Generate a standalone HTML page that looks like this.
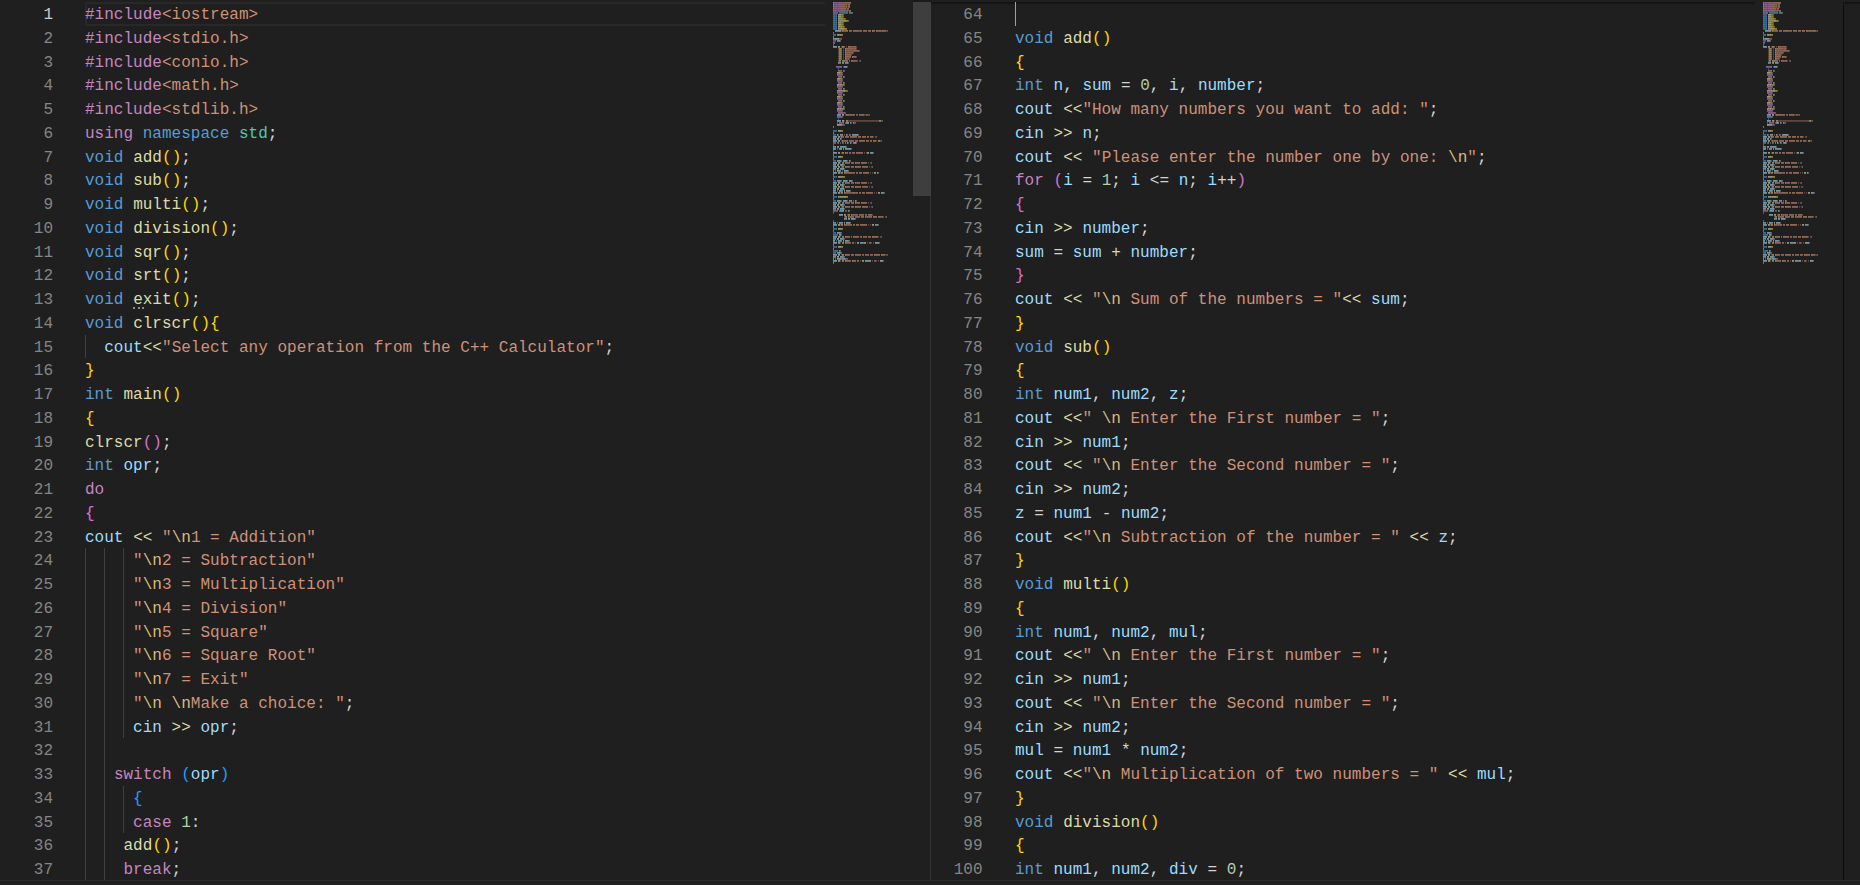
<!DOCTYPE html><html><head><meta charset="utf-8"><style>
*{margin:0;padding:0;box-sizing:border-box}
html,body{width:1860px;height:885px;overflow:hidden;background:#1f1f1f}
body{position:relative;font-family:"Liberation Mono",monospace;font-size:16px}
.ed{position:absolute;top:0;height:880px;overflow:hidden;background:#1f1f1f}
.ln{position:absolute;height:23.75px;line-height:23.75px;padding-top:2px;text-align:right;color:#858585;white-space:pre}
.ln.act{color:#cccccc}
.cl{position:absolute;z-index:2;height:23.75px;line-height:23.75px;padding-top:2px;white-space:pre;color:#d4d4d4;letter-spacing:0.02px}
.cl i{font-style:normal}
.g{position:absolute;width:1px;background:#404040}
.mm{position:absolute;opacity:0.9}
</style></head><body>
<div class="ed" style="left:0px;width:930px">
<div class="ln act" style="top:2.00px;left:0;width:53.00px">1</div>
<div class="cl" style="top:2.00px;left:85px"><i style="color:#c586c0">#include</i><i style="color:#ce9178">&lt;iostream&gt;</i></div>
<div class="ln" style="top:25.75px;left:0;width:53.00px">2</div>
<div class="cl" style="top:25.75px;left:85px"><i style="color:#c586c0">#include</i><i style="color:#ce9178">&lt;stdio.h&gt;</i></div>
<div class="ln" style="top:49.50px;left:0;width:53.00px">3</div>
<div class="cl" style="top:49.50px;left:85px"><i style="color:#c586c0">#include</i><i style="color:#ce9178">&lt;conio.h&gt;</i></div>
<div class="ln" style="top:73.25px;left:0;width:53.00px">4</div>
<div class="cl" style="top:73.25px;left:85px"><i style="color:#c586c0">#include</i><i style="color:#ce9178">&lt;math.h&gt;</i></div>
<div class="ln" style="top:97.00px;left:0;width:53.00px">5</div>
<div class="cl" style="top:97.00px;left:85px"><i style="color:#c586c0">#include</i><i style="color:#ce9178">&lt;stdlib.h&gt;</i></div>
<div class="ln" style="top:120.75px;left:0;width:53.00px">6</div>
<div class="cl" style="top:120.75px;left:85px"><i style="color:#c586c0">using</i> <i style="color:#569cd6">namespace</i> <i style="color:#4ec9b0">std</i><i style="color:#d4d4d4">;</i></div>
<div class="ln" style="top:144.50px;left:0;width:53.00px">7</div>
<div class="cl" style="top:144.50px;left:85px"><i style="color:#569cd6">void</i> <i style="color:#dcdcaa">add</i><i style="color:#ffd700">(</i><i style="color:#ffd700">)</i><i style="color:#d4d4d4">;</i></div>
<div class="ln" style="top:168.25px;left:0;width:53.00px">8</div>
<div class="cl" style="top:168.25px;left:85px"><i style="color:#569cd6">void</i> <i style="color:#dcdcaa">sub</i><i style="color:#ffd700">(</i><i style="color:#ffd700">)</i><i style="color:#d4d4d4">;</i></div>
<div class="ln" style="top:192.00px;left:0;width:53.00px">9</div>
<div class="cl" style="top:192.00px;left:85px"><i style="color:#569cd6">void</i> <i style="color:#dcdcaa">multi</i><i style="color:#ffd700">(</i><i style="color:#ffd700">)</i><i style="color:#d4d4d4">;</i></div>
<div class="ln" style="top:215.75px;left:0;width:53.00px">10</div>
<div class="cl" style="top:215.75px;left:85px"><i style="color:#569cd6">void</i> <i style="color:#dcdcaa">division</i><i style="color:#ffd700">(</i><i style="color:#ffd700">)</i><i style="color:#d4d4d4">;</i></div>
<div class="ln" style="top:239.50px;left:0;width:53.00px">11</div>
<div class="cl" style="top:239.50px;left:85px"><i style="color:#569cd6">void</i> <i style="color:#dcdcaa">sqr</i><i style="color:#ffd700">(</i><i style="color:#ffd700">)</i><i style="color:#d4d4d4">;</i></div>
<div class="ln" style="top:263.25px;left:0;width:53.00px">12</div>
<div class="cl" style="top:263.25px;left:85px"><i style="color:#569cd6">void</i> <i style="color:#dcdcaa">srt</i><i style="color:#ffd700">(</i><i style="color:#ffd700">)</i><i style="color:#d4d4d4">;</i></div>
<div class="ln" style="top:287.00px;left:0;width:53.00px">13</div>
<div class="cl" style="top:287.00px;left:85px"><i style="color:#569cd6">void</i> <i style="color:#dcdcaa">exit</i><i style="color:#ffd700">(</i><i style="color:#ffd700">)</i><i style="color:#d4d4d4">;</i></div>
<div class="ln" style="top:310.75px;left:0;width:53.00px">14</div>
<div class="cl" style="top:310.75px;left:85px"><i style="color:#569cd6">void</i> <i style="color:#dcdcaa">clrscr</i><i style="color:#ffd700">(</i><i style="color:#ffd700">)</i><i style="color:#ffd700">{</i></div>
<div class="ln" style="top:334.50px;left:0;width:53.00px">15</div>
<div class="g" style="top:334.50px;left:85.00px;height:23.75px"></div>
<div class="cl" style="top:334.50px;left:85px">  <i style="color:#9cdcfe">cout</i><i style="color:#dcdcaa">&lt;&lt;</i><i style="color:#ce9178">&quot;</i><i style="color:#ce9178">Select any operation from the C++ Calculator</i><i style="color:#ce9178">&quot;</i><i style="color:#d4d4d4">;</i></div>
<div class="ln" style="top:358.25px;left:0;width:53.00px">16</div>
<div class="cl" style="top:358.25px;left:85px"><i style="color:#ffd700">}</i></div>
<div class="ln" style="top:382.00px;left:0;width:53.00px">17</div>
<div class="cl" style="top:382.00px;left:85px"><i style="color:#569cd6">int</i> <i style="color:#dcdcaa">main</i><i style="color:#ffd700">(</i><i style="color:#ffd700">)</i></div>
<div class="ln" style="top:405.75px;left:0;width:53.00px">18</div>
<div class="cl" style="top:405.75px;left:85px"><i style="color:#ffd700">{</i></div>
<div class="ln" style="top:429.50px;left:0;width:53.00px">19</div>
<div class="cl" style="top:429.50px;left:85px"><i style="color:#dcdcaa">clrscr</i><i style="color:#da70d6">(</i><i style="color:#da70d6">)</i><i style="color:#d4d4d4">;</i></div>
<div class="ln" style="top:453.25px;left:0;width:53.00px">20</div>
<div class="cl" style="top:453.25px;left:85px"><i style="color:#569cd6">int</i> <i style="color:#9cdcfe">opr</i><i style="color:#d4d4d4">;</i></div>
<div class="ln" style="top:477.00px;left:0;width:53.00px">21</div>
<div class="cl" style="top:477.00px;left:85px"><i style="color:#c586c0">do</i></div>
<div class="ln" style="top:500.75px;left:0;width:53.00px">22</div>
<div class="cl" style="top:500.75px;left:85px"><i style="color:#da70d6">{</i></div>
<div class="ln" style="top:524.50px;left:0;width:53.00px">23</div>
<div class="cl" style="top:524.50px;left:85px"><i style="color:#9cdcfe">cout</i> <i style="color:#dcdcaa">&lt;&lt;</i> <i style="color:#ce9178">&quot;</i><i style="color:#d7ba7d">\n</i><i style="color:#ce9178">1 = Addition</i><i style="color:#ce9178">&quot;</i></div>
<div class="ln" style="top:548.25px;left:0;width:53.00px">24</div>
<div class="g" style="top:548.25px;left:85.00px;height:23.75px"></div>
<div class="g" style="top:548.25px;left:104.24px;height:23.75px"></div>
<div class="g" style="top:548.25px;left:123.48px;height:23.75px"></div>
<div class="cl" style="top:548.25px;left:85px">     <i style="color:#ce9178">&quot;</i><i style="color:#d7ba7d">\n</i><i style="color:#ce9178">2 = Subtraction</i><i style="color:#ce9178">&quot;</i></div>
<div class="ln" style="top:572.00px;left:0;width:53.00px">25</div>
<div class="g" style="top:572.00px;left:85.00px;height:23.75px"></div>
<div class="g" style="top:572.00px;left:104.24px;height:23.75px"></div>
<div class="g" style="top:572.00px;left:123.48px;height:23.75px"></div>
<div class="cl" style="top:572.00px;left:85px">     <i style="color:#ce9178">&quot;</i><i style="color:#d7ba7d">\n</i><i style="color:#ce9178">3 = Multiplication</i><i style="color:#ce9178">&quot;</i></div>
<div class="ln" style="top:595.75px;left:0;width:53.00px">26</div>
<div class="g" style="top:595.75px;left:85.00px;height:23.75px"></div>
<div class="g" style="top:595.75px;left:104.24px;height:23.75px"></div>
<div class="g" style="top:595.75px;left:123.48px;height:23.75px"></div>
<div class="cl" style="top:595.75px;left:85px">     <i style="color:#ce9178">&quot;</i><i style="color:#d7ba7d">\n</i><i style="color:#ce9178">4 = Division</i><i style="color:#ce9178">&quot;</i></div>
<div class="ln" style="top:619.50px;left:0;width:53.00px">27</div>
<div class="g" style="top:619.50px;left:85.00px;height:23.75px"></div>
<div class="g" style="top:619.50px;left:104.24px;height:23.75px"></div>
<div class="g" style="top:619.50px;left:123.48px;height:23.75px"></div>
<div class="cl" style="top:619.50px;left:85px">     <i style="color:#ce9178">&quot;</i><i style="color:#d7ba7d">\n</i><i style="color:#ce9178">5 = Square</i><i style="color:#ce9178">&quot;</i></div>
<div class="ln" style="top:643.25px;left:0;width:53.00px">28</div>
<div class="g" style="top:643.25px;left:85.00px;height:23.75px"></div>
<div class="g" style="top:643.25px;left:104.24px;height:23.75px"></div>
<div class="g" style="top:643.25px;left:123.48px;height:23.75px"></div>
<div class="cl" style="top:643.25px;left:85px">     <i style="color:#ce9178">&quot;</i><i style="color:#d7ba7d">\n</i><i style="color:#ce9178">6 = Square Root</i><i style="color:#ce9178">&quot;</i></div>
<div class="ln" style="top:667.00px;left:0;width:53.00px">29</div>
<div class="g" style="top:667.00px;left:85.00px;height:23.75px"></div>
<div class="g" style="top:667.00px;left:104.24px;height:23.75px"></div>
<div class="g" style="top:667.00px;left:123.48px;height:23.75px"></div>
<div class="cl" style="top:667.00px;left:85px">     <i style="color:#ce9178">&quot;</i><i style="color:#d7ba7d">\n</i><i style="color:#ce9178">7 = Exit</i><i style="color:#ce9178">&quot;</i></div>
<div class="ln" style="top:690.75px;left:0;width:53.00px">30</div>
<div class="g" style="top:690.75px;left:85.00px;height:23.75px"></div>
<div class="g" style="top:690.75px;left:104.24px;height:23.75px"></div>
<div class="g" style="top:690.75px;left:123.48px;height:23.75px"></div>
<div class="cl" style="top:690.75px;left:85px">     <i style="color:#ce9178">&quot;</i><i style="color:#d7ba7d">\n</i><i style="color:#ce9178"> </i><i style="color:#d7ba7d">\n</i><i style="color:#ce9178">Make a choice: </i><i style="color:#ce9178">&quot;</i><i style="color:#d4d4d4">;</i></div>
<div class="ln" style="top:714.50px;left:0;width:53.00px">31</div>
<div class="g" style="top:714.50px;left:85.00px;height:23.75px"></div>
<div class="g" style="top:714.50px;left:104.24px;height:23.75px"></div>
<div class="g" style="top:714.50px;left:123.48px;height:23.75px"></div>
<div class="cl" style="top:714.50px;left:85px">     <i style="color:#9cdcfe">cin</i> <i style="color:#dcdcaa">&gt;&gt;</i> <i style="color:#9cdcfe">opr</i><i style="color:#d4d4d4">;</i></div>
<div class="ln" style="top:738.25px;left:0;width:53.00px">32</div>
<div class="g" style="top:738.25px;left:85.00px;height:23.75px"></div>
<div class="g" style="top:738.25px;left:104.24px;height:23.75px"></div>
<div class="cl" style="top:738.25px;left:85px"></div>
<div class="ln" style="top:762.00px;left:0;width:53.00px">33</div>
<div class="g" style="top:762.00px;left:85.00px;height:23.75px"></div>
<div class="g" style="top:762.00px;left:104.24px;height:23.75px"></div>
<div class="cl" style="top:762.00px;left:85px">   <i style="color:#c586c0">switch</i> <i style="color:#179fff">(</i><i style="color:#9cdcfe">opr</i><i style="color:#179fff">)</i></div>
<div class="ln" style="top:785.75px;left:0;width:53.00px">34</div>
<div class="g" style="top:785.75px;left:85.00px;height:23.75px"></div>
<div class="g" style="top:785.75px;left:104.24px;height:23.75px"></div>
<div class="g" style="top:785.75px;left:123.48px;height:23.75px"></div>
<div class="cl" style="top:785.75px;left:85px">     <i style="color:#179fff">{</i></div>
<div class="ln" style="top:809.50px;left:0;width:53.00px">35</div>
<div class="g" style="top:809.50px;left:85.00px;height:23.75px"></div>
<div class="g" style="top:809.50px;left:104.24px;height:23.75px"></div>
<div class="g" style="top:809.50px;left:123.48px;height:23.75px"></div>
<div class="cl" style="top:809.50px;left:85px">     <i style="color:#c586c0">case</i> <i style="color:#b5cea8">1</i><i style="color:#d4d4d4">:</i></div>
<div class="ln" style="top:833.25px;left:0;width:53.00px">36</div>
<div class="g" style="top:833.25px;left:85.00px;height:23.75px"></div>
<div class="g" style="top:833.25px;left:104.24px;height:23.75px"></div>
<div class="cl" style="top:833.25px;left:85px">    <i style="color:#dcdcaa">add</i><i style="color:#ffd700">(</i><i style="color:#ffd700">)</i><i style="color:#d4d4d4">;</i></div>
<div class="ln" style="top:857.00px;left:0;width:53.00px">37</div>
<div class="g" style="top:857.00px;left:85.00px;height:23.75px"></div>
<div class="g" style="top:857.00px;left:104.24px;height:23.75px"></div>
<div class="cl" style="top:857.00px;left:85px">    <i style="color:#c586c0">break</i><i style="color:#d4d4d4">;</i></div>
</div>
<div class="ed" style="left:931px;width:929px">
<div class="ln" style="top:2.00px;left:0;width:51.50px">64</div>
<div class="cl" style="top:2.00px;left:84px"></div>
<div class="ln" style="top:25.75px;left:0;width:51.50px">65</div>
<div class="cl" style="top:25.75px;left:84px"><i style="color:#569cd6">void</i> <i style="color:#dcdcaa">add</i><i style="color:#ffd700">(</i><i style="color:#ffd700">)</i></div>
<div class="ln" style="top:49.50px;left:0;width:51.50px">66</div>
<div class="cl" style="top:49.50px;left:84px"><i style="color:#ffd700">{</i></div>
<div class="ln" style="top:73.25px;left:0;width:51.50px">67</div>
<div class="cl" style="top:73.25px;left:84px"><i style="color:#569cd6">int</i> <i style="color:#9cdcfe">n</i><i style="color:#d4d4d4">,</i> <i style="color:#9cdcfe">sum</i> <i style="color:#d4d4d4">=</i> <i style="color:#b5cea8">0</i><i style="color:#d4d4d4">,</i> <i style="color:#9cdcfe">i</i><i style="color:#d4d4d4">,</i> <i style="color:#9cdcfe">number</i><i style="color:#d4d4d4">;</i></div>
<div class="ln" style="top:97.00px;left:0;width:51.50px">68</div>
<div class="cl" style="top:97.00px;left:84px"><i style="color:#9cdcfe">cout</i> <i style="color:#dcdcaa">&lt;&lt;</i><i style="color:#ce9178">&quot;</i><i style="color:#ce9178">How many numbers you want to add: </i><i style="color:#ce9178">&quot;</i><i style="color:#d4d4d4">;</i></div>
<div class="ln" style="top:120.75px;left:0;width:51.50px">69</div>
<div class="cl" style="top:120.75px;left:84px"><i style="color:#9cdcfe">cin</i> <i style="color:#dcdcaa">&gt;&gt;</i> <i style="color:#9cdcfe">n</i><i style="color:#d4d4d4">;</i></div>
<div class="ln" style="top:144.50px;left:0;width:51.50px">70</div>
<div class="cl" style="top:144.50px;left:84px"><i style="color:#9cdcfe">cout</i> <i style="color:#dcdcaa">&lt;&lt;</i> <i style="color:#ce9178">&quot;</i><i style="color:#ce9178">Please enter the number one by one: </i><i style="color:#d7ba7d">\n</i><i style="color:#ce9178">&quot;</i><i style="color:#d4d4d4">;</i></div>
<div class="ln" style="top:168.25px;left:0;width:51.50px">71</div>
<div class="cl" style="top:168.25px;left:84px"><i style="color:#c586c0">for</i> <i style="color:#da70d6">(</i><i style="color:#9cdcfe">i</i> <i style="color:#d4d4d4">=</i> <i style="color:#b5cea8">1</i><i style="color:#d4d4d4">;</i> <i style="color:#9cdcfe">i</i> <i style="color:#d4d4d4">&lt;</i><i style="color:#d4d4d4">=</i> <i style="color:#9cdcfe">n</i><i style="color:#d4d4d4">;</i> <i style="color:#9cdcfe">i</i><i style="color:#d4d4d4">+</i><i style="color:#d4d4d4">+</i><i style="color:#da70d6">)</i></div>
<div class="ln" style="top:192.00px;left:0;width:51.50px">72</div>
<div class="cl" style="top:192.00px;left:84px"><i style="color:#da70d6">{</i></div>
<div class="ln" style="top:215.75px;left:0;width:51.50px">73</div>
<div class="cl" style="top:215.75px;left:84px"><i style="color:#9cdcfe">cin</i> <i style="color:#dcdcaa">&gt;&gt;</i> <i style="color:#9cdcfe">number</i><i style="color:#d4d4d4">;</i></div>
<div class="ln" style="top:239.50px;left:0;width:51.50px">74</div>
<div class="cl" style="top:239.50px;left:84px"><i style="color:#9cdcfe">sum</i> <i style="color:#d4d4d4">=</i> <i style="color:#9cdcfe">sum</i> <i style="color:#d4d4d4">+</i> <i style="color:#9cdcfe">number</i><i style="color:#d4d4d4">;</i></div>
<div class="ln" style="top:263.25px;left:0;width:51.50px">75</div>
<div class="cl" style="top:263.25px;left:84px"><i style="color:#da70d6">}</i></div>
<div class="ln" style="top:287.00px;left:0;width:51.50px">76</div>
<div class="cl" style="top:287.00px;left:84px"><i style="color:#9cdcfe">cout</i> <i style="color:#dcdcaa">&lt;&lt;</i> <i style="color:#ce9178">&quot;</i><i style="color:#d7ba7d">\n</i><i style="color:#ce9178"> Sum of the numbers = </i><i style="color:#ce9178">&quot;</i><i style="color:#dcdcaa">&lt;&lt;</i> <i style="color:#9cdcfe">sum</i><i style="color:#d4d4d4">;</i></div>
<div class="ln" style="top:310.75px;left:0;width:51.50px">77</div>
<div class="cl" style="top:310.75px;left:84px"><i style="color:#ffd700">}</i></div>
<div class="ln" style="top:334.50px;left:0;width:51.50px">78</div>
<div class="cl" style="top:334.50px;left:84px"><i style="color:#569cd6">void</i> <i style="color:#dcdcaa">sub</i><i style="color:#ffd700">(</i><i style="color:#ffd700">)</i></div>
<div class="ln" style="top:358.25px;left:0;width:51.50px">79</div>
<div class="cl" style="top:358.25px;left:84px"><i style="color:#ffd700">{</i></div>
<div class="ln" style="top:382.00px;left:0;width:51.50px">80</div>
<div class="cl" style="top:382.00px;left:84px"><i style="color:#569cd6">int</i> <i style="color:#9cdcfe">num1</i><i style="color:#d4d4d4">,</i> <i style="color:#9cdcfe">num2</i><i style="color:#d4d4d4">,</i> <i style="color:#9cdcfe">z</i><i style="color:#d4d4d4">;</i></div>
<div class="ln" style="top:405.75px;left:0;width:51.50px">81</div>
<div class="cl" style="top:405.75px;left:84px"><i style="color:#9cdcfe">cout</i> <i style="color:#dcdcaa">&lt;&lt;</i><i style="color:#ce9178">&quot;</i><i style="color:#ce9178"> </i><i style="color:#d7ba7d">\n</i><i style="color:#ce9178"> Enter the First number = </i><i style="color:#ce9178">&quot;</i><i style="color:#d4d4d4">;</i></div>
<div class="ln" style="top:429.50px;left:0;width:51.50px">82</div>
<div class="cl" style="top:429.50px;left:84px"><i style="color:#9cdcfe">cin</i> <i style="color:#dcdcaa">&gt;&gt;</i> <i style="color:#9cdcfe">num1</i><i style="color:#d4d4d4">;</i></div>
<div class="ln" style="top:453.25px;left:0;width:51.50px">83</div>
<div class="cl" style="top:453.25px;left:84px"><i style="color:#9cdcfe">cout</i> <i style="color:#dcdcaa">&lt;&lt;</i> <i style="color:#ce9178">&quot;</i><i style="color:#d7ba7d">\n</i><i style="color:#ce9178"> Enter the Second number = </i><i style="color:#ce9178">&quot;</i><i style="color:#d4d4d4">;</i></div>
<div class="ln" style="top:477.00px;left:0;width:51.50px">84</div>
<div class="cl" style="top:477.00px;left:84px"><i style="color:#9cdcfe">cin</i> <i style="color:#dcdcaa">&gt;&gt;</i> <i style="color:#9cdcfe">num2</i><i style="color:#d4d4d4">;</i></div>
<div class="ln" style="top:500.75px;left:0;width:51.50px">85</div>
<div class="cl" style="top:500.75px;left:84px"><i style="color:#9cdcfe">z</i> <i style="color:#d4d4d4">=</i> <i style="color:#9cdcfe">num1</i> <i style="color:#d4d4d4">-</i> <i style="color:#9cdcfe">num2</i><i style="color:#d4d4d4">;</i></div>
<div class="ln" style="top:524.50px;left:0;width:51.50px">86</div>
<div class="cl" style="top:524.50px;left:84px"><i style="color:#9cdcfe">cout</i> <i style="color:#dcdcaa">&lt;&lt;</i><i style="color:#ce9178">&quot;</i><i style="color:#d7ba7d">\n</i><i style="color:#ce9178"> Subtraction of the number = </i><i style="color:#ce9178">&quot;</i> <i style="color:#dcdcaa">&lt;&lt;</i> <i style="color:#9cdcfe">z</i><i style="color:#d4d4d4">;</i></div>
<div class="ln" style="top:548.25px;left:0;width:51.50px">87</div>
<div class="cl" style="top:548.25px;left:84px"><i style="color:#ffd700">}</i></div>
<div class="ln" style="top:572.00px;left:0;width:51.50px">88</div>
<div class="cl" style="top:572.00px;left:84px"><i style="color:#569cd6">void</i> <i style="color:#dcdcaa">multi</i><i style="color:#ffd700">(</i><i style="color:#ffd700">)</i></div>
<div class="ln" style="top:595.75px;left:0;width:51.50px">89</div>
<div class="cl" style="top:595.75px;left:84px"><i style="color:#ffd700">{</i></div>
<div class="ln" style="top:619.50px;left:0;width:51.50px">90</div>
<div class="cl" style="top:619.50px;left:84px"><i style="color:#569cd6">int</i> <i style="color:#9cdcfe">num1</i><i style="color:#d4d4d4">,</i> <i style="color:#9cdcfe">num2</i><i style="color:#d4d4d4">,</i> <i style="color:#9cdcfe">mul</i><i style="color:#d4d4d4">;</i></div>
<div class="ln" style="top:643.25px;left:0;width:51.50px">91</div>
<div class="cl" style="top:643.25px;left:84px"><i style="color:#9cdcfe">cout</i> <i style="color:#dcdcaa">&lt;&lt;</i><i style="color:#ce9178">&quot;</i><i style="color:#ce9178"> </i><i style="color:#d7ba7d">\n</i><i style="color:#ce9178"> Enter the First number = </i><i style="color:#ce9178">&quot;</i><i style="color:#d4d4d4">;</i></div>
<div class="ln" style="top:667.00px;left:0;width:51.50px">92</div>
<div class="cl" style="top:667.00px;left:84px"><i style="color:#9cdcfe">cin</i> <i style="color:#dcdcaa">&gt;&gt;</i> <i style="color:#9cdcfe">num1</i><i style="color:#d4d4d4">;</i></div>
<div class="ln" style="top:690.75px;left:0;width:51.50px">93</div>
<div class="cl" style="top:690.75px;left:84px"><i style="color:#9cdcfe">cout</i> <i style="color:#dcdcaa">&lt;&lt;</i> <i style="color:#ce9178">&quot;</i><i style="color:#d7ba7d">\n</i><i style="color:#ce9178"> Enter the Second number = </i><i style="color:#ce9178">&quot;</i><i style="color:#d4d4d4">;</i></div>
<div class="ln" style="top:714.50px;left:0;width:51.50px">94</div>
<div class="cl" style="top:714.50px;left:84px"><i style="color:#9cdcfe">cin</i> <i style="color:#dcdcaa">&gt;&gt;</i> <i style="color:#9cdcfe">num2</i><i style="color:#d4d4d4">;</i></div>
<div class="ln" style="top:738.25px;left:0;width:51.50px">95</div>
<div class="cl" style="top:738.25px;left:84px"><i style="color:#9cdcfe">mul</i> <i style="color:#d4d4d4">=</i> <i style="color:#9cdcfe">num1</i> <i style="color:#d4d4d4">*</i> <i style="color:#9cdcfe">num2</i><i style="color:#d4d4d4">;</i></div>
<div class="ln" style="top:762.00px;left:0;width:51.50px">96</div>
<div class="cl" style="top:762.00px;left:84px"><i style="color:#9cdcfe">cout</i> <i style="color:#dcdcaa">&lt;&lt;</i><i style="color:#ce9178">&quot;</i><i style="color:#d7ba7d">\n</i><i style="color:#ce9178"> Multiplication of two numbers = </i><i style="color:#ce9178">&quot;</i> <i style="color:#dcdcaa">&lt;&lt;</i> <i style="color:#9cdcfe">mul</i><i style="color:#d4d4d4">;</i></div>
<div class="ln" style="top:785.75px;left:0;width:51.50px">97</div>
<div class="cl" style="top:785.75px;left:84px"><i style="color:#ffd700">}</i></div>
<div class="ln" style="top:809.50px;left:0;width:51.50px">98</div>
<div class="cl" style="top:809.50px;left:84px"><i style="color:#569cd6">void</i> <i style="color:#dcdcaa">division</i><i style="color:#ffd700">(</i><i style="color:#ffd700">)</i></div>
<div class="ln" style="top:833.25px;left:0;width:51.50px">99</div>
<div class="cl" style="top:833.25px;left:84px"><i style="color:#ffd700">{</i></div>
<div class="ln" style="top:857.00px;left:0;width:51.50px">100</div>
<div class="cl" style="top:857.00px;left:84px"><i style="color:#569cd6">int</i> <i style="color:#9cdcfe">num1</i><i style="color:#d4d4d4">,</i> <i style="color:#9cdcfe">num2</i><i style="color:#d4d4d4">,</i> <i style="color:#9cdcfe">div</i> <i style="color:#d4d4d4">=</i> <i style="color:#b5cea8">0</i><i style="color:#d4d4d4">;</i></div>
</div>
<div style="position:absolute;left:85px;top:2px;width:739.5px;height:23.75px;border:2px solid #282828;border-right:none;z-index:1"></div>
<svg class="mm" style="left:833px;top:2px" width="90" height="270" viewBox="0 0 90 270"><rect x="0" y="0" width="1" height="1.8" fill="#c586c0" fill-opacity="0.85"/><rect x="1" y="0" width="1" height="1.8" fill="#c586c0" fill-opacity="0.60"/><rect x="2" y="0" width="2" height="1.8" fill="#c586c0" fill-opacity="0.70"/><rect x="4" y="0" width="1" height="1.8" fill="#c586c0" fill-opacity="0.60"/><rect x="5" y="0" width="3" height="1.8" fill="#c586c0" fill-opacity="0.70"/><rect x="8" y="0" width="1" height="1.8" fill="#ce9178" fill-opacity="0.70"/><rect x="9" y="0" width="1" height="1.8" fill="#ce9178" fill-opacity="0.60"/><rect x="10" y="0" width="8" height="1.8" fill="#ce9178" fill-opacity="0.70"/><rect x="0" y="2" width="1" height="1.8" fill="#c586c0" fill-opacity="0.85"/><rect x="1" y="2" width="1" height="1.8" fill="#c586c0" fill-opacity="0.60"/><rect x="2" y="2" width="2" height="1.8" fill="#c586c0" fill-opacity="0.70"/><rect x="4" y="2" width="1" height="1.8" fill="#c586c0" fill-opacity="0.60"/><rect x="5" y="2" width="3" height="1.8" fill="#c586c0" fill-opacity="0.70"/><rect x="8" y="2" width="4" height="1.8" fill="#ce9178" fill-opacity="0.70"/><rect x="12" y="2" width="1" height="1.8" fill="#ce9178" fill-opacity="0.60"/><rect x="13" y="2" width="1" height="1.8" fill="#ce9178" fill-opacity="0.70"/><rect x="14" y="2" width="1" height="1.8" fill="#ce9178" fill-opacity="0.40"/><rect x="15" y="2" width="2" height="1.8" fill="#ce9178" fill-opacity="0.70"/><rect x="0" y="4" width="1" height="1.8" fill="#c586c0" fill-opacity="0.85"/><rect x="1" y="4" width="1" height="1.8" fill="#c586c0" fill-opacity="0.60"/><rect x="2" y="4" width="2" height="1.8" fill="#c586c0" fill-opacity="0.70"/><rect x="4" y="4" width="1" height="1.8" fill="#c586c0" fill-opacity="0.60"/><rect x="5" y="4" width="3" height="1.8" fill="#c586c0" fill-opacity="0.70"/><rect x="8" y="4" width="4" height="1.8" fill="#ce9178" fill-opacity="0.70"/><rect x="12" y="4" width="1" height="1.8" fill="#ce9178" fill-opacity="0.60"/><rect x="13" y="4" width="1" height="1.8" fill="#ce9178" fill-opacity="0.70"/><rect x="14" y="4" width="1" height="1.8" fill="#ce9178" fill-opacity="0.40"/><rect x="15" y="4" width="2" height="1.8" fill="#ce9178" fill-opacity="0.70"/><rect x="0" y="6" width="1" height="1.8" fill="#c586c0" fill-opacity="0.85"/><rect x="1" y="6" width="1" height="1.8" fill="#c586c0" fill-opacity="0.60"/><rect x="2" y="6" width="2" height="1.8" fill="#c586c0" fill-opacity="0.70"/><rect x="4" y="6" width="1" height="1.8" fill="#c586c0" fill-opacity="0.60"/><rect x="5" y="6" width="3" height="1.8" fill="#c586c0" fill-opacity="0.70"/><rect x="8" y="6" width="5" height="1.8" fill="#ce9178" fill-opacity="0.70"/><rect x="13" y="6" width="1" height="1.8" fill="#ce9178" fill-opacity="0.40"/><rect x="14" y="6" width="2" height="1.8" fill="#ce9178" fill-opacity="0.70"/><rect x="0" y="8" width="1" height="1.8" fill="#c586c0" fill-opacity="0.85"/><rect x="1" y="8" width="1" height="1.8" fill="#c586c0" fill-opacity="0.60"/><rect x="2" y="8" width="2" height="1.8" fill="#c586c0" fill-opacity="0.70"/><rect x="4" y="8" width="1" height="1.8" fill="#c586c0" fill-opacity="0.60"/><rect x="5" y="8" width="3" height="1.8" fill="#c586c0" fill-opacity="0.70"/><rect x="8" y="8" width="4" height="1.8" fill="#ce9178" fill-opacity="0.70"/><rect x="12" y="8" width="2" height="1.8" fill="#ce9178" fill-opacity="0.60"/><rect x="14" y="8" width="1" height="1.8" fill="#ce9178" fill-opacity="0.70"/><rect x="15" y="8" width="1" height="1.8" fill="#ce9178" fill-opacity="0.40"/><rect x="16" y="8" width="2" height="1.8" fill="#ce9178" fill-opacity="0.70"/><rect x="0" y="10" width="2" height="1.8" fill="#c586c0" fill-opacity="0.70"/><rect x="2" y="10" width="1" height="1.8" fill="#c586c0" fill-opacity="0.60"/><rect x="3" y="10" width="2" height="1.8" fill="#c586c0" fill-opacity="0.70"/><rect x="6" y="10" width="9" height="1.8" fill="#569cd6" fill-opacity="0.70"/><rect x="16" y="10" width="3" height="1.8" fill="#4ec9b0" fill-opacity="0.70"/><rect x="19" y="10" width="1" height="1.8" fill="#d4d4d4" fill-opacity="0.40"/><rect x="0" y="12" width="2" height="1.8" fill="#569cd6" fill-opacity="0.70"/><rect x="2" y="12" width="1" height="1.8" fill="#569cd6" fill-opacity="0.60"/><rect x="3" y="12" width="1" height="1.8" fill="#569cd6" fill-opacity="0.70"/><rect x="5" y="12" width="3" height="1.8" fill="#dcdcaa" fill-opacity="0.70"/><rect x="8" y="12" width="1" height="1.8" fill="#ffd700" fill-opacity="0.60"/><rect x="9" y="12" width="1" height="1.8" fill="#ffd700" fill-opacity="0.60"/><rect x="10" y="12" width="1" height="1.8" fill="#d4d4d4" fill-opacity="0.40"/><rect x="0" y="14" width="2" height="1.8" fill="#569cd6" fill-opacity="0.70"/><rect x="2" y="14" width="1" height="1.8" fill="#569cd6" fill-opacity="0.60"/><rect x="3" y="14" width="1" height="1.8" fill="#569cd6" fill-opacity="0.70"/><rect x="5" y="14" width="3" height="1.8" fill="#dcdcaa" fill-opacity="0.70"/><rect x="8" y="14" width="1" height="1.8" fill="#ffd700" fill-opacity="0.60"/><rect x="9" y="14" width="1" height="1.8" fill="#ffd700" fill-opacity="0.60"/><rect x="10" y="14" width="1" height="1.8" fill="#d4d4d4" fill-opacity="0.40"/><rect x="0" y="16" width="2" height="1.8" fill="#569cd6" fill-opacity="0.70"/><rect x="2" y="16" width="1" height="1.8" fill="#569cd6" fill-opacity="0.60"/><rect x="3" y="16" width="1" height="1.8" fill="#569cd6" fill-opacity="0.70"/><rect x="5" y="16" width="2" height="1.8" fill="#dcdcaa" fill-opacity="0.70"/><rect x="7" y="16" width="1" height="1.8" fill="#dcdcaa" fill-opacity="0.60"/><rect x="8" y="16" width="1" height="1.8" fill="#dcdcaa" fill-opacity="0.70"/><rect x="9" y="16" width="1" height="1.8" fill="#dcdcaa" fill-opacity="0.60"/><rect x="10" y="16" width="1" height="1.8" fill="#ffd700" fill-opacity="0.60"/><rect x="11" y="16" width="1" height="1.8" fill="#ffd700" fill-opacity="0.60"/><rect x="12" y="16" width="1" height="1.8" fill="#d4d4d4" fill-opacity="0.40"/><rect x="0" y="18" width="2" height="1.8" fill="#569cd6" fill-opacity="0.70"/><rect x="2" y="18" width="1" height="1.8" fill="#569cd6" fill-opacity="0.60"/><rect x="3" y="18" width="1" height="1.8" fill="#569cd6" fill-opacity="0.70"/><rect x="5" y="18" width="1" height="1.8" fill="#dcdcaa" fill-opacity="0.70"/><rect x="6" y="18" width="1" height="1.8" fill="#dcdcaa" fill-opacity="0.60"/><rect x="7" y="18" width="1" height="1.8" fill="#dcdcaa" fill-opacity="0.70"/><rect x="8" y="18" width="1" height="1.8" fill="#dcdcaa" fill-opacity="0.60"/><rect x="9" y="18" width="1" height="1.8" fill="#dcdcaa" fill-opacity="0.70"/><rect x="10" y="18" width="1" height="1.8" fill="#dcdcaa" fill-opacity="0.60"/><rect x="11" y="18" width="2" height="1.8" fill="#dcdcaa" fill-opacity="0.70"/><rect x="13" y="18" width="1" height="1.8" fill="#ffd700" fill-opacity="0.60"/><rect x="14" y="18" width="1" height="1.8" fill="#ffd700" fill-opacity="0.60"/><rect x="15" y="18" width="1" height="1.8" fill="#d4d4d4" fill-opacity="0.40"/><rect x="0" y="20" width="2" height="1.8" fill="#569cd6" fill-opacity="0.70"/><rect x="2" y="20" width="1" height="1.8" fill="#569cd6" fill-opacity="0.60"/><rect x="3" y="20" width="1" height="1.8" fill="#569cd6" fill-opacity="0.70"/><rect x="5" y="20" width="3" height="1.8" fill="#dcdcaa" fill-opacity="0.70"/><rect x="8" y="20" width="1" height="1.8" fill="#ffd700" fill-opacity="0.60"/><rect x="9" y="20" width="1" height="1.8" fill="#ffd700" fill-opacity="0.60"/><rect x="10" y="20" width="1" height="1.8" fill="#d4d4d4" fill-opacity="0.40"/><rect x="0" y="22" width="2" height="1.8" fill="#569cd6" fill-opacity="0.70"/><rect x="2" y="22" width="1" height="1.8" fill="#569cd6" fill-opacity="0.60"/><rect x="3" y="22" width="1" height="1.8" fill="#569cd6" fill-opacity="0.70"/><rect x="5" y="22" width="3" height="1.8" fill="#dcdcaa" fill-opacity="0.70"/><rect x="8" y="22" width="1" height="1.8" fill="#ffd700" fill-opacity="0.60"/><rect x="9" y="22" width="1" height="1.8" fill="#ffd700" fill-opacity="0.60"/><rect x="10" y="22" width="1" height="1.8" fill="#d4d4d4" fill-opacity="0.40"/><rect x="0" y="24" width="2" height="1.8" fill="#569cd6" fill-opacity="0.70"/><rect x="2" y="24" width="1" height="1.8" fill="#569cd6" fill-opacity="0.60"/><rect x="3" y="24" width="1" height="1.8" fill="#569cd6" fill-opacity="0.70"/><rect x="5" y="24" width="2" height="1.8" fill="#dcdcaa" fill-opacity="0.70"/><rect x="7" y="24" width="1" height="1.8" fill="#dcdcaa" fill-opacity="0.60"/><rect x="8" y="24" width="1" height="1.8" fill="#dcdcaa" fill-opacity="0.70"/><rect x="9" y="24" width="1" height="1.8" fill="#ffd700" fill-opacity="0.60"/><rect x="10" y="24" width="1" height="1.8" fill="#ffd700" fill-opacity="0.60"/><rect x="11" y="24" width="1" height="1.8" fill="#d4d4d4" fill-opacity="0.40"/><rect x="0" y="26" width="2" height="1.8" fill="#569cd6" fill-opacity="0.70"/><rect x="2" y="26" width="1" height="1.8" fill="#569cd6" fill-opacity="0.60"/><rect x="3" y="26" width="1" height="1.8" fill="#569cd6" fill-opacity="0.70"/><rect x="5" y="26" width="1" height="1.8" fill="#dcdcaa" fill-opacity="0.70"/><rect x="6" y="26" width="1" height="1.8" fill="#dcdcaa" fill-opacity="0.60"/><rect x="7" y="26" width="4" height="1.8" fill="#dcdcaa" fill-opacity="0.70"/><rect x="11" y="26" width="1" height="1.8" fill="#ffd700" fill-opacity="0.60"/><rect x="12" y="26" width="1" height="1.8" fill="#ffd700" fill-opacity="0.60"/><rect x="13" y="26" width="1" height="1.8" fill="#ffd700" fill-opacity="0.60"/><rect x="2" y="28" width="4" height="1.8" fill="#9cdcfe" fill-opacity="0.70"/><rect x="6" y="28" width="2" height="1.8" fill="#dcdcaa" fill-opacity="0.70"/><rect x="8" y="28" width="1" height="1.8" fill="#ce9178" fill-opacity="0.40"/><rect x="9" y="28" width="1" height="1.8" fill="#ce9178" fill-opacity="0.85"/><rect x="10" y="28" width="1" height="1.8" fill="#ce9178" fill-opacity="0.70"/><rect x="11" y="28" width="1" height="1.8" fill="#ce9178" fill-opacity="0.60"/><rect x="12" y="28" width="3" height="1.8" fill="#ce9178" fill-opacity="0.70"/><rect x="16" y="28" width="3" height="1.8" fill="#ce9178" fill-opacity="0.70"/><rect x="20" y="28" width="6" height="1.8" fill="#ce9178" fill-opacity="0.70"/><rect x="26" y="28" width="1" height="1.8" fill="#ce9178" fill-opacity="0.60"/><rect x="27" y="28" width="2" height="1.8" fill="#ce9178" fill-opacity="0.70"/><rect x="30" y="28" width="4" height="1.8" fill="#ce9178" fill-opacity="0.70"/><rect x="35" y="28" width="3" height="1.8" fill="#ce9178" fill-opacity="0.70"/><rect x="39" y="28" width="1" height="1.8" fill="#ce9178" fill-opacity="0.85"/><rect x="40" y="28" width="2" height="1.8" fill="#ce9178" fill-opacity="0.70"/><rect x="43" y="28" width="1" height="1.8" fill="#ce9178" fill-opacity="0.85"/><rect x="44" y="28" width="1" height="1.8" fill="#ce9178" fill-opacity="0.70"/><rect x="45" y="28" width="1" height="1.8" fill="#ce9178" fill-opacity="0.60"/><rect x="46" y="28" width="2" height="1.8" fill="#ce9178" fill-opacity="0.70"/><rect x="48" y="28" width="1" height="1.8" fill="#ce9178" fill-opacity="0.60"/><rect x="49" y="28" width="4" height="1.8" fill="#ce9178" fill-opacity="0.70"/><rect x="53" y="28" width="1" height="1.8" fill="#ce9178" fill-opacity="0.40"/><rect x="54" y="28" width="1" height="1.8" fill="#d4d4d4" fill-opacity="0.40"/><rect x="0" y="30" width="1" height="1.8" fill="#ffd700" fill-opacity="0.60"/><rect x="0" y="32" width="1" height="1.8" fill="#569cd6" fill-opacity="0.60"/><rect x="1" y="32" width="2" height="1.8" fill="#569cd6" fill-opacity="0.70"/><rect x="4" y="32" width="2" height="1.8" fill="#dcdcaa" fill-opacity="0.70"/><rect x="6" y="32" width="1" height="1.8" fill="#dcdcaa" fill-opacity="0.60"/><rect x="7" y="32" width="1" height="1.8" fill="#dcdcaa" fill-opacity="0.70"/><rect x="8" y="32" width="1" height="1.8" fill="#ffd700" fill-opacity="0.60"/><rect x="9" y="32" width="1" height="1.8" fill="#ffd700" fill-opacity="0.60"/><rect x="0" y="34" width="1" height="1.8" fill="#ffd700" fill-opacity="0.60"/><rect x="0" y="36" width="1" height="1.8" fill="#dcdcaa" fill-opacity="0.70"/><rect x="1" y="36" width="1" height="1.8" fill="#dcdcaa" fill-opacity="0.60"/><rect x="2" y="36" width="4" height="1.8" fill="#dcdcaa" fill-opacity="0.70"/><rect x="6" y="36" width="1" height="1.8" fill="#da70d6" fill-opacity="0.60"/><rect x="7" y="36" width="1" height="1.8" fill="#da70d6" fill-opacity="0.60"/><rect x="8" y="36" width="1" height="1.8" fill="#d4d4d4" fill-opacity="0.40"/><rect x="0" y="38" width="1" height="1.8" fill="#569cd6" fill-opacity="0.60"/><rect x="1" y="38" width="2" height="1.8" fill="#569cd6" fill-opacity="0.70"/><rect x="4" y="38" width="3" height="1.8" fill="#9cdcfe" fill-opacity="0.70"/><rect x="7" y="38" width="1" height="1.8" fill="#d4d4d4" fill-opacity="0.40"/><rect x="0" y="40" width="2" height="1.8" fill="#c586c0" fill-opacity="0.70"/><rect x="0" y="42" width="1" height="1.8" fill="#da70d6" fill-opacity="0.60"/><rect x="0" y="44" width="4" height="1.8" fill="#9cdcfe" fill-opacity="0.70"/><rect x="5" y="44" width="2" height="1.8" fill="#dcdcaa" fill-opacity="0.70"/><rect x="8" y="44" width="1" height="1.8" fill="#ce9178" fill-opacity="0.40"/><rect x="9" y="44" width="2" height="1.8" fill="#d7ba7d" fill-opacity="0.70"/><rect x="11" y="44" width="1" height="1.8" fill="#ce9178" fill-opacity="0.60"/><rect x="13" y="44" width="1" height="1.8" fill="#ce9178" fill-opacity="0.40"/><rect x="15" y="44" width="1" height="1.8" fill="#ce9178" fill-opacity="0.85"/><rect x="16" y="44" width="2" height="1.8" fill="#ce9178" fill-opacity="0.70"/><rect x="18" y="44" width="1" height="1.8" fill="#ce9178" fill-opacity="0.60"/><rect x="19" y="44" width="1" height="1.8" fill="#ce9178" fill-opacity="0.70"/><rect x="20" y="44" width="1" height="1.8" fill="#ce9178" fill-opacity="0.60"/><rect x="21" y="44" width="2" height="1.8" fill="#ce9178" fill-opacity="0.70"/><rect x="23" y="44" width="1" height="1.8" fill="#ce9178" fill-opacity="0.40"/><rect x="5" y="46" width="1" height="1.8" fill="#ce9178" fill-opacity="0.40"/><rect x="6" y="46" width="2" height="1.8" fill="#d7ba7d" fill-opacity="0.70"/><rect x="8" y="46" width="1" height="1.8" fill="#ce9178" fill-opacity="0.70"/><rect x="10" y="46" width="1" height="1.8" fill="#ce9178" fill-opacity="0.40"/><rect x="12" y="46" width="1" height="1.8" fill="#ce9178" fill-opacity="0.85"/><rect x="13" y="46" width="7" height="1.8" fill="#ce9178" fill-opacity="0.70"/><rect x="20" y="46" width="1" height="1.8" fill="#ce9178" fill-opacity="0.60"/><rect x="21" y="46" width="2" height="1.8" fill="#ce9178" fill-opacity="0.70"/><rect x="23" y="46" width="1" height="1.8" fill="#ce9178" fill-opacity="0.40"/><rect x="5" y="48" width="1" height="1.8" fill="#ce9178" fill-opacity="0.40"/><rect x="6" y="48" width="2" height="1.8" fill="#d7ba7d" fill-opacity="0.70"/><rect x="8" y="48" width="1" height="1.8" fill="#ce9178" fill-opacity="0.70"/><rect x="10" y="48" width="1" height="1.8" fill="#ce9178" fill-opacity="0.40"/><rect x="12" y="48" width="1" height="1.8" fill="#ce9178" fill-opacity="0.85"/><rect x="13" y="48" width="1" height="1.8" fill="#ce9178" fill-opacity="0.70"/><rect x="14" y="48" width="1" height="1.8" fill="#ce9178" fill-opacity="0.60"/><rect x="15" y="48" width="1" height="1.8" fill="#ce9178" fill-opacity="0.70"/><rect x="16" y="48" width="1" height="1.8" fill="#ce9178" fill-opacity="0.60"/><rect x="17" y="48" width="1" height="1.8" fill="#ce9178" fill-opacity="0.70"/><rect x="18" y="48" width="2" height="1.8" fill="#ce9178" fill-opacity="0.60"/><rect x="20" y="48" width="3" height="1.8" fill="#ce9178" fill-opacity="0.70"/><rect x="23" y="48" width="1" height="1.8" fill="#ce9178" fill-opacity="0.60"/><rect x="24" y="48" width="2" height="1.8" fill="#ce9178" fill-opacity="0.70"/><rect x="26" y="48" width="1" height="1.8" fill="#ce9178" fill-opacity="0.40"/><rect x="5" y="50" width="1" height="1.8" fill="#ce9178" fill-opacity="0.40"/><rect x="6" y="50" width="2" height="1.8" fill="#d7ba7d" fill-opacity="0.70"/><rect x="8" y="50" width="1" height="1.8" fill="#ce9178" fill-opacity="0.70"/><rect x="10" y="50" width="1" height="1.8" fill="#ce9178" fill-opacity="0.40"/><rect x="12" y="50" width="1" height="1.8" fill="#ce9178" fill-opacity="0.85"/><rect x="13" y="50" width="1" height="1.8" fill="#ce9178" fill-opacity="0.60"/><rect x="14" y="50" width="1" height="1.8" fill="#ce9178" fill-opacity="0.70"/><rect x="15" y="50" width="1" height="1.8" fill="#ce9178" fill-opacity="0.60"/><rect x="16" y="50" width="1" height="1.8" fill="#ce9178" fill-opacity="0.70"/><rect x="17" y="50" width="1" height="1.8" fill="#ce9178" fill-opacity="0.60"/><rect x="18" y="50" width="2" height="1.8" fill="#ce9178" fill-opacity="0.70"/><rect x="20" y="50" width="1" height="1.8" fill="#ce9178" fill-opacity="0.40"/><rect x="5" y="52" width="1" height="1.8" fill="#ce9178" fill-opacity="0.40"/><rect x="6" y="52" width="2" height="1.8" fill="#d7ba7d" fill-opacity="0.70"/><rect x="8" y="52" width="1" height="1.8" fill="#ce9178" fill-opacity="0.70"/><rect x="10" y="52" width="1" height="1.8" fill="#ce9178" fill-opacity="0.40"/><rect x="12" y="52" width="1" height="1.8" fill="#ce9178" fill-opacity="0.85"/><rect x="13" y="52" width="5" height="1.8" fill="#ce9178" fill-opacity="0.70"/><rect x="18" y="52" width="1" height="1.8" fill="#ce9178" fill-opacity="0.40"/><rect x="5" y="54" width="1" height="1.8" fill="#ce9178" fill-opacity="0.40"/><rect x="6" y="54" width="2" height="1.8" fill="#d7ba7d" fill-opacity="0.70"/><rect x="8" y="54" width="1" height="1.8" fill="#ce9178" fill-opacity="0.70"/><rect x="10" y="54" width="1" height="1.8" fill="#ce9178" fill-opacity="0.40"/><rect x="12" y="54" width="1" height="1.8" fill="#ce9178" fill-opacity="0.85"/><rect x="13" y="54" width="5" height="1.8" fill="#ce9178" fill-opacity="0.70"/><rect x="19" y="54" width="1" height="1.8" fill="#ce9178" fill-opacity="0.85"/><rect x="20" y="54" width="3" height="1.8" fill="#ce9178" fill-opacity="0.70"/><rect x="23" y="54" width="1" height="1.8" fill="#ce9178" fill-opacity="0.40"/><rect x="5" y="56" width="1" height="1.8" fill="#ce9178" fill-opacity="0.40"/><rect x="6" y="56" width="2" height="1.8" fill="#d7ba7d" fill-opacity="0.70"/><rect x="8" y="56" width="1" height="1.8" fill="#ce9178" fill-opacity="0.70"/><rect x="10" y="56" width="1" height="1.8" fill="#ce9178" fill-opacity="0.40"/><rect x="12" y="56" width="1" height="1.8" fill="#ce9178" fill-opacity="0.85"/><rect x="13" y="56" width="1" height="1.8" fill="#ce9178" fill-opacity="0.70"/><rect x="14" y="56" width="1" height="1.8" fill="#ce9178" fill-opacity="0.60"/><rect x="15" y="56" width="1" height="1.8" fill="#ce9178" fill-opacity="0.70"/><rect x="16" y="56" width="1" height="1.8" fill="#ce9178" fill-opacity="0.40"/><rect x="5" y="58" width="1" height="1.8" fill="#ce9178" fill-opacity="0.40"/><rect x="6" y="58" width="2" height="1.8" fill="#d7ba7d" fill-opacity="0.70"/><rect x="9" y="58" width="2" height="1.8" fill="#d7ba7d" fill-opacity="0.70"/><rect x="11" y="58" width="1" height="1.8" fill="#ce9178" fill-opacity="0.85"/><rect x="12" y="58" width="3" height="1.8" fill="#ce9178" fill-opacity="0.70"/><rect x="16" y="58" width="1" height="1.8" fill="#ce9178" fill-opacity="0.70"/><rect x="18" y="58" width="3" height="1.8" fill="#ce9178" fill-opacity="0.70"/><rect x="21" y="58" width="1" height="1.8" fill="#ce9178" fill-opacity="0.60"/><rect x="22" y="58" width="2" height="1.8" fill="#ce9178" fill-opacity="0.70"/><rect x="24" y="58" width="1" height="1.8" fill="#ce9178" fill-opacity="0.40"/><rect x="26" y="58" width="1" height="1.8" fill="#ce9178" fill-opacity="0.40"/><rect x="27" y="58" width="1" height="1.8" fill="#d4d4d4" fill-opacity="0.40"/><rect x="5" y="60" width="1" height="1.8" fill="#9cdcfe" fill-opacity="0.70"/><rect x="6" y="60" width="1" height="1.8" fill="#9cdcfe" fill-opacity="0.60"/><rect x="7" y="60" width="1" height="1.8" fill="#9cdcfe" fill-opacity="0.70"/><rect x="9" y="60" width="2" height="1.8" fill="#dcdcaa" fill-opacity="0.70"/><rect x="12" y="60" width="3" height="1.8" fill="#9cdcfe" fill-opacity="0.70"/><rect x="15" y="60" width="1" height="1.8" fill="#d4d4d4" fill-opacity="0.40"/><rect x="3" y="64" width="2" height="1.8" fill="#c586c0" fill-opacity="0.70"/><rect x="5" y="64" width="1" height="1.8" fill="#c586c0" fill-opacity="0.60"/><rect x="6" y="64" width="3" height="1.8" fill="#c586c0" fill-opacity="0.70"/><rect x="10" y="64" width="1" height="1.8" fill="#179fff" fill-opacity="0.60"/><rect x="11" y="64" width="3" height="1.8" fill="#9cdcfe" fill-opacity="0.70"/><rect x="14" y="64" width="1" height="1.8" fill="#179fff" fill-opacity="0.60"/><rect x="5" y="66" width="1" height="1.8" fill="#179fff" fill-opacity="0.60"/><rect x="5" y="68" width="4" height="1.8" fill="#c586c0" fill-opacity="0.70"/><rect x="10" y="68" width="1" height="1.8" fill="#b5cea8" fill-opacity="0.60"/><rect x="11" y="68" width="1" height="1.8" fill="#d4d4d4" fill-opacity="0.40"/><rect x="4" y="70" width="3" height="1.8" fill="#dcdcaa" fill-opacity="0.70"/><rect x="7" y="70" width="1" height="1.8" fill="#ffd700" fill-opacity="0.60"/><rect x="8" y="70" width="1" height="1.8" fill="#ffd700" fill-opacity="0.60"/><rect x="9" y="70" width="1" height="1.8" fill="#d4d4d4" fill-opacity="0.40"/><rect x="4" y="72" width="5" height="1.8" fill="#c586c0" fill-opacity="0.70"/><rect x="9" y="72" width="1" height="1.8" fill="#d4d4d4" fill-opacity="0.40"/><rect x="5" y="74" width="4" height="1.8" fill="#c586c0" fill-opacity="0.70"/><rect x="10" y="74" width="1" height="1.8" fill="#b5cea8" fill-opacity="0.70"/><rect x="11" y="74" width="1" height="1.8" fill="#d4d4d4" fill-opacity="0.40"/><rect x="4" y="76" width="3" height="1.8" fill="#dcdcaa" fill-opacity="0.70"/><rect x="7" y="76" width="1" height="1.8" fill="#ffd700" fill-opacity="0.60"/><rect x="8" y="76" width="1" height="1.8" fill="#ffd700" fill-opacity="0.60"/><rect x="9" y="76" width="1" height="1.8" fill="#d4d4d4" fill-opacity="0.40"/><rect x="4" y="78" width="5" height="1.8" fill="#c586c0" fill-opacity="0.70"/><rect x="9" y="78" width="1" height="1.8" fill="#d4d4d4" fill-opacity="0.40"/><rect x="5" y="80" width="4" height="1.8" fill="#c586c0" fill-opacity="0.70"/><rect x="10" y="80" width="1" height="1.8" fill="#b5cea8" fill-opacity="0.70"/><rect x="11" y="80" width="1" height="1.8" fill="#d4d4d4" fill-opacity="0.40"/><rect x="4" y="82" width="2" height="1.8" fill="#dcdcaa" fill-opacity="0.70"/><rect x="6" y="82" width="1" height="1.8" fill="#dcdcaa" fill-opacity="0.60"/><rect x="7" y="82" width="1" height="1.8" fill="#dcdcaa" fill-opacity="0.70"/><rect x="8" y="82" width="1" height="1.8" fill="#dcdcaa" fill-opacity="0.60"/><rect x="9" y="82" width="1" height="1.8" fill="#ffd700" fill-opacity="0.60"/><rect x="10" y="82" width="1" height="1.8" fill="#ffd700" fill-opacity="0.60"/><rect x="11" y="82" width="1" height="1.8" fill="#d4d4d4" fill-opacity="0.40"/><rect x="4" y="84" width="5" height="1.8" fill="#c586c0" fill-opacity="0.70"/><rect x="9" y="84" width="1" height="1.8" fill="#d4d4d4" fill-opacity="0.40"/><rect x="5" y="86" width="4" height="1.8" fill="#c586c0" fill-opacity="0.70"/><rect x="10" y="86" width="1" height="1.8" fill="#b5cea8" fill-opacity="0.70"/><rect x="11" y="86" width="1" height="1.8" fill="#d4d4d4" fill-opacity="0.40"/><rect x="4" y="88" width="1" height="1.8" fill="#dcdcaa" fill-opacity="0.70"/><rect x="5" y="88" width="1" height="1.8" fill="#dcdcaa" fill-opacity="0.60"/><rect x="6" y="88" width="1" height="1.8" fill="#dcdcaa" fill-opacity="0.70"/><rect x="7" y="88" width="1" height="1.8" fill="#dcdcaa" fill-opacity="0.60"/><rect x="8" y="88" width="1" height="1.8" fill="#dcdcaa" fill-opacity="0.70"/><rect x="9" y="88" width="1" height="1.8" fill="#dcdcaa" fill-opacity="0.60"/><rect x="10" y="88" width="2" height="1.8" fill="#dcdcaa" fill-opacity="0.70"/><rect x="12" y="88" width="1" height="1.8" fill="#ffd700" fill-opacity="0.60"/><rect x="13" y="88" width="1" height="1.8" fill="#ffd700" fill-opacity="0.60"/><rect x="14" y="88" width="1" height="1.8" fill="#d4d4d4" fill-opacity="0.40"/><rect x="4" y="90" width="5" height="1.8" fill="#c586c0" fill-opacity="0.70"/><rect x="9" y="90" width="1" height="1.8" fill="#d4d4d4" fill-opacity="0.40"/><rect x="5" y="92" width="4" height="1.8" fill="#c586c0" fill-opacity="0.70"/><rect x="10" y="92" width="1" height="1.8" fill="#b5cea8" fill-opacity="0.70"/><rect x="11" y="92" width="1" height="1.8" fill="#d4d4d4" fill-opacity="0.40"/><rect x="4" y="94" width="3" height="1.8" fill="#dcdcaa" fill-opacity="0.70"/><rect x="7" y="94" width="1" height="1.8" fill="#ffd700" fill-opacity="0.60"/><rect x="8" y="94" width="1" height="1.8" fill="#ffd700" fill-opacity="0.60"/><rect x="9" y="94" width="1" height="1.8" fill="#d4d4d4" fill-opacity="0.40"/><rect x="4" y="96" width="5" height="1.8" fill="#c586c0" fill-opacity="0.70"/><rect x="9" y="96" width="1" height="1.8" fill="#d4d4d4" fill-opacity="0.40"/><rect x="5" y="98" width="4" height="1.8" fill="#c586c0" fill-opacity="0.70"/><rect x="10" y="98" width="1" height="1.8" fill="#b5cea8" fill-opacity="0.70"/><rect x="11" y="98" width="1" height="1.8" fill="#d4d4d4" fill-opacity="0.40"/><rect x="4" y="100" width="3" height="1.8" fill="#dcdcaa" fill-opacity="0.70"/><rect x="7" y="100" width="1" height="1.8" fill="#ffd700" fill-opacity="0.60"/><rect x="8" y="100" width="1" height="1.8" fill="#ffd700" fill-opacity="0.60"/><rect x="9" y="100" width="1" height="1.8" fill="#d4d4d4" fill-opacity="0.40"/><rect x="4" y="102" width="5" height="1.8" fill="#c586c0" fill-opacity="0.70"/><rect x="9" y="102" width="1" height="1.8" fill="#d4d4d4" fill-opacity="0.40"/><rect x="5" y="104" width="4" height="1.8" fill="#c586c0" fill-opacity="0.70"/><rect x="10" y="104" width="1" height="1.8" fill="#b5cea8" fill-opacity="0.70"/><rect x="11" y="104" width="1" height="1.8" fill="#d4d4d4" fill-opacity="0.40"/><rect x="4" y="106" width="2" height="1.8" fill="#dcdcaa" fill-opacity="0.70"/><rect x="6" y="106" width="1" height="1.8" fill="#dcdcaa" fill-opacity="0.60"/><rect x="7" y="106" width="1" height="1.8" fill="#dcdcaa" fill-opacity="0.70"/><rect x="8" y="106" width="1" height="1.8" fill="#ffd700" fill-opacity="0.60"/><rect x="9" y="106" width="1" height="1.8" fill="#b5cea8" fill-opacity="0.70"/><rect x="10" y="106" width="1" height="1.8" fill="#ffd700" fill-opacity="0.60"/><rect x="11" y="106" width="1" height="1.8" fill="#d4d4d4" fill-opacity="0.40"/><rect x="4" y="108" width="5" height="1.8" fill="#c586c0" fill-opacity="0.70"/><rect x="9" y="108" width="1" height="1.8" fill="#d4d4d4" fill-opacity="0.40"/><rect x="5" y="110" width="5" height="1.8" fill="#c586c0" fill-opacity="0.70"/><rect x="10" y="110" width="1" height="1.8" fill="#c586c0" fill-opacity="0.60"/><rect x="11" y="110" width="1" height="1.8" fill="#c586c0" fill-opacity="0.70"/><rect x="12" y="110" width="1" height="1.8" fill="#d4d4d4" fill-opacity="0.40"/><rect x="4" y="112" width="4" height="1.8" fill="#9cdcfe" fill-opacity="0.70"/><rect x="9" y="112" width="2" height="1.8" fill="#dcdcaa" fill-opacity="0.70"/><rect x="12" y="112" width="1" height="1.8" fill="#ce9178" fill-opacity="0.40"/><rect x="13" y="112" width="1" height="1.8" fill="#ce9178" fill-opacity="0.85"/><rect x="14" y="112" width="5" height="1.8" fill="#ce9178" fill-opacity="0.70"/><rect x="19" y="112" width="1" height="1.8" fill="#ce9178" fill-opacity="0.60"/><rect x="20" y="112" width="2" height="1.8" fill="#ce9178" fill-opacity="0.70"/><rect x="23" y="112" width="1" height="1.8" fill="#ce9178" fill-opacity="0.60"/><rect x="24" y="112" width="1" height="1.8" fill="#ce9178" fill-opacity="0.70"/><rect x="26" y="112" width="5" height="1.8" fill="#ce9178" fill-opacity="0.70"/><rect x="31" y="112" width="2" height="1.8" fill="#ce9178" fill-opacity="0.40"/><rect x="33" y="112" width="2" height="1.8" fill="#ce9178" fill-opacity="0.60"/><rect x="35" y="112" width="1" height="1.8" fill="#ce9178" fill-opacity="0.40"/><rect x="36" y="112" width="1" height="1.8" fill="#d4d4d4" fill-opacity="0.40"/><rect x="4" y="114" width="5" height="1.8" fill="#c586c0" fill-opacity="0.70"/><rect x="9" y="114" width="1" height="1.8" fill="#d4d4d4" fill-opacity="0.40"/><rect x="5" y="116" width="1" height="1.8" fill="#179fff" fill-opacity="0.60"/><rect x="4" y="118" width="4" height="1.8" fill="#9cdcfe" fill-opacity="0.70"/><rect x="9" y="118" width="2" height="1.8" fill="#dcdcaa" fill-opacity="0.70"/><rect x="11" y="118" width="1" height="1.8" fill="#ce9178" fill-opacity="0.40"/><rect x="13" y="118" width="2" height="1.8" fill="#d7ba7d" fill-opacity="0.70"/><rect x="15" y="118" width="31" height="1.8" fill="#ce9178" fill-opacity="0.40"/><rect x="46" y="118" width="2" height="1.8" fill="#d7ba7d" fill-opacity="0.70"/><rect x="48" y="118" width="1" height="1.8" fill="#ce9178" fill-opacity="0.40"/><rect x="49" y="118" width="1" height="1.8" fill="#d4d4d4" fill-opacity="0.40"/><rect x="4" y="120" width="1" height="1.8" fill="#da70d6" fill-opacity="0.60"/><rect x="6" y="120" width="2" height="1.8" fill="#c586c0" fill-opacity="0.70"/><rect x="8" y="120" width="2" height="1.8" fill="#c586c0" fill-opacity="0.60"/><rect x="10" y="120" width="1" height="1.8" fill="#c586c0" fill-opacity="0.70"/><rect x="12" y="120" width="1" height="1.8" fill="#da70d6" fill-opacity="0.60"/><rect x="13" y="120" width="3" height="1.8" fill="#9cdcfe" fill-opacity="0.70"/><rect x="17" y="120" width="1" height="1.8" fill="#d4d4d4" fill-opacity="0.60"/><rect x="18" y="120" width="1" height="1.8" fill="#d4d4d4" fill-opacity="0.40"/><rect x="20" y="120" width="1" height="1.8" fill="#b5cea8" fill-opacity="0.70"/><rect x="21" y="120" width="1" height="1.8" fill="#da70d6" fill-opacity="0.60"/><rect x="22" y="120" width="1" height="1.8" fill="#d4d4d4" fill-opacity="0.40"/><rect x="4" y="122" width="5" height="1.8" fill="#dcdcaa" fill-opacity="0.70"/><rect x="9" y="122" width="1" height="1.8" fill="#da70d6" fill-opacity="0.60"/><rect x="10" y="122" width="1" height="1.8" fill="#da70d6" fill-opacity="0.60"/><rect x="11" y="122" width="1" height="1.8" fill="#d4d4d4" fill-opacity="0.40"/><rect x="0" y="124" width="1" height="1.8" fill="#ffd700" fill-opacity="0.60"/><rect x="0" y="128" width="2" height="1.8" fill="#569cd6" fill-opacity="0.70"/><rect x="2" y="128" width="1" height="1.8" fill="#569cd6" fill-opacity="0.60"/><rect x="3" y="128" width="1" height="1.8" fill="#569cd6" fill-opacity="0.70"/><rect x="5" y="128" width="3" height="1.8" fill="#dcdcaa" fill-opacity="0.70"/><rect x="8" y="128" width="1" height="1.8" fill="#ffd700" fill-opacity="0.60"/><rect x="9" y="128" width="1" height="1.8" fill="#ffd700" fill-opacity="0.60"/><rect x="0" y="130" width="1" height="1.8" fill="#ffd700" fill-opacity="0.60"/><rect x="0" y="132" width="1" height="1.8" fill="#569cd6" fill-opacity="0.60"/><rect x="1" y="132" width="2" height="1.8" fill="#569cd6" fill-opacity="0.70"/><rect x="4" y="132" width="1" height="1.8" fill="#9cdcfe" fill-opacity="0.70"/><rect x="5" y="132" width="1" height="1.8" fill="#d4d4d4" fill-opacity="0.40"/><rect x="7" y="132" width="3" height="1.8" fill="#9cdcfe" fill-opacity="0.70"/><rect x="11" y="132" width="1" height="1.8" fill="#d4d4d4" fill-opacity="0.40"/><rect x="13" y="132" width="1" height="1.8" fill="#b5cea8" fill-opacity="0.70"/><rect x="14" y="132" width="1" height="1.8" fill="#d4d4d4" fill-opacity="0.40"/><rect x="16" y="132" width="1" height="1.8" fill="#9cdcfe" fill-opacity="0.60"/><rect x="17" y="132" width="1" height="1.8" fill="#d4d4d4" fill-opacity="0.40"/><rect x="19" y="132" width="6" height="1.8" fill="#9cdcfe" fill-opacity="0.70"/><rect x="25" y="132" width="1" height="1.8" fill="#d4d4d4" fill-opacity="0.40"/><rect x="0" y="134" width="4" height="1.8" fill="#9cdcfe" fill-opacity="0.70"/><rect x="5" y="134" width="2" height="1.8" fill="#dcdcaa" fill-opacity="0.70"/><rect x="7" y="134" width="1" height="1.8" fill="#ce9178" fill-opacity="0.40"/><rect x="8" y="134" width="1" height="1.8" fill="#ce9178" fill-opacity="0.85"/><rect x="9" y="134" width="2" height="1.8" fill="#ce9178" fill-opacity="0.70"/><rect x="12" y="134" width="4" height="1.8" fill="#ce9178" fill-opacity="0.70"/><rect x="17" y="134" width="7" height="1.8" fill="#ce9178" fill-opacity="0.70"/><rect x="25" y="134" width="3" height="1.8" fill="#ce9178" fill-opacity="0.70"/><rect x="29" y="134" width="4" height="1.8" fill="#ce9178" fill-opacity="0.70"/><rect x="34" y="134" width="2" height="1.8" fill="#ce9178" fill-opacity="0.70"/><rect x="37" y="134" width="3" height="1.8" fill="#ce9178" fill-opacity="0.70"/><rect x="40" y="134" width="1" height="1.8" fill="#ce9178" fill-opacity="0.40"/><rect x="42" y="134" width="1" height="1.8" fill="#ce9178" fill-opacity="0.40"/><rect x="43" y="134" width="1" height="1.8" fill="#d4d4d4" fill-opacity="0.40"/><rect x="0" y="136" width="1" height="1.8" fill="#9cdcfe" fill-opacity="0.70"/><rect x="1" y="136" width="1" height="1.8" fill="#9cdcfe" fill-opacity="0.60"/><rect x="2" y="136" width="1" height="1.8" fill="#9cdcfe" fill-opacity="0.70"/><rect x="4" y="136" width="2" height="1.8" fill="#dcdcaa" fill-opacity="0.70"/><rect x="7" y="136" width="1" height="1.8" fill="#9cdcfe" fill-opacity="0.70"/><rect x="8" y="136" width="1" height="1.8" fill="#d4d4d4" fill-opacity="0.40"/><rect x="0" y="138" width="4" height="1.8" fill="#9cdcfe" fill-opacity="0.70"/><rect x="5" y="138" width="2" height="1.8" fill="#dcdcaa" fill-opacity="0.70"/><rect x="8" y="138" width="1" height="1.8" fill="#ce9178" fill-opacity="0.40"/><rect x="9" y="138" width="1" height="1.8" fill="#ce9178" fill-opacity="0.85"/><rect x="10" y="138" width="1" height="1.8" fill="#ce9178" fill-opacity="0.60"/><rect x="11" y="138" width="4" height="1.8" fill="#ce9178" fill-opacity="0.70"/><rect x="16" y="138" width="5" height="1.8" fill="#ce9178" fill-opacity="0.70"/><rect x="22" y="138" width="3" height="1.8" fill="#ce9178" fill-opacity="0.70"/><rect x="26" y="138" width="6" height="1.8" fill="#ce9178" fill-opacity="0.70"/><rect x="33" y="138" width="3" height="1.8" fill="#ce9178" fill-opacity="0.70"/><rect x="37" y="138" width="2" height="1.8" fill="#ce9178" fill-opacity="0.70"/><rect x="40" y="138" width="3" height="1.8" fill="#ce9178" fill-opacity="0.70"/><rect x="43" y="138" width="1" height="1.8" fill="#ce9178" fill-opacity="0.40"/><rect x="45" y="138" width="2" height="1.8" fill="#d7ba7d" fill-opacity="0.70"/><rect x="47" y="138" width="1" height="1.8" fill="#ce9178" fill-opacity="0.40"/><rect x="48" y="138" width="1" height="1.8" fill="#d4d4d4" fill-opacity="0.40"/><rect x="0" y="140" width="3" height="1.8" fill="#c586c0" fill-opacity="0.70"/><rect x="4" y="140" width="1" height="1.8" fill="#da70d6" fill-opacity="0.60"/><rect x="5" y="140" width="1" height="1.8" fill="#9cdcfe" fill-opacity="0.60"/><rect x="7" y="140" width="1" height="1.8" fill="#d4d4d4" fill-opacity="0.40"/><rect x="9" y="140" width="1" height="1.8" fill="#b5cea8" fill-opacity="0.60"/><rect x="10" y="140" width="1" height="1.8" fill="#d4d4d4" fill-opacity="0.40"/><rect x="12" y="140" width="1" height="1.8" fill="#9cdcfe" fill-opacity="0.60"/><rect x="14" y="140" width="1" height="1.8" fill="#d4d4d4" fill-opacity="0.70"/><rect x="15" y="140" width="1" height="1.8" fill="#d4d4d4" fill-opacity="0.40"/><rect x="17" y="140" width="1" height="1.8" fill="#9cdcfe" fill-opacity="0.70"/><rect x="18" y="140" width="1" height="1.8" fill="#d4d4d4" fill-opacity="0.40"/><rect x="20" y="140" width="1" height="1.8" fill="#9cdcfe" fill-opacity="0.60"/><rect x="21" y="140" width="1" height="1.8" fill="#d4d4d4" fill-opacity="0.70"/><rect x="22" y="140" width="1" height="1.8" fill="#d4d4d4" fill-opacity="0.70"/><rect x="23" y="140" width="1" height="1.8" fill="#da70d6" fill-opacity="0.60"/><rect x="0" y="142" width="1" height="1.8" fill="#da70d6" fill-opacity="0.60"/><rect x="0" y="144" width="1" height="1.8" fill="#9cdcfe" fill-opacity="0.70"/><rect x="1" y="144" width="1" height="1.8" fill="#9cdcfe" fill-opacity="0.60"/><rect x="2" y="144" width="1" height="1.8" fill="#9cdcfe" fill-opacity="0.70"/><rect x="4" y="144" width="2" height="1.8" fill="#dcdcaa" fill-opacity="0.70"/><rect x="7" y="144" width="6" height="1.8" fill="#9cdcfe" fill-opacity="0.70"/><rect x="13" y="144" width="1" height="1.8" fill="#d4d4d4" fill-opacity="0.40"/><rect x="0" y="146" width="3" height="1.8" fill="#9cdcfe" fill-opacity="0.70"/><rect x="4" y="146" width="1" height="1.8" fill="#d4d4d4" fill-opacity="0.40"/><rect x="6" y="146" width="3" height="1.8" fill="#9cdcfe" fill-opacity="0.70"/><rect x="10" y="146" width="1" height="1.8" fill="#d4d4d4" fill-opacity="0.70"/><rect x="12" y="146" width="6" height="1.8" fill="#9cdcfe" fill-opacity="0.70"/><rect x="18" y="146" width="1" height="1.8" fill="#d4d4d4" fill-opacity="0.40"/><rect x="0" y="148" width="1" height="1.8" fill="#da70d6" fill-opacity="0.60"/><rect x="0" y="150" width="4" height="1.8" fill="#9cdcfe" fill-opacity="0.70"/><rect x="5" y="150" width="2" height="1.8" fill="#dcdcaa" fill-opacity="0.70"/><rect x="8" y="150" width="1" height="1.8" fill="#ce9178" fill-opacity="0.40"/><rect x="9" y="150" width="2" height="1.8" fill="#d7ba7d" fill-opacity="0.70"/><rect x="12" y="150" width="1" height="1.8" fill="#ce9178" fill-opacity="0.85"/><rect x="13" y="150" width="2" height="1.8" fill="#ce9178" fill-opacity="0.70"/><rect x="16" y="150" width="2" height="1.8" fill="#ce9178" fill-opacity="0.70"/><rect x="19" y="150" width="3" height="1.8" fill="#ce9178" fill-opacity="0.70"/><rect x="23" y="150" width="7" height="1.8" fill="#ce9178" fill-opacity="0.70"/><rect x="31" y="150" width="1" height="1.8" fill="#ce9178" fill-opacity="0.40"/><rect x="33" y="150" width="1" height="1.8" fill="#ce9178" fill-opacity="0.40"/><rect x="34" y="150" width="2" height="1.8" fill="#dcdcaa" fill-opacity="0.70"/><rect x="37" y="150" width="3" height="1.8" fill="#9cdcfe" fill-opacity="0.70"/><rect x="40" y="150" width="1" height="1.8" fill="#d4d4d4" fill-opacity="0.40"/><rect x="0" y="152" width="1" height="1.8" fill="#ffd700" fill-opacity="0.60"/><rect x="0" y="154" width="2" height="1.8" fill="#569cd6" fill-opacity="0.70"/><rect x="2" y="154" width="1" height="1.8" fill="#569cd6" fill-opacity="0.60"/><rect x="3" y="154" width="1" height="1.8" fill="#569cd6" fill-opacity="0.70"/><rect x="5" y="154" width="3" height="1.8" fill="#dcdcaa" fill-opacity="0.70"/><rect x="8" y="154" width="1" height="1.8" fill="#ffd700" fill-opacity="0.60"/><rect x="9" y="154" width="1" height="1.8" fill="#ffd700" fill-opacity="0.60"/><rect x="0" y="156" width="1" height="1.8" fill="#ffd700" fill-opacity="0.60"/><rect x="0" y="158" width="1" height="1.8" fill="#569cd6" fill-opacity="0.60"/><rect x="1" y="158" width="2" height="1.8" fill="#569cd6" fill-opacity="0.70"/><rect x="4" y="158" width="3" height="1.8" fill="#9cdcfe" fill-opacity="0.70"/><rect x="7" y="158" width="1" height="1.8" fill="#9cdcfe" fill-opacity="0.60"/><rect x="8" y="158" width="1" height="1.8" fill="#d4d4d4" fill-opacity="0.40"/><rect x="10" y="158" width="4" height="1.8" fill="#9cdcfe" fill-opacity="0.70"/><rect x="14" y="158" width="1" height="1.8" fill="#d4d4d4" fill-opacity="0.40"/><rect x="16" y="158" width="1" height="1.8" fill="#9cdcfe" fill-opacity="0.70"/><rect x="17" y="158" width="1" height="1.8" fill="#d4d4d4" fill-opacity="0.40"/><rect x="0" y="160" width="4" height="1.8" fill="#9cdcfe" fill-opacity="0.70"/><rect x="5" y="160" width="2" height="1.8" fill="#dcdcaa" fill-opacity="0.70"/><rect x="7" y="160" width="1" height="1.8" fill="#ce9178" fill-opacity="0.40"/><rect x="9" y="160" width="2" height="1.8" fill="#d7ba7d" fill-opacity="0.70"/><rect x="12" y="160" width="1" height="1.8" fill="#ce9178" fill-opacity="0.85"/><rect x="13" y="160" width="4" height="1.8" fill="#ce9178" fill-opacity="0.70"/><rect x="18" y="160" width="3" height="1.8" fill="#ce9178" fill-opacity="0.70"/><rect x="22" y="160" width="1" height="1.8" fill="#ce9178" fill-opacity="0.85"/><rect x="23" y="160" width="1" height="1.8" fill="#ce9178" fill-opacity="0.60"/><rect x="24" y="160" width="3" height="1.8" fill="#ce9178" fill-opacity="0.70"/><rect x="28" y="160" width="6" height="1.8" fill="#ce9178" fill-opacity="0.70"/><rect x="35" y="160" width="1" height="1.8" fill="#ce9178" fill-opacity="0.40"/><rect x="37" y="160" width="1" height="1.8" fill="#ce9178" fill-opacity="0.40"/><rect x="38" y="160" width="1" height="1.8" fill="#d4d4d4" fill-opacity="0.40"/><rect x="0" y="162" width="1" height="1.8" fill="#9cdcfe" fill-opacity="0.70"/><rect x="1" y="162" width="1" height="1.8" fill="#9cdcfe" fill-opacity="0.60"/><rect x="2" y="162" width="1" height="1.8" fill="#9cdcfe" fill-opacity="0.70"/><rect x="4" y="162" width="2" height="1.8" fill="#dcdcaa" fill-opacity="0.70"/><rect x="7" y="162" width="3" height="1.8" fill="#9cdcfe" fill-opacity="0.70"/><rect x="10" y="162" width="1" height="1.8" fill="#9cdcfe" fill-opacity="0.60"/><rect x="11" y="162" width="1" height="1.8" fill="#d4d4d4" fill-opacity="0.40"/><rect x="0" y="164" width="4" height="1.8" fill="#9cdcfe" fill-opacity="0.70"/><rect x="5" y="164" width="2" height="1.8" fill="#dcdcaa" fill-opacity="0.70"/><rect x="8" y="164" width="1" height="1.8" fill="#ce9178" fill-opacity="0.40"/><rect x="9" y="164" width="2" height="1.8" fill="#d7ba7d" fill-opacity="0.70"/><rect x="12" y="164" width="1" height="1.8" fill="#ce9178" fill-opacity="0.85"/><rect x="13" y="164" width="4" height="1.8" fill="#ce9178" fill-opacity="0.70"/><rect x="18" y="164" width="3" height="1.8" fill="#ce9178" fill-opacity="0.70"/><rect x="22" y="164" width="1" height="1.8" fill="#ce9178" fill-opacity="0.85"/><rect x="23" y="164" width="5" height="1.8" fill="#ce9178" fill-opacity="0.70"/><rect x="29" y="164" width="6" height="1.8" fill="#ce9178" fill-opacity="0.70"/><rect x="36" y="164" width="1" height="1.8" fill="#ce9178" fill-opacity="0.40"/><rect x="38" y="164" width="1" height="1.8" fill="#ce9178" fill-opacity="0.40"/><rect x="39" y="164" width="1" height="1.8" fill="#d4d4d4" fill-opacity="0.40"/><rect x="0" y="166" width="1" height="1.8" fill="#9cdcfe" fill-opacity="0.70"/><rect x="1" y="166" width="1" height="1.8" fill="#9cdcfe" fill-opacity="0.60"/><rect x="2" y="166" width="1" height="1.8" fill="#9cdcfe" fill-opacity="0.70"/><rect x="4" y="166" width="2" height="1.8" fill="#dcdcaa" fill-opacity="0.70"/><rect x="7" y="166" width="4" height="1.8" fill="#9cdcfe" fill-opacity="0.70"/><rect x="11" y="166" width="1" height="1.8" fill="#d4d4d4" fill-opacity="0.40"/><rect x="0" y="168" width="1" height="1.8" fill="#9cdcfe" fill-opacity="0.70"/><rect x="2" y="168" width="1" height="1.8" fill="#d4d4d4" fill-opacity="0.40"/><rect x="4" y="168" width="3" height="1.8" fill="#9cdcfe" fill-opacity="0.70"/><rect x="7" y="168" width="1" height="1.8" fill="#9cdcfe" fill-opacity="0.60"/><rect x="9" y="168" width="1" height="1.8" fill="#d4d4d4" fill-opacity="0.40"/><rect x="11" y="168" width="4" height="1.8" fill="#9cdcfe" fill-opacity="0.70"/><rect x="15" y="168" width="1" height="1.8" fill="#d4d4d4" fill-opacity="0.40"/><rect x="0" y="170" width="4" height="1.8" fill="#9cdcfe" fill-opacity="0.70"/><rect x="5" y="170" width="2" height="1.8" fill="#dcdcaa" fill-opacity="0.70"/><rect x="7" y="170" width="1" height="1.8" fill="#ce9178" fill-opacity="0.40"/><rect x="8" y="170" width="2" height="1.8" fill="#d7ba7d" fill-opacity="0.70"/><rect x="11" y="170" width="1" height="1.8" fill="#ce9178" fill-opacity="0.85"/><rect x="12" y="170" width="7" height="1.8" fill="#ce9178" fill-opacity="0.70"/><rect x="19" y="170" width="1" height="1.8" fill="#ce9178" fill-opacity="0.60"/><rect x="20" y="170" width="2" height="1.8" fill="#ce9178" fill-opacity="0.70"/><rect x="23" y="170" width="2" height="1.8" fill="#ce9178" fill-opacity="0.70"/><rect x="26" y="170" width="3" height="1.8" fill="#ce9178" fill-opacity="0.70"/><rect x="30" y="170" width="6" height="1.8" fill="#ce9178" fill-opacity="0.70"/><rect x="37" y="170" width="1" height="1.8" fill="#ce9178" fill-opacity="0.40"/><rect x="39" y="170" width="1" height="1.8" fill="#ce9178" fill-opacity="0.40"/><rect x="41" y="170" width="2" height="1.8" fill="#dcdcaa" fill-opacity="0.70"/><rect x="44" y="170" width="1" height="1.8" fill="#9cdcfe" fill-opacity="0.70"/><rect x="45" y="170" width="1" height="1.8" fill="#d4d4d4" fill-opacity="0.40"/><rect x="0" y="172" width="1" height="1.8" fill="#ffd700" fill-opacity="0.60"/><rect x="0" y="174" width="2" height="1.8" fill="#569cd6" fill-opacity="0.70"/><rect x="2" y="174" width="1" height="1.8" fill="#569cd6" fill-opacity="0.60"/><rect x="3" y="174" width="1" height="1.8" fill="#569cd6" fill-opacity="0.70"/><rect x="5" y="174" width="2" height="1.8" fill="#dcdcaa" fill-opacity="0.70"/><rect x="7" y="174" width="1" height="1.8" fill="#dcdcaa" fill-opacity="0.60"/><rect x="8" y="174" width="1" height="1.8" fill="#dcdcaa" fill-opacity="0.70"/><rect x="9" y="174" width="1" height="1.8" fill="#dcdcaa" fill-opacity="0.60"/><rect x="10" y="174" width="1" height="1.8" fill="#ffd700" fill-opacity="0.60"/><rect x="11" y="174" width="1" height="1.8" fill="#ffd700" fill-opacity="0.60"/><rect x="0" y="176" width="1" height="1.8" fill="#ffd700" fill-opacity="0.60"/><rect x="0" y="178" width="1" height="1.8" fill="#569cd6" fill-opacity="0.60"/><rect x="1" y="178" width="2" height="1.8" fill="#569cd6" fill-opacity="0.70"/><rect x="4" y="178" width="3" height="1.8" fill="#9cdcfe" fill-opacity="0.70"/><rect x="7" y="178" width="1" height="1.8" fill="#9cdcfe" fill-opacity="0.60"/><rect x="8" y="178" width="1" height="1.8" fill="#d4d4d4" fill-opacity="0.40"/><rect x="10" y="178" width="4" height="1.8" fill="#9cdcfe" fill-opacity="0.70"/><rect x="14" y="178" width="1" height="1.8" fill="#d4d4d4" fill-opacity="0.40"/><rect x="16" y="178" width="2" height="1.8" fill="#9cdcfe" fill-opacity="0.70"/><rect x="18" y="178" width="1" height="1.8" fill="#9cdcfe" fill-opacity="0.60"/><rect x="19" y="178" width="1" height="1.8" fill="#d4d4d4" fill-opacity="0.40"/><rect x="0" y="180" width="4" height="1.8" fill="#9cdcfe" fill-opacity="0.70"/><rect x="5" y="180" width="2" height="1.8" fill="#dcdcaa" fill-opacity="0.70"/><rect x="7" y="180" width="1" height="1.8" fill="#ce9178" fill-opacity="0.40"/><rect x="9" y="180" width="2" height="1.8" fill="#d7ba7d" fill-opacity="0.70"/><rect x="12" y="180" width="1" height="1.8" fill="#ce9178" fill-opacity="0.85"/><rect x="13" y="180" width="4" height="1.8" fill="#ce9178" fill-opacity="0.70"/><rect x="18" y="180" width="3" height="1.8" fill="#ce9178" fill-opacity="0.70"/><rect x="22" y="180" width="1" height="1.8" fill="#ce9178" fill-opacity="0.85"/><rect x="23" y="180" width="1" height="1.8" fill="#ce9178" fill-opacity="0.60"/><rect x="24" y="180" width="3" height="1.8" fill="#ce9178" fill-opacity="0.70"/><rect x="28" y="180" width="6" height="1.8" fill="#ce9178" fill-opacity="0.70"/><rect x="35" y="180" width="1" height="1.8" fill="#ce9178" fill-opacity="0.40"/><rect x="37" y="180" width="1" height="1.8" fill="#ce9178" fill-opacity="0.40"/><rect x="38" y="180" width="1" height="1.8" fill="#d4d4d4" fill-opacity="0.40"/><rect x="0" y="182" width="1" height="1.8" fill="#9cdcfe" fill-opacity="0.70"/><rect x="1" y="182" width="1" height="1.8" fill="#9cdcfe" fill-opacity="0.60"/><rect x="2" y="182" width="1" height="1.8" fill="#9cdcfe" fill-opacity="0.70"/><rect x="4" y="182" width="2" height="1.8" fill="#dcdcaa" fill-opacity="0.70"/><rect x="7" y="182" width="3" height="1.8" fill="#9cdcfe" fill-opacity="0.70"/><rect x="10" y="182" width="1" height="1.8" fill="#9cdcfe" fill-opacity="0.60"/><rect x="11" y="182" width="1" height="1.8" fill="#d4d4d4" fill-opacity="0.40"/><rect x="0" y="184" width="4" height="1.8" fill="#9cdcfe" fill-opacity="0.70"/><rect x="5" y="184" width="2" height="1.8" fill="#dcdcaa" fill-opacity="0.70"/><rect x="8" y="184" width="1" height="1.8" fill="#ce9178" fill-opacity="0.40"/><rect x="9" y="184" width="2" height="1.8" fill="#d7ba7d" fill-opacity="0.70"/><rect x="12" y="184" width="1" height="1.8" fill="#ce9178" fill-opacity="0.85"/><rect x="13" y="184" width="4" height="1.8" fill="#ce9178" fill-opacity="0.70"/><rect x="18" y="184" width="3" height="1.8" fill="#ce9178" fill-opacity="0.70"/><rect x="22" y="184" width="1" height="1.8" fill="#ce9178" fill-opacity="0.85"/><rect x="23" y="184" width="5" height="1.8" fill="#ce9178" fill-opacity="0.70"/><rect x="29" y="184" width="6" height="1.8" fill="#ce9178" fill-opacity="0.70"/><rect x="36" y="184" width="1" height="1.8" fill="#ce9178" fill-opacity="0.40"/><rect x="38" y="184" width="1" height="1.8" fill="#ce9178" fill-opacity="0.40"/><rect x="39" y="184" width="1" height="1.8" fill="#d4d4d4" fill-opacity="0.40"/><rect x="0" y="186" width="1" height="1.8" fill="#9cdcfe" fill-opacity="0.70"/><rect x="1" y="186" width="1" height="1.8" fill="#9cdcfe" fill-opacity="0.60"/><rect x="2" y="186" width="1" height="1.8" fill="#9cdcfe" fill-opacity="0.70"/><rect x="4" y="186" width="2" height="1.8" fill="#dcdcaa" fill-opacity="0.70"/><rect x="7" y="186" width="4" height="1.8" fill="#9cdcfe" fill-opacity="0.70"/><rect x="11" y="186" width="1" height="1.8" fill="#d4d4d4" fill-opacity="0.40"/><rect x="0" y="188" width="2" height="1.8" fill="#9cdcfe" fill-opacity="0.70"/><rect x="2" y="188" width="1" height="1.8" fill="#9cdcfe" fill-opacity="0.60"/><rect x="4" y="188" width="1" height="1.8" fill="#d4d4d4" fill-opacity="0.40"/><rect x="6" y="188" width="3" height="1.8" fill="#9cdcfe" fill-opacity="0.70"/><rect x="9" y="188" width="1" height="1.8" fill="#9cdcfe" fill-opacity="0.60"/><rect x="11" y="188" width="1" height="1.8" fill="#d4d4d4" fill-opacity="0.70"/><rect x="13" y="188" width="4" height="1.8" fill="#9cdcfe" fill-opacity="0.70"/><rect x="17" y="188" width="1" height="1.8" fill="#d4d4d4" fill-opacity="0.40"/><rect x="0" y="190" width="4" height="1.8" fill="#9cdcfe" fill-opacity="0.70"/><rect x="5" y="190" width="2" height="1.8" fill="#dcdcaa" fill-opacity="0.70"/><rect x="7" y="190" width="1" height="1.8" fill="#ce9178" fill-opacity="0.40"/><rect x="8" y="190" width="2" height="1.8" fill="#d7ba7d" fill-opacity="0.70"/><rect x="11" y="190" width="1" height="1.8" fill="#ce9178" fill-opacity="0.85"/><rect x="12" y="190" width="1" height="1.8" fill="#ce9178" fill-opacity="0.70"/><rect x="13" y="190" width="1" height="1.8" fill="#ce9178" fill-opacity="0.60"/><rect x="14" y="190" width="1" height="1.8" fill="#ce9178" fill-opacity="0.70"/><rect x="15" y="190" width="1" height="1.8" fill="#ce9178" fill-opacity="0.60"/><rect x="16" y="190" width="1" height="1.8" fill="#ce9178" fill-opacity="0.70"/><rect x="17" y="190" width="2" height="1.8" fill="#ce9178" fill-opacity="0.60"/><rect x="19" y="190" width="3" height="1.8" fill="#ce9178" fill-opacity="0.70"/><rect x="22" y="190" width="1" height="1.8" fill="#ce9178" fill-opacity="0.60"/><rect x="23" y="190" width="2" height="1.8" fill="#ce9178" fill-opacity="0.70"/><rect x="26" y="190" width="2" height="1.8" fill="#ce9178" fill-opacity="0.70"/><rect x="29" y="190" width="3" height="1.8" fill="#ce9178" fill-opacity="0.70"/><rect x="33" y="190" width="7" height="1.8" fill="#ce9178" fill-opacity="0.70"/><rect x="41" y="190" width="1" height="1.8" fill="#ce9178" fill-opacity="0.40"/><rect x="43" y="190" width="1" height="1.8" fill="#ce9178" fill-opacity="0.40"/><rect x="45" y="190" width="2" height="1.8" fill="#dcdcaa" fill-opacity="0.70"/><rect x="48" y="190" width="2" height="1.8" fill="#9cdcfe" fill-opacity="0.70"/><rect x="50" y="190" width="1" height="1.8" fill="#9cdcfe" fill-opacity="0.60"/><rect x="51" y="190" width="1" height="1.8" fill="#d4d4d4" fill-opacity="0.40"/><rect x="0" y="192" width="1" height="1.8" fill="#ffd700" fill-opacity="0.60"/><rect x="0" y="194" width="2" height="1.8" fill="#569cd6" fill-opacity="0.70"/><rect x="2" y="194" width="1" height="1.8" fill="#569cd6" fill-opacity="0.60"/><rect x="3" y="194" width="1" height="1.8" fill="#569cd6" fill-opacity="0.70"/><rect x="5" y="194" width="1" height="1.8" fill="#dcdcaa" fill-opacity="0.70"/><rect x="6" y="194" width="1" height="1.8" fill="#dcdcaa" fill-opacity="0.60"/><rect x="7" y="194" width="1" height="1.8" fill="#dcdcaa" fill-opacity="0.70"/><rect x="8" y="194" width="1" height="1.8" fill="#dcdcaa" fill-opacity="0.60"/><rect x="9" y="194" width="1" height="1.8" fill="#dcdcaa" fill-opacity="0.70"/><rect x="10" y="194" width="1" height="1.8" fill="#dcdcaa" fill-opacity="0.60"/><rect x="11" y="194" width="2" height="1.8" fill="#dcdcaa" fill-opacity="0.70"/><rect x="13" y="194" width="1" height="1.8" fill="#ffd700" fill-opacity="0.60"/><rect x="14" y="194" width="1" height="1.8" fill="#ffd700" fill-opacity="0.60"/><rect x="0" y="196" width="1" height="1.8" fill="#ffd700" fill-opacity="0.60"/><rect x="0" y="198" width="1" height="1.8" fill="#569cd6" fill-opacity="0.60"/><rect x="1" y="198" width="2" height="1.8" fill="#569cd6" fill-opacity="0.70"/><rect x="4" y="198" width="3" height="1.8" fill="#9cdcfe" fill-opacity="0.70"/><rect x="7" y="198" width="1" height="1.8" fill="#9cdcfe" fill-opacity="0.60"/><rect x="8" y="198" width="1" height="1.8" fill="#d4d4d4" fill-opacity="0.40"/><rect x="10" y="198" width="4" height="1.8" fill="#9cdcfe" fill-opacity="0.70"/><rect x="14" y="198" width="1" height="1.8" fill="#d4d4d4" fill-opacity="0.40"/><rect x="16" y="198" width="1" height="1.8" fill="#9cdcfe" fill-opacity="0.70"/><rect x="17" y="198" width="1" height="1.8" fill="#9cdcfe" fill-opacity="0.60"/><rect x="18" y="198" width="1" height="1.8" fill="#9cdcfe" fill-opacity="0.70"/><rect x="20" y="198" width="1" height="1.8" fill="#d4d4d4" fill-opacity="0.40"/><rect x="22" y="198" width="1" height="1.8" fill="#b5cea8" fill-opacity="0.70"/><rect x="23" y="198" width="1" height="1.8" fill="#d4d4d4" fill-opacity="0.40"/><rect x="0" y="200" width="4" height="1.8" fill="#9cdcfe" fill-opacity="0.70"/><rect x="5" y="200" width="2" height="1.8" fill="#dcdcaa" fill-opacity="0.70"/><rect x="7" y="200" width="1" height="1.8" fill="#ce9178" fill-opacity="0.40"/><rect x="9" y="200" width="2" height="1.8" fill="#d7ba7d" fill-opacity="0.70"/><rect x="12" y="200" width="1" height="1.8" fill="#ce9178" fill-opacity="0.85"/><rect x="13" y="200" width="4" height="1.8" fill="#ce9178" fill-opacity="0.70"/><rect x="18" y="200" width="3" height="1.8" fill="#ce9178" fill-opacity="0.70"/><rect x="22" y="200" width="1" height="1.8" fill="#ce9178" fill-opacity="0.85"/><rect x="23" y="200" width="1" height="1.8" fill="#ce9178" fill-opacity="0.60"/><rect x="24" y="200" width="3" height="1.8" fill="#ce9178" fill-opacity="0.70"/><rect x="28" y="200" width="6" height="1.8" fill="#ce9178" fill-opacity="0.70"/><rect x="35" y="200" width="1" height="1.8" fill="#ce9178" fill-opacity="0.40"/><rect x="37" y="200" width="1" height="1.8" fill="#ce9178" fill-opacity="0.40"/><rect x="38" y="200" width="1" height="1.8" fill="#d4d4d4" fill-opacity="0.40"/><rect x="0" y="202" width="1" height="1.8" fill="#9cdcfe" fill-opacity="0.70"/><rect x="1" y="202" width="1" height="1.8" fill="#9cdcfe" fill-opacity="0.60"/><rect x="2" y="202" width="1" height="1.8" fill="#9cdcfe" fill-opacity="0.70"/><rect x="4" y="202" width="2" height="1.8" fill="#dcdcaa" fill-opacity="0.70"/><rect x="7" y="202" width="3" height="1.8" fill="#9cdcfe" fill-opacity="0.70"/><rect x="10" y="202" width="1" height="1.8" fill="#9cdcfe" fill-opacity="0.60"/><rect x="11" y="202" width="1" height="1.8" fill="#d4d4d4" fill-opacity="0.40"/><rect x="0" y="204" width="4" height="1.8" fill="#9cdcfe" fill-opacity="0.70"/><rect x="5" y="204" width="2" height="1.8" fill="#dcdcaa" fill-opacity="0.70"/><rect x="8" y="204" width="1" height="1.8" fill="#ce9178" fill-opacity="0.40"/><rect x="9" y="204" width="2" height="1.8" fill="#d7ba7d" fill-opacity="0.70"/><rect x="12" y="204" width="1" height="1.8" fill="#ce9178" fill-opacity="0.85"/><rect x="13" y="204" width="4" height="1.8" fill="#ce9178" fill-opacity="0.70"/><rect x="18" y="204" width="3" height="1.8" fill="#ce9178" fill-opacity="0.70"/><rect x="22" y="204" width="1" height="1.8" fill="#ce9178" fill-opacity="0.85"/><rect x="23" y="204" width="5" height="1.8" fill="#ce9178" fill-opacity="0.70"/><rect x="29" y="204" width="6" height="1.8" fill="#ce9178" fill-opacity="0.70"/><rect x="36" y="204" width="1" height="1.8" fill="#ce9178" fill-opacity="0.40"/><rect x="38" y="204" width="1" height="1.8" fill="#ce9178" fill-opacity="0.40"/><rect x="39" y="204" width="1" height="1.8" fill="#d4d4d4" fill-opacity="0.40"/><rect x="0" y="206" width="1" height="1.8" fill="#9cdcfe" fill-opacity="0.70"/><rect x="1" y="206" width="1" height="1.8" fill="#9cdcfe" fill-opacity="0.60"/><rect x="2" y="206" width="1" height="1.8" fill="#9cdcfe" fill-opacity="0.70"/><rect x="4" y="206" width="2" height="1.8" fill="#dcdcaa" fill-opacity="0.70"/><rect x="7" y="206" width="4" height="1.8" fill="#9cdcfe" fill-opacity="0.70"/><rect x="11" y="206" width="1" height="1.8" fill="#d4d4d4" fill-opacity="0.40"/><rect x="0" y="208" width="2" height="1.8" fill="#c586c0" fill-opacity="0.70"/><rect x="2" y="208" width="2" height="1.8" fill="#c586c0" fill-opacity="0.60"/><rect x="4" y="208" width="1" height="1.8" fill="#c586c0" fill-opacity="0.70"/><rect x="6" y="208" width="1" height="1.8" fill="#da70d6" fill-opacity="0.60"/><rect x="7" y="208" width="4" height="1.8" fill="#9cdcfe" fill-opacity="0.70"/><rect x="12" y="208" width="1" height="1.8" fill="#d4d4d4" fill-opacity="0.40"/><rect x="13" y="208" width="1" height="1.8" fill="#d4d4d4" fill-opacity="0.40"/><rect x="15" y="208" width="1" height="1.8" fill="#b5cea8" fill-opacity="0.70"/><rect x="16" y="208" width="1" height="1.8" fill="#da70d6" fill-opacity="0.60"/><rect x="0" y="210" width="1" height="1.8" fill="#da70d6" fill-opacity="0.60"/><rect x="6" y="212" width="4" height="1.8" fill="#9cdcfe" fill-opacity="0.70"/><rect x="11" y="212" width="2" height="1.8" fill="#dcdcaa" fill-opacity="0.70"/><rect x="14" y="212" width="1" height="1.8" fill="#ce9178" fill-opacity="0.40"/><rect x="15" y="212" width="2" height="1.8" fill="#d7ba7d" fill-opacity="0.70"/><rect x="18" y="212" width="1" height="1.8" fill="#ce9178" fill-opacity="0.85"/><rect x="19" y="212" width="1" height="1.8" fill="#ce9178" fill-opacity="0.60"/><rect x="20" y="212" width="1" height="1.8" fill="#ce9178" fill-opacity="0.70"/><rect x="21" y="212" width="1" height="1.8" fill="#ce9178" fill-opacity="0.60"/><rect x="22" y="212" width="3" height="1.8" fill="#ce9178" fill-opacity="0.70"/><rect x="26" y="212" width="5" height="1.8" fill="#ce9178" fill-opacity="0.70"/><rect x="32" y="212" width="2" height="1.8" fill="#ce9178" fill-opacity="0.70"/><rect x="35" y="212" width="4" height="1.8" fill="#ce9178" fill-opacity="0.70"/><rect x="39" y="212" width="1" height="1.8" fill="#ce9178" fill-opacity="0.40"/><rect x="11" y="214" width="1" height="1.8" fill="#ce9178" fill-opacity="0.40"/><rect x="12" y="214" width="2" height="1.8" fill="#d7ba7d" fill-opacity="0.70"/><rect x="15" y="214" width="1" height="1.8" fill="#ce9178" fill-opacity="0.85"/><rect x="16" y="214" width="1" height="1.8" fill="#ce9178" fill-opacity="0.60"/><rect x="17" y="214" width="4" height="1.8" fill="#ce9178" fill-opacity="0.70"/><rect x="22" y="214" width="5" height="1.8" fill="#ce9178" fill-opacity="0.70"/><rect x="28" y="214" width="3" height="1.8" fill="#ce9178" fill-opacity="0.70"/><rect x="32" y="214" width="1" height="1.8" fill="#ce9178" fill-opacity="0.70"/><rect x="33" y="214" width="1" height="1.8" fill="#ce9178" fill-opacity="0.60"/><rect x="34" y="214" width="1" height="1.8" fill="#ce9178" fill-opacity="0.70"/><rect x="35" y="214" width="1" height="1.8" fill="#ce9178" fill-opacity="0.60"/><rect x="36" y="214" width="3" height="1.8" fill="#ce9178" fill-opacity="0.70"/><rect x="40" y="214" width="4" height="1.8" fill="#ce9178" fill-opacity="0.70"/><rect x="45" y="214" width="3" height="1.8" fill="#ce9178" fill-opacity="0.70"/><rect x="48" y="214" width="1" height="1.8" fill="#ce9178" fill-opacity="0.60"/><rect x="49" y="214" width="1" height="1.8" fill="#ce9178" fill-opacity="0.70"/><rect x="50" y="214" width="1" height="1.8" fill="#ce9178" fill-opacity="0.40"/><rect x="52" y="214" width="1" height="1.8" fill="#ce9178" fill-opacity="0.40"/><rect x="53" y="214" width="1" height="1.8" fill="#d4d4d4" fill-opacity="0.40"/><rect x="11" y="216" width="1" height="1.8" fill="#9cdcfe" fill-opacity="0.70"/><rect x="12" y="216" width="1" height="1.8" fill="#9cdcfe" fill-opacity="0.60"/><rect x="13" y="216" width="1" height="1.8" fill="#9cdcfe" fill-opacity="0.70"/><rect x="15" y="216" width="2" height="1.8" fill="#dcdcaa" fill-opacity="0.70"/><rect x="18" y="216" width="4" height="1.8" fill="#9cdcfe" fill-opacity="0.70"/><rect x="22" y="216" width="1" height="1.8" fill="#d4d4d4" fill-opacity="0.40"/><rect x="0" y="218" width="1" height="1.8" fill="#da70d6" fill-opacity="0.60"/><rect x="0" y="220" width="1" height="1.8" fill="#9cdcfe" fill-opacity="0.70"/><rect x="1" y="220" width="1" height="1.8" fill="#9cdcfe" fill-opacity="0.60"/><rect x="2" y="220" width="1" height="1.8" fill="#9cdcfe" fill-opacity="0.70"/><rect x="4" y="220" width="1" height="1.8" fill="#d4d4d4" fill-opacity="0.40"/><rect x="6" y="220" width="3" height="1.8" fill="#9cdcfe" fill-opacity="0.70"/><rect x="9" y="220" width="1" height="1.8" fill="#9cdcfe" fill-opacity="0.60"/><rect x="11" y="220" width="1" height="1.8" fill="#d4d4d4" fill-opacity="0.70"/><rect x="13" y="220" width="4" height="1.8" fill="#9cdcfe" fill-opacity="0.70"/><rect x="17" y="220" width="1" height="1.8" fill="#d4d4d4" fill-opacity="0.40"/><rect x="0" y="222" width="4" height="1.8" fill="#9cdcfe" fill-opacity="0.70"/><rect x="5" y="222" width="2" height="1.8" fill="#dcdcaa" fill-opacity="0.70"/><rect x="7" y="222" width="1" height="1.8" fill="#ce9178" fill-opacity="0.40"/><rect x="8" y="222" width="2" height="1.8" fill="#d7ba7d" fill-opacity="0.70"/><rect x="11" y="222" width="1" height="1.8" fill="#ce9178" fill-opacity="0.85"/><rect x="12" y="222" width="1" height="1.8" fill="#ce9178" fill-opacity="0.60"/><rect x="13" y="222" width="1" height="1.8" fill="#ce9178" fill-opacity="0.70"/><rect x="14" y="222" width="1" height="1.8" fill="#ce9178" fill-opacity="0.60"/><rect x="15" y="222" width="1" height="1.8" fill="#ce9178" fill-opacity="0.70"/><rect x="16" y="222" width="1" height="1.8" fill="#ce9178" fill-opacity="0.60"/><rect x="17" y="222" width="2" height="1.8" fill="#ce9178" fill-opacity="0.70"/><rect x="20" y="222" width="2" height="1.8" fill="#ce9178" fill-opacity="0.70"/><rect x="23" y="222" width="3" height="1.8" fill="#ce9178" fill-opacity="0.70"/><rect x="27" y="222" width="7" height="1.8" fill="#ce9178" fill-opacity="0.70"/><rect x="35" y="222" width="1" height="1.8" fill="#ce9178" fill-opacity="0.40"/><rect x="37" y="222" width="1" height="1.8" fill="#ce9178" fill-opacity="0.40"/><rect x="39" y="222" width="2" height="1.8" fill="#dcdcaa" fill-opacity="0.70"/><rect x="42" y="222" width="1" height="1.8" fill="#9cdcfe" fill-opacity="0.70"/><rect x="43" y="222" width="1" height="1.8" fill="#9cdcfe" fill-opacity="0.60"/><rect x="44" y="222" width="1" height="1.8" fill="#9cdcfe" fill-opacity="0.70"/><rect x="45" y="222" width="1" height="1.8" fill="#d4d4d4" fill-opacity="0.40"/><rect x="0" y="224" width="1" height="1.8" fill="#ffd700" fill-opacity="0.60"/><rect x="0" y="226" width="2" height="1.8" fill="#569cd6" fill-opacity="0.70"/><rect x="2" y="226" width="1" height="1.8" fill="#569cd6" fill-opacity="0.60"/><rect x="3" y="226" width="1" height="1.8" fill="#569cd6" fill-opacity="0.70"/><rect x="5" y="226" width="3" height="1.8" fill="#dcdcaa" fill-opacity="0.70"/><rect x="8" y="226" width="1" height="1.8" fill="#ffd700" fill-opacity="0.60"/><rect x="9" y="226" width="1" height="1.8" fill="#ffd700" fill-opacity="0.60"/><rect x="0" y="228" width="1" height="1.8" fill="#ffd700" fill-opacity="0.60"/><rect x="0" y="230" width="1" height="1.8" fill="#569cd6" fill-opacity="0.60"/><rect x="1" y="230" width="2" height="1.8" fill="#569cd6" fill-opacity="0.70"/><rect x="4" y="230" width="3" height="1.8" fill="#9cdcfe" fill-opacity="0.70"/><rect x="7" y="230" width="1" height="1.8" fill="#9cdcfe" fill-opacity="0.60"/><rect x="8" y="230" width="1" height="1.8" fill="#d4d4d4" fill-opacity="0.40"/><rect x="0" y="232" width="1" height="1.8" fill="#569cd6" fill-opacity="0.70"/><rect x="1" y="232" width="1" height="1.8" fill="#569cd6" fill-opacity="0.60"/><rect x="2" y="232" width="3" height="1.8" fill="#569cd6" fill-opacity="0.70"/><rect x="6" y="232" width="2" height="1.8" fill="#9cdcfe" fill-opacity="0.70"/><rect x="8" y="232" width="1" height="1.8" fill="#d4d4d4" fill-opacity="0.40"/><rect x="0" y="234" width="4" height="1.8" fill="#9cdcfe" fill-opacity="0.70"/><rect x="5" y="234" width="2" height="1.8" fill="#dcdcaa" fill-opacity="0.70"/><rect x="7" y="234" width="1" height="1.8" fill="#ce9178" fill-opacity="0.40"/><rect x="9" y="234" width="2" height="1.8" fill="#d7ba7d" fill-opacity="0.70"/><rect x="12" y="234" width="1" height="1.8" fill="#ce9178" fill-opacity="0.85"/><rect x="13" y="234" width="4" height="1.8" fill="#ce9178" fill-opacity="0.70"/><rect x="18" y="234" width="1" height="1.8" fill="#ce9178" fill-opacity="0.70"/><rect x="20" y="234" width="6" height="1.8" fill="#ce9178" fill-opacity="0.70"/><rect x="27" y="234" width="2" height="1.8" fill="#ce9178" fill-opacity="0.70"/><rect x="30" y="234" width="1" height="1.8" fill="#ce9178" fill-opacity="0.70"/><rect x="31" y="234" width="1" height="1.8" fill="#ce9178" fill-opacity="0.60"/><rect x="32" y="234" width="2" height="1.8" fill="#ce9178" fill-opacity="0.70"/><rect x="35" y="234" width="3" height="1.8" fill="#ce9178" fill-opacity="0.70"/><rect x="39" y="234" width="1" height="1.8" fill="#ce9178" fill-opacity="0.85"/><rect x="40" y="234" width="5" height="1.8" fill="#ce9178" fill-opacity="0.70"/><rect x="45" y="234" width="1" height="1.8" fill="#ce9178" fill-opacity="0.40"/><rect x="47" y="234" width="1" height="1.8" fill="#ce9178" fill-opacity="0.40"/><rect x="48" y="234" width="1" height="1.8" fill="#d4d4d4" fill-opacity="0.40"/><rect x="0" y="236" width="1" height="1.8" fill="#9cdcfe" fill-opacity="0.70"/><rect x="1" y="236" width="1" height="1.8" fill="#9cdcfe" fill-opacity="0.60"/><rect x="2" y="236" width="1" height="1.8" fill="#9cdcfe" fill-opacity="0.70"/><rect x="4" y="236" width="2" height="1.8" fill="#dcdcaa" fill-opacity="0.70"/><rect x="7" y="236" width="3" height="1.8" fill="#9cdcfe" fill-opacity="0.70"/><rect x="10" y="236" width="1" height="1.8" fill="#9cdcfe" fill-opacity="0.60"/><rect x="11" y="236" width="1" height="1.8" fill="#d4d4d4" fill-opacity="0.40"/><rect x="0" y="238" width="2" height="1.8" fill="#9cdcfe" fill-opacity="0.70"/><rect x="3" y="238" width="1" height="1.8" fill="#d4d4d4" fill-opacity="0.40"/><rect x="5" y="238" width="3" height="1.8" fill="#9cdcfe" fill-opacity="0.70"/><rect x="8" y="238" width="1" height="1.8" fill="#9cdcfe" fill-opacity="0.60"/><rect x="10" y="238" width="1" height="1.8" fill="#d4d4d4" fill-opacity="0.70"/><rect x="12" y="238" width="3" height="1.8" fill="#9cdcfe" fill-opacity="0.70"/><rect x="15" y="238" width="1" height="1.8" fill="#9cdcfe" fill-opacity="0.60"/><rect x="16" y="238" width="1" height="1.8" fill="#d4d4d4" fill-opacity="0.40"/><rect x="0" y="240" width="4" height="1.8" fill="#9cdcfe" fill-opacity="0.70"/><rect x="5" y="240" width="2" height="1.8" fill="#dcdcaa" fill-opacity="0.70"/><rect x="7" y="240" width="1" height="1.8" fill="#ce9178" fill-opacity="0.40"/><rect x="9" y="240" width="2" height="1.8" fill="#d7ba7d" fill-opacity="0.70"/><rect x="12" y="240" width="1" height="1.8" fill="#ce9178" fill-opacity="0.85"/><rect x="13" y="240" width="5" height="1.8" fill="#ce9178" fill-opacity="0.70"/><rect x="19" y="240" width="2" height="1.8" fill="#ce9178" fill-opacity="0.70"/><rect x="22" y="240" width="1" height="1.8" fill="#ce9178" fill-opacity="0.40"/><rect x="24" y="240" width="2" height="1.8" fill="#dcdcaa" fill-opacity="0.70"/><rect x="27" y="240" width="3" height="1.8" fill="#9cdcfe" fill-opacity="0.70"/><rect x="30" y="240" width="1" height="1.8" fill="#9cdcfe" fill-opacity="0.60"/><rect x="31" y="240" width="2" height="1.8" fill="#dcdcaa" fill-opacity="0.70"/><rect x="34" y="240" width="1" height="1.8" fill="#ce9178" fill-opacity="0.40"/><rect x="36" y="240" width="1" height="1.8" fill="#ce9178" fill-opacity="0.60"/><rect x="37" y="240" width="1" height="1.8" fill="#ce9178" fill-opacity="0.70"/><rect x="38" y="240" width="1" height="1.8" fill="#ce9178" fill-opacity="0.40"/><rect x="40" y="240" width="1" height="1.8" fill="#ce9178" fill-opacity="0.40"/><rect x="42" y="240" width="2" height="1.8" fill="#dcdcaa" fill-opacity="0.70"/><rect x="44" y="240" width="2" height="1.8" fill="#9cdcfe" fill-opacity="0.70"/><rect x="46" y="240" width="1" height="1.8" fill="#d4d4d4" fill-opacity="0.40"/><rect x="0" y="242" width="1" height="1.8" fill="#ffd700" fill-opacity="0.60"/><rect x="0" y="244" width="2" height="1.8" fill="#569cd6" fill-opacity="0.70"/><rect x="2" y="244" width="1" height="1.8" fill="#569cd6" fill-opacity="0.60"/><rect x="3" y="244" width="1" height="1.8" fill="#569cd6" fill-opacity="0.70"/><rect x="5" y="244" width="3" height="1.8" fill="#dcdcaa" fill-opacity="0.70"/><rect x="8" y="244" width="1" height="1.8" fill="#ffd700" fill-opacity="0.60"/><rect x="9" y="244" width="1" height="1.8" fill="#ffd700" fill-opacity="0.60"/><rect x="0" y="246" width="1" height="1.8" fill="#ffd700" fill-opacity="0.60"/><rect x="0" y="248" width="1" height="1.8" fill="#569cd6" fill-opacity="0.70"/><rect x="1" y="248" width="1" height="1.8" fill="#569cd6" fill-opacity="0.60"/><rect x="2" y="248" width="3" height="1.8" fill="#569cd6" fill-opacity="0.70"/><rect x="6" y="248" width="1" height="1.8" fill="#9cdcfe" fill-opacity="0.70"/><rect x="7" y="248" width="1" height="1.8" fill="#d4d4d4" fill-opacity="0.40"/><rect x="0" y="250" width="1" height="1.8" fill="#569cd6" fill-opacity="0.60"/><rect x="1" y="250" width="2" height="1.8" fill="#569cd6" fill-opacity="0.70"/><rect x="4" y="250" width="3" height="1.8" fill="#9cdcfe" fill-opacity="0.70"/><rect x="7" y="250" width="1" height="1.8" fill="#9cdcfe" fill-opacity="0.60"/><rect x="8" y="250" width="1" height="1.8" fill="#d4d4d4" fill-opacity="0.40"/><rect x="0" y="252" width="4" height="1.8" fill="#9cdcfe" fill-opacity="0.70"/><rect x="5" y="252" width="2" height="1.8" fill="#dcdcaa" fill-opacity="0.70"/><rect x="8" y="252" width="1" height="1.8" fill="#ce9178" fill-opacity="0.40"/><rect x="9" y="252" width="2" height="1.8" fill="#d7ba7d" fill-opacity="0.70"/><rect x="12" y="252" width="1" height="1.8" fill="#ce9178" fill-opacity="0.85"/><rect x="13" y="252" width="4" height="1.8" fill="#ce9178" fill-opacity="0.70"/><rect x="18" y="252" width="3" height="1.8" fill="#ce9178" fill-opacity="0.70"/><rect x="22" y="252" width="6" height="1.8" fill="#ce9178" fill-opacity="0.70"/><rect x="29" y="252" width="2" height="1.8" fill="#ce9178" fill-opacity="0.70"/><rect x="32" y="252" width="1" height="1.8" fill="#ce9178" fill-opacity="0.70"/><rect x="33" y="252" width="1" height="1.8" fill="#ce9178" fill-opacity="0.60"/><rect x="34" y="252" width="2" height="1.8" fill="#ce9178" fill-opacity="0.70"/><rect x="37" y="252" width="3" height="1.8" fill="#ce9178" fill-opacity="0.70"/><rect x="41" y="252" width="1" height="1.8" fill="#ce9178" fill-opacity="0.85"/><rect x="42" y="252" width="5" height="1.8" fill="#ce9178" fill-opacity="0.70"/><rect x="48" y="252" width="1" height="1.8" fill="#ce9178" fill-opacity="0.85"/><rect x="49" y="252" width="3" height="1.8" fill="#ce9178" fill-opacity="0.70"/><rect x="52" y="252" width="1" height="1.8" fill="#ce9178" fill-opacity="0.40"/><rect x="53" y="252" width="1" height="1.8" fill="#ce9178" fill-opacity="0.40"/><rect x="54" y="252" width="1" height="1.8" fill="#d4d4d4" fill-opacity="0.40"/><rect x="0" y="254" width="1" height="1.8" fill="#9cdcfe" fill-opacity="0.70"/><rect x="1" y="254" width="1" height="1.8" fill="#9cdcfe" fill-opacity="0.60"/><rect x="2" y="254" width="1" height="1.8" fill="#9cdcfe" fill-opacity="0.70"/><rect x="4" y="254" width="2" height="1.8" fill="#dcdcaa" fill-opacity="0.70"/><rect x="7" y="254" width="3" height="1.8" fill="#9cdcfe" fill-opacity="0.70"/><rect x="10" y="254" width="1" height="1.8" fill="#9cdcfe" fill-opacity="0.60"/><rect x="11" y="254" width="1" height="1.8" fill="#d4d4d4" fill-opacity="0.40"/><rect x="0" y="256" width="1" height="1.8" fill="#9cdcfe" fill-opacity="0.70"/><rect x="2" y="256" width="1" height="1.8" fill="#d4d4d4" fill-opacity="0.40"/><rect x="4" y="256" width="4" height="1.8" fill="#dcdcaa" fill-opacity="0.70"/><rect x="8" y="256" width="1" height="1.8" fill="#da70d6" fill-opacity="0.60"/><rect x="9" y="256" width="3" height="1.8" fill="#9cdcfe" fill-opacity="0.70"/><rect x="12" y="256" width="1" height="1.8" fill="#9cdcfe" fill-opacity="0.60"/><rect x="13" y="256" width="1" height="1.8" fill="#da70d6" fill-opacity="0.60"/><rect x="14" y="256" width="1" height="1.8" fill="#d4d4d4" fill-opacity="0.40"/><rect x="0" y="258" width="4" height="1.8" fill="#9cdcfe" fill-opacity="0.70"/><rect x="5" y="258" width="2" height="1.8" fill="#dcdcaa" fill-opacity="0.70"/><rect x="7" y="258" width="1" height="1.8" fill="#ce9178" fill-opacity="0.40"/><rect x="9" y="258" width="2" height="1.8" fill="#d7ba7d" fill-opacity="0.70"/><rect x="12" y="258" width="1" height="1.8" fill="#ce9178" fill-opacity="0.85"/><rect x="13" y="258" width="5" height="1.8" fill="#ce9178" fill-opacity="0.70"/><rect x="19" y="258" width="1" height="1.8" fill="#ce9178" fill-opacity="0.85"/><rect x="20" y="258" width="3" height="1.8" fill="#ce9178" fill-opacity="0.70"/><rect x="24" y="258" width="2" height="1.8" fill="#ce9178" fill-opacity="0.70"/><rect x="27" y="258" width="1" height="1.8" fill="#ce9178" fill-opacity="0.40"/><rect x="29" y="258" width="2" height="1.8" fill="#dcdcaa" fill-opacity="0.70"/><rect x="32" y="258" width="3" height="1.8" fill="#9cdcfe" fill-opacity="0.70"/><rect x="35" y="258" width="1" height="1.8" fill="#9cdcfe" fill-opacity="0.60"/><rect x="36" y="258" width="2" height="1.8" fill="#dcdcaa" fill-opacity="0.70"/><rect x="39" y="258" width="1" height="1.8" fill="#ce9178" fill-opacity="0.40"/><rect x="41" y="258" width="1" height="1.8" fill="#ce9178" fill-opacity="0.60"/><rect x="42" y="258" width="1" height="1.8" fill="#ce9178" fill-opacity="0.70"/><rect x="43" y="258" width="1" height="1.8" fill="#ce9178" fill-opacity="0.40"/><rect x="45" y="258" width="1" height="1.8" fill="#ce9178" fill-opacity="0.40"/><rect x="47" y="258" width="2" height="1.8" fill="#dcdcaa" fill-opacity="0.70"/><rect x="49" y="258" width="1" height="1.8" fill="#9cdcfe" fill-opacity="0.70"/><rect x="50" y="258" width="1" height="1.8" fill="#d4d4d4" fill-opacity="0.40"/><rect x="0" y="260" width="1" height="1.8" fill="#ffd700" fill-opacity="0.60"/></svg>
<svg class="mm" style="left:1763px;top:2px" width="90" height="270" viewBox="0 0 90 270"><rect x="0" y="0" width="1" height="1.8" fill="#c586c0" fill-opacity="0.85"/><rect x="1" y="0" width="1" height="1.8" fill="#c586c0" fill-opacity="0.60"/><rect x="2" y="0" width="2" height="1.8" fill="#c586c0" fill-opacity="0.70"/><rect x="4" y="0" width="1" height="1.8" fill="#c586c0" fill-opacity="0.60"/><rect x="5" y="0" width="3" height="1.8" fill="#c586c0" fill-opacity="0.70"/><rect x="8" y="0" width="1" height="1.8" fill="#ce9178" fill-opacity="0.70"/><rect x="9" y="0" width="1" height="1.8" fill="#ce9178" fill-opacity="0.60"/><rect x="10" y="0" width="8" height="1.8" fill="#ce9178" fill-opacity="0.70"/><rect x="0" y="2" width="1" height="1.8" fill="#c586c0" fill-opacity="0.85"/><rect x="1" y="2" width="1" height="1.8" fill="#c586c0" fill-opacity="0.60"/><rect x="2" y="2" width="2" height="1.8" fill="#c586c0" fill-opacity="0.70"/><rect x="4" y="2" width="1" height="1.8" fill="#c586c0" fill-opacity="0.60"/><rect x="5" y="2" width="3" height="1.8" fill="#c586c0" fill-opacity="0.70"/><rect x="8" y="2" width="4" height="1.8" fill="#ce9178" fill-opacity="0.70"/><rect x="12" y="2" width="1" height="1.8" fill="#ce9178" fill-opacity="0.60"/><rect x="13" y="2" width="1" height="1.8" fill="#ce9178" fill-opacity="0.70"/><rect x="14" y="2" width="1" height="1.8" fill="#ce9178" fill-opacity="0.40"/><rect x="15" y="2" width="2" height="1.8" fill="#ce9178" fill-opacity="0.70"/><rect x="0" y="4" width="1" height="1.8" fill="#c586c0" fill-opacity="0.85"/><rect x="1" y="4" width="1" height="1.8" fill="#c586c0" fill-opacity="0.60"/><rect x="2" y="4" width="2" height="1.8" fill="#c586c0" fill-opacity="0.70"/><rect x="4" y="4" width="1" height="1.8" fill="#c586c0" fill-opacity="0.60"/><rect x="5" y="4" width="3" height="1.8" fill="#c586c0" fill-opacity="0.70"/><rect x="8" y="4" width="4" height="1.8" fill="#ce9178" fill-opacity="0.70"/><rect x="12" y="4" width="1" height="1.8" fill="#ce9178" fill-opacity="0.60"/><rect x="13" y="4" width="1" height="1.8" fill="#ce9178" fill-opacity="0.70"/><rect x="14" y="4" width="1" height="1.8" fill="#ce9178" fill-opacity="0.40"/><rect x="15" y="4" width="2" height="1.8" fill="#ce9178" fill-opacity="0.70"/><rect x="0" y="6" width="1" height="1.8" fill="#c586c0" fill-opacity="0.85"/><rect x="1" y="6" width="1" height="1.8" fill="#c586c0" fill-opacity="0.60"/><rect x="2" y="6" width="2" height="1.8" fill="#c586c0" fill-opacity="0.70"/><rect x="4" y="6" width="1" height="1.8" fill="#c586c0" fill-opacity="0.60"/><rect x="5" y="6" width="3" height="1.8" fill="#c586c0" fill-opacity="0.70"/><rect x="8" y="6" width="5" height="1.8" fill="#ce9178" fill-opacity="0.70"/><rect x="13" y="6" width="1" height="1.8" fill="#ce9178" fill-opacity="0.40"/><rect x="14" y="6" width="2" height="1.8" fill="#ce9178" fill-opacity="0.70"/><rect x="0" y="8" width="1" height="1.8" fill="#c586c0" fill-opacity="0.85"/><rect x="1" y="8" width="1" height="1.8" fill="#c586c0" fill-opacity="0.60"/><rect x="2" y="8" width="2" height="1.8" fill="#c586c0" fill-opacity="0.70"/><rect x="4" y="8" width="1" height="1.8" fill="#c586c0" fill-opacity="0.60"/><rect x="5" y="8" width="3" height="1.8" fill="#c586c0" fill-opacity="0.70"/><rect x="8" y="8" width="4" height="1.8" fill="#ce9178" fill-opacity="0.70"/><rect x="12" y="8" width="2" height="1.8" fill="#ce9178" fill-opacity="0.60"/><rect x="14" y="8" width="1" height="1.8" fill="#ce9178" fill-opacity="0.70"/><rect x="15" y="8" width="1" height="1.8" fill="#ce9178" fill-opacity="0.40"/><rect x="16" y="8" width="2" height="1.8" fill="#ce9178" fill-opacity="0.70"/><rect x="0" y="10" width="2" height="1.8" fill="#c586c0" fill-opacity="0.70"/><rect x="2" y="10" width="1" height="1.8" fill="#c586c0" fill-opacity="0.60"/><rect x="3" y="10" width="2" height="1.8" fill="#c586c0" fill-opacity="0.70"/><rect x="6" y="10" width="9" height="1.8" fill="#569cd6" fill-opacity="0.70"/><rect x="16" y="10" width="3" height="1.8" fill="#4ec9b0" fill-opacity="0.70"/><rect x="19" y="10" width="1" height="1.8" fill="#d4d4d4" fill-opacity="0.40"/><rect x="0" y="12" width="2" height="1.8" fill="#569cd6" fill-opacity="0.70"/><rect x="2" y="12" width="1" height="1.8" fill="#569cd6" fill-opacity="0.60"/><rect x="3" y="12" width="1" height="1.8" fill="#569cd6" fill-opacity="0.70"/><rect x="5" y="12" width="3" height="1.8" fill="#dcdcaa" fill-opacity="0.70"/><rect x="8" y="12" width="1" height="1.8" fill="#ffd700" fill-opacity="0.60"/><rect x="9" y="12" width="1" height="1.8" fill="#ffd700" fill-opacity="0.60"/><rect x="10" y="12" width="1" height="1.8" fill="#d4d4d4" fill-opacity="0.40"/><rect x="0" y="14" width="2" height="1.8" fill="#569cd6" fill-opacity="0.70"/><rect x="2" y="14" width="1" height="1.8" fill="#569cd6" fill-opacity="0.60"/><rect x="3" y="14" width="1" height="1.8" fill="#569cd6" fill-opacity="0.70"/><rect x="5" y="14" width="3" height="1.8" fill="#dcdcaa" fill-opacity="0.70"/><rect x="8" y="14" width="1" height="1.8" fill="#ffd700" fill-opacity="0.60"/><rect x="9" y="14" width="1" height="1.8" fill="#ffd700" fill-opacity="0.60"/><rect x="10" y="14" width="1" height="1.8" fill="#d4d4d4" fill-opacity="0.40"/><rect x="0" y="16" width="2" height="1.8" fill="#569cd6" fill-opacity="0.70"/><rect x="2" y="16" width="1" height="1.8" fill="#569cd6" fill-opacity="0.60"/><rect x="3" y="16" width="1" height="1.8" fill="#569cd6" fill-opacity="0.70"/><rect x="5" y="16" width="2" height="1.8" fill="#dcdcaa" fill-opacity="0.70"/><rect x="7" y="16" width="1" height="1.8" fill="#dcdcaa" fill-opacity="0.60"/><rect x="8" y="16" width="1" height="1.8" fill="#dcdcaa" fill-opacity="0.70"/><rect x="9" y="16" width="1" height="1.8" fill="#dcdcaa" fill-opacity="0.60"/><rect x="10" y="16" width="1" height="1.8" fill="#ffd700" fill-opacity="0.60"/><rect x="11" y="16" width="1" height="1.8" fill="#ffd700" fill-opacity="0.60"/><rect x="12" y="16" width="1" height="1.8" fill="#d4d4d4" fill-opacity="0.40"/><rect x="0" y="18" width="2" height="1.8" fill="#569cd6" fill-opacity="0.70"/><rect x="2" y="18" width="1" height="1.8" fill="#569cd6" fill-opacity="0.60"/><rect x="3" y="18" width="1" height="1.8" fill="#569cd6" fill-opacity="0.70"/><rect x="5" y="18" width="1" height="1.8" fill="#dcdcaa" fill-opacity="0.70"/><rect x="6" y="18" width="1" height="1.8" fill="#dcdcaa" fill-opacity="0.60"/><rect x="7" y="18" width="1" height="1.8" fill="#dcdcaa" fill-opacity="0.70"/><rect x="8" y="18" width="1" height="1.8" fill="#dcdcaa" fill-opacity="0.60"/><rect x="9" y="18" width="1" height="1.8" fill="#dcdcaa" fill-opacity="0.70"/><rect x="10" y="18" width="1" height="1.8" fill="#dcdcaa" fill-opacity="0.60"/><rect x="11" y="18" width="2" height="1.8" fill="#dcdcaa" fill-opacity="0.70"/><rect x="13" y="18" width="1" height="1.8" fill="#ffd700" fill-opacity="0.60"/><rect x="14" y="18" width="1" height="1.8" fill="#ffd700" fill-opacity="0.60"/><rect x="15" y="18" width="1" height="1.8" fill="#d4d4d4" fill-opacity="0.40"/><rect x="0" y="20" width="2" height="1.8" fill="#569cd6" fill-opacity="0.70"/><rect x="2" y="20" width="1" height="1.8" fill="#569cd6" fill-opacity="0.60"/><rect x="3" y="20" width="1" height="1.8" fill="#569cd6" fill-opacity="0.70"/><rect x="5" y="20" width="3" height="1.8" fill="#dcdcaa" fill-opacity="0.70"/><rect x="8" y="20" width="1" height="1.8" fill="#ffd700" fill-opacity="0.60"/><rect x="9" y="20" width="1" height="1.8" fill="#ffd700" fill-opacity="0.60"/><rect x="10" y="20" width="1" height="1.8" fill="#d4d4d4" fill-opacity="0.40"/><rect x="0" y="22" width="2" height="1.8" fill="#569cd6" fill-opacity="0.70"/><rect x="2" y="22" width="1" height="1.8" fill="#569cd6" fill-opacity="0.60"/><rect x="3" y="22" width="1" height="1.8" fill="#569cd6" fill-opacity="0.70"/><rect x="5" y="22" width="3" height="1.8" fill="#dcdcaa" fill-opacity="0.70"/><rect x="8" y="22" width="1" height="1.8" fill="#ffd700" fill-opacity="0.60"/><rect x="9" y="22" width="1" height="1.8" fill="#ffd700" fill-opacity="0.60"/><rect x="10" y="22" width="1" height="1.8" fill="#d4d4d4" fill-opacity="0.40"/><rect x="0" y="24" width="2" height="1.8" fill="#569cd6" fill-opacity="0.70"/><rect x="2" y="24" width="1" height="1.8" fill="#569cd6" fill-opacity="0.60"/><rect x="3" y="24" width="1" height="1.8" fill="#569cd6" fill-opacity="0.70"/><rect x="5" y="24" width="2" height="1.8" fill="#dcdcaa" fill-opacity="0.70"/><rect x="7" y="24" width="1" height="1.8" fill="#dcdcaa" fill-opacity="0.60"/><rect x="8" y="24" width="1" height="1.8" fill="#dcdcaa" fill-opacity="0.70"/><rect x="9" y="24" width="1" height="1.8" fill="#ffd700" fill-opacity="0.60"/><rect x="10" y="24" width="1" height="1.8" fill="#ffd700" fill-opacity="0.60"/><rect x="11" y="24" width="1" height="1.8" fill="#d4d4d4" fill-opacity="0.40"/><rect x="0" y="26" width="2" height="1.8" fill="#569cd6" fill-opacity="0.70"/><rect x="2" y="26" width="1" height="1.8" fill="#569cd6" fill-opacity="0.60"/><rect x="3" y="26" width="1" height="1.8" fill="#569cd6" fill-opacity="0.70"/><rect x="5" y="26" width="1" height="1.8" fill="#dcdcaa" fill-opacity="0.70"/><rect x="6" y="26" width="1" height="1.8" fill="#dcdcaa" fill-opacity="0.60"/><rect x="7" y="26" width="4" height="1.8" fill="#dcdcaa" fill-opacity="0.70"/><rect x="11" y="26" width="1" height="1.8" fill="#ffd700" fill-opacity="0.60"/><rect x="12" y="26" width="1" height="1.8" fill="#ffd700" fill-opacity="0.60"/><rect x="13" y="26" width="1" height="1.8" fill="#ffd700" fill-opacity="0.60"/><rect x="2" y="28" width="4" height="1.8" fill="#9cdcfe" fill-opacity="0.70"/><rect x="6" y="28" width="2" height="1.8" fill="#dcdcaa" fill-opacity="0.70"/><rect x="8" y="28" width="1" height="1.8" fill="#ce9178" fill-opacity="0.40"/><rect x="9" y="28" width="1" height="1.8" fill="#ce9178" fill-opacity="0.85"/><rect x="10" y="28" width="1" height="1.8" fill="#ce9178" fill-opacity="0.70"/><rect x="11" y="28" width="1" height="1.8" fill="#ce9178" fill-opacity="0.60"/><rect x="12" y="28" width="3" height="1.8" fill="#ce9178" fill-opacity="0.70"/><rect x="16" y="28" width="3" height="1.8" fill="#ce9178" fill-opacity="0.70"/><rect x="20" y="28" width="6" height="1.8" fill="#ce9178" fill-opacity="0.70"/><rect x="26" y="28" width="1" height="1.8" fill="#ce9178" fill-opacity="0.60"/><rect x="27" y="28" width="2" height="1.8" fill="#ce9178" fill-opacity="0.70"/><rect x="30" y="28" width="4" height="1.8" fill="#ce9178" fill-opacity="0.70"/><rect x="35" y="28" width="3" height="1.8" fill="#ce9178" fill-opacity="0.70"/><rect x="39" y="28" width="1" height="1.8" fill="#ce9178" fill-opacity="0.85"/><rect x="40" y="28" width="2" height="1.8" fill="#ce9178" fill-opacity="0.70"/><rect x="43" y="28" width="1" height="1.8" fill="#ce9178" fill-opacity="0.85"/><rect x="44" y="28" width="1" height="1.8" fill="#ce9178" fill-opacity="0.70"/><rect x="45" y="28" width="1" height="1.8" fill="#ce9178" fill-opacity="0.60"/><rect x="46" y="28" width="2" height="1.8" fill="#ce9178" fill-opacity="0.70"/><rect x="48" y="28" width="1" height="1.8" fill="#ce9178" fill-opacity="0.60"/><rect x="49" y="28" width="4" height="1.8" fill="#ce9178" fill-opacity="0.70"/><rect x="53" y="28" width="1" height="1.8" fill="#ce9178" fill-opacity="0.40"/><rect x="54" y="28" width="1" height="1.8" fill="#d4d4d4" fill-opacity="0.40"/><rect x="0" y="30" width="1" height="1.8" fill="#ffd700" fill-opacity="0.60"/><rect x="0" y="32" width="1" height="1.8" fill="#569cd6" fill-opacity="0.60"/><rect x="1" y="32" width="2" height="1.8" fill="#569cd6" fill-opacity="0.70"/><rect x="4" y="32" width="2" height="1.8" fill="#dcdcaa" fill-opacity="0.70"/><rect x="6" y="32" width="1" height="1.8" fill="#dcdcaa" fill-opacity="0.60"/><rect x="7" y="32" width="1" height="1.8" fill="#dcdcaa" fill-opacity="0.70"/><rect x="8" y="32" width="1" height="1.8" fill="#ffd700" fill-opacity="0.60"/><rect x="9" y="32" width="1" height="1.8" fill="#ffd700" fill-opacity="0.60"/><rect x="0" y="34" width="1" height="1.8" fill="#ffd700" fill-opacity="0.60"/><rect x="0" y="36" width="1" height="1.8" fill="#dcdcaa" fill-opacity="0.70"/><rect x="1" y="36" width="1" height="1.8" fill="#dcdcaa" fill-opacity="0.60"/><rect x="2" y="36" width="4" height="1.8" fill="#dcdcaa" fill-opacity="0.70"/><rect x="6" y="36" width="1" height="1.8" fill="#da70d6" fill-opacity="0.60"/><rect x="7" y="36" width="1" height="1.8" fill="#da70d6" fill-opacity="0.60"/><rect x="8" y="36" width="1" height="1.8" fill="#d4d4d4" fill-opacity="0.40"/><rect x="0" y="38" width="1" height="1.8" fill="#569cd6" fill-opacity="0.60"/><rect x="1" y="38" width="2" height="1.8" fill="#569cd6" fill-opacity="0.70"/><rect x="4" y="38" width="3" height="1.8" fill="#9cdcfe" fill-opacity="0.70"/><rect x="7" y="38" width="1" height="1.8" fill="#d4d4d4" fill-opacity="0.40"/><rect x="0" y="40" width="2" height="1.8" fill="#c586c0" fill-opacity="0.70"/><rect x="0" y="42" width="1" height="1.8" fill="#da70d6" fill-opacity="0.60"/><rect x="0" y="44" width="4" height="1.8" fill="#9cdcfe" fill-opacity="0.70"/><rect x="5" y="44" width="2" height="1.8" fill="#dcdcaa" fill-opacity="0.70"/><rect x="8" y="44" width="1" height="1.8" fill="#ce9178" fill-opacity="0.40"/><rect x="9" y="44" width="2" height="1.8" fill="#d7ba7d" fill-opacity="0.70"/><rect x="11" y="44" width="1" height="1.8" fill="#ce9178" fill-opacity="0.60"/><rect x="13" y="44" width="1" height="1.8" fill="#ce9178" fill-opacity="0.40"/><rect x="15" y="44" width="1" height="1.8" fill="#ce9178" fill-opacity="0.85"/><rect x="16" y="44" width="2" height="1.8" fill="#ce9178" fill-opacity="0.70"/><rect x="18" y="44" width="1" height="1.8" fill="#ce9178" fill-opacity="0.60"/><rect x="19" y="44" width="1" height="1.8" fill="#ce9178" fill-opacity="0.70"/><rect x="20" y="44" width="1" height="1.8" fill="#ce9178" fill-opacity="0.60"/><rect x="21" y="44" width="2" height="1.8" fill="#ce9178" fill-opacity="0.70"/><rect x="23" y="44" width="1" height="1.8" fill="#ce9178" fill-opacity="0.40"/><rect x="5" y="46" width="1" height="1.8" fill="#ce9178" fill-opacity="0.40"/><rect x="6" y="46" width="2" height="1.8" fill="#d7ba7d" fill-opacity="0.70"/><rect x="8" y="46" width="1" height="1.8" fill="#ce9178" fill-opacity="0.70"/><rect x="10" y="46" width="1" height="1.8" fill="#ce9178" fill-opacity="0.40"/><rect x="12" y="46" width="1" height="1.8" fill="#ce9178" fill-opacity="0.85"/><rect x="13" y="46" width="7" height="1.8" fill="#ce9178" fill-opacity="0.70"/><rect x="20" y="46" width="1" height="1.8" fill="#ce9178" fill-opacity="0.60"/><rect x="21" y="46" width="2" height="1.8" fill="#ce9178" fill-opacity="0.70"/><rect x="23" y="46" width="1" height="1.8" fill="#ce9178" fill-opacity="0.40"/><rect x="5" y="48" width="1" height="1.8" fill="#ce9178" fill-opacity="0.40"/><rect x="6" y="48" width="2" height="1.8" fill="#d7ba7d" fill-opacity="0.70"/><rect x="8" y="48" width="1" height="1.8" fill="#ce9178" fill-opacity="0.70"/><rect x="10" y="48" width="1" height="1.8" fill="#ce9178" fill-opacity="0.40"/><rect x="12" y="48" width="1" height="1.8" fill="#ce9178" fill-opacity="0.85"/><rect x="13" y="48" width="1" height="1.8" fill="#ce9178" fill-opacity="0.70"/><rect x="14" y="48" width="1" height="1.8" fill="#ce9178" fill-opacity="0.60"/><rect x="15" y="48" width="1" height="1.8" fill="#ce9178" fill-opacity="0.70"/><rect x="16" y="48" width="1" height="1.8" fill="#ce9178" fill-opacity="0.60"/><rect x="17" y="48" width="1" height="1.8" fill="#ce9178" fill-opacity="0.70"/><rect x="18" y="48" width="2" height="1.8" fill="#ce9178" fill-opacity="0.60"/><rect x="20" y="48" width="3" height="1.8" fill="#ce9178" fill-opacity="0.70"/><rect x="23" y="48" width="1" height="1.8" fill="#ce9178" fill-opacity="0.60"/><rect x="24" y="48" width="2" height="1.8" fill="#ce9178" fill-opacity="0.70"/><rect x="26" y="48" width="1" height="1.8" fill="#ce9178" fill-opacity="0.40"/><rect x="5" y="50" width="1" height="1.8" fill="#ce9178" fill-opacity="0.40"/><rect x="6" y="50" width="2" height="1.8" fill="#d7ba7d" fill-opacity="0.70"/><rect x="8" y="50" width="1" height="1.8" fill="#ce9178" fill-opacity="0.70"/><rect x="10" y="50" width="1" height="1.8" fill="#ce9178" fill-opacity="0.40"/><rect x="12" y="50" width="1" height="1.8" fill="#ce9178" fill-opacity="0.85"/><rect x="13" y="50" width="1" height="1.8" fill="#ce9178" fill-opacity="0.60"/><rect x="14" y="50" width="1" height="1.8" fill="#ce9178" fill-opacity="0.70"/><rect x="15" y="50" width="1" height="1.8" fill="#ce9178" fill-opacity="0.60"/><rect x="16" y="50" width="1" height="1.8" fill="#ce9178" fill-opacity="0.70"/><rect x="17" y="50" width="1" height="1.8" fill="#ce9178" fill-opacity="0.60"/><rect x="18" y="50" width="2" height="1.8" fill="#ce9178" fill-opacity="0.70"/><rect x="20" y="50" width="1" height="1.8" fill="#ce9178" fill-opacity="0.40"/><rect x="5" y="52" width="1" height="1.8" fill="#ce9178" fill-opacity="0.40"/><rect x="6" y="52" width="2" height="1.8" fill="#d7ba7d" fill-opacity="0.70"/><rect x="8" y="52" width="1" height="1.8" fill="#ce9178" fill-opacity="0.70"/><rect x="10" y="52" width="1" height="1.8" fill="#ce9178" fill-opacity="0.40"/><rect x="12" y="52" width="1" height="1.8" fill="#ce9178" fill-opacity="0.85"/><rect x="13" y="52" width="5" height="1.8" fill="#ce9178" fill-opacity="0.70"/><rect x="18" y="52" width="1" height="1.8" fill="#ce9178" fill-opacity="0.40"/><rect x="5" y="54" width="1" height="1.8" fill="#ce9178" fill-opacity="0.40"/><rect x="6" y="54" width="2" height="1.8" fill="#d7ba7d" fill-opacity="0.70"/><rect x="8" y="54" width="1" height="1.8" fill="#ce9178" fill-opacity="0.70"/><rect x="10" y="54" width="1" height="1.8" fill="#ce9178" fill-opacity="0.40"/><rect x="12" y="54" width="1" height="1.8" fill="#ce9178" fill-opacity="0.85"/><rect x="13" y="54" width="5" height="1.8" fill="#ce9178" fill-opacity="0.70"/><rect x="19" y="54" width="1" height="1.8" fill="#ce9178" fill-opacity="0.85"/><rect x="20" y="54" width="3" height="1.8" fill="#ce9178" fill-opacity="0.70"/><rect x="23" y="54" width="1" height="1.8" fill="#ce9178" fill-opacity="0.40"/><rect x="5" y="56" width="1" height="1.8" fill="#ce9178" fill-opacity="0.40"/><rect x="6" y="56" width="2" height="1.8" fill="#d7ba7d" fill-opacity="0.70"/><rect x="8" y="56" width="1" height="1.8" fill="#ce9178" fill-opacity="0.70"/><rect x="10" y="56" width="1" height="1.8" fill="#ce9178" fill-opacity="0.40"/><rect x="12" y="56" width="1" height="1.8" fill="#ce9178" fill-opacity="0.85"/><rect x="13" y="56" width="1" height="1.8" fill="#ce9178" fill-opacity="0.70"/><rect x="14" y="56" width="1" height="1.8" fill="#ce9178" fill-opacity="0.60"/><rect x="15" y="56" width="1" height="1.8" fill="#ce9178" fill-opacity="0.70"/><rect x="16" y="56" width="1" height="1.8" fill="#ce9178" fill-opacity="0.40"/><rect x="5" y="58" width="1" height="1.8" fill="#ce9178" fill-opacity="0.40"/><rect x="6" y="58" width="2" height="1.8" fill="#d7ba7d" fill-opacity="0.70"/><rect x="9" y="58" width="2" height="1.8" fill="#d7ba7d" fill-opacity="0.70"/><rect x="11" y="58" width="1" height="1.8" fill="#ce9178" fill-opacity="0.85"/><rect x="12" y="58" width="3" height="1.8" fill="#ce9178" fill-opacity="0.70"/><rect x="16" y="58" width="1" height="1.8" fill="#ce9178" fill-opacity="0.70"/><rect x="18" y="58" width="3" height="1.8" fill="#ce9178" fill-opacity="0.70"/><rect x="21" y="58" width="1" height="1.8" fill="#ce9178" fill-opacity="0.60"/><rect x="22" y="58" width="2" height="1.8" fill="#ce9178" fill-opacity="0.70"/><rect x="24" y="58" width="1" height="1.8" fill="#ce9178" fill-opacity="0.40"/><rect x="26" y="58" width="1" height="1.8" fill="#ce9178" fill-opacity="0.40"/><rect x="27" y="58" width="1" height="1.8" fill="#d4d4d4" fill-opacity="0.40"/><rect x="5" y="60" width="1" height="1.8" fill="#9cdcfe" fill-opacity="0.70"/><rect x="6" y="60" width="1" height="1.8" fill="#9cdcfe" fill-opacity="0.60"/><rect x="7" y="60" width="1" height="1.8" fill="#9cdcfe" fill-opacity="0.70"/><rect x="9" y="60" width="2" height="1.8" fill="#dcdcaa" fill-opacity="0.70"/><rect x="12" y="60" width="3" height="1.8" fill="#9cdcfe" fill-opacity="0.70"/><rect x="15" y="60" width="1" height="1.8" fill="#d4d4d4" fill-opacity="0.40"/><rect x="3" y="64" width="2" height="1.8" fill="#c586c0" fill-opacity="0.70"/><rect x="5" y="64" width="1" height="1.8" fill="#c586c0" fill-opacity="0.60"/><rect x="6" y="64" width="3" height="1.8" fill="#c586c0" fill-opacity="0.70"/><rect x="10" y="64" width="1" height="1.8" fill="#179fff" fill-opacity="0.60"/><rect x="11" y="64" width="3" height="1.8" fill="#9cdcfe" fill-opacity="0.70"/><rect x="14" y="64" width="1" height="1.8" fill="#179fff" fill-opacity="0.60"/><rect x="5" y="66" width="1" height="1.8" fill="#179fff" fill-opacity="0.60"/><rect x="5" y="68" width="4" height="1.8" fill="#c586c0" fill-opacity="0.70"/><rect x="10" y="68" width="1" height="1.8" fill="#b5cea8" fill-opacity="0.60"/><rect x="11" y="68" width="1" height="1.8" fill="#d4d4d4" fill-opacity="0.40"/><rect x="4" y="70" width="3" height="1.8" fill="#dcdcaa" fill-opacity="0.70"/><rect x="7" y="70" width="1" height="1.8" fill="#ffd700" fill-opacity="0.60"/><rect x="8" y="70" width="1" height="1.8" fill="#ffd700" fill-opacity="0.60"/><rect x="9" y="70" width="1" height="1.8" fill="#d4d4d4" fill-opacity="0.40"/><rect x="4" y="72" width="5" height="1.8" fill="#c586c0" fill-opacity="0.70"/><rect x="9" y="72" width="1" height="1.8" fill="#d4d4d4" fill-opacity="0.40"/><rect x="5" y="74" width="4" height="1.8" fill="#c586c0" fill-opacity="0.70"/><rect x="10" y="74" width="1" height="1.8" fill="#b5cea8" fill-opacity="0.70"/><rect x="11" y="74" width="1" height="1.8" fill="#d4d4d4" fill-opacity="0.40"/><rect x="4" y="76" width="3" height="1.8" fill="#dcdcaa" fill-opacity="0.70"/><rect x="7" y="76" width="1" height="1.8" fill="#ffd700" fill-opacity="0.60"/><rect x="8" y="76" width="1" height="1.8" fill="#ffd700" fill-opacity="0.60"/><rect x="9" y="76" width="1" height="1.8" fill="#d4d4d4" fill-opacity="0.40"/><rect x="4" y="78" width="5" height="1.8" fill="#c586c0" fill-opacity="0.70"/><rect x="9" y="78" width="1" height="1.8" fill="#d4d4d4" fill-opacity="0.40"/><rect x="5" y="80" width="4" height="1.8" fill="#c586c0" fill-opacity="0.70"/><rect x="10" y="80" width="1" height="1.8" fill="#b5cea8" fill-opacity="0.70"/><rect x="11" y="80" width="1" height="1.8" fill="#d4d4d4" fill-opacity="0.40"/><rect x="4" y="82" width="2" height="1.8" fill="#dcdcaa" fill-opacity="0.70"/><rect x="6" y="82" width="1" height="1.8" fill="#dcdcaa" fill-opacity="0.60"/><rect x="7" y="82" width="1" height="1.8" fill="#dcdcaa" fill-opacity="0.70"/><rect x="8" y="82" width="1" height="1.8" fill="#dcdcaa" fill-opacity="0.60"/><rect x="9" y="82" width="1" height="1.8" fill="#ffd700" fill-opacity="0.60"/><rect x="10" y="82" width="1" height="1.8" fill="#ffd700" fill-opacity="0.60"/><rect x="11" y="82" width="1" height="1.8" fill="#d4d4d4" fill-opacity="0.40"/><rect x="4" y="84" width="5" height="1.8" fill="#c586c0" fill-opacity="0.70"/><rect x="9" y="84" width="1" height="1.8" fill="#d4d4d4" fill-opacity="0.40"/><rect x="5" y="86" width="4" height="1.8" fill="#c586c0" fill-opacity="0.70"/><rect x="10" y="86" width="1" height="1.8" fill="#b5cea8" fill-opacity="0.70"/><rect x="11" y="86" width="1" height="1.8" fill="#d4d4d4" fill-opacity="0.40"/><rect x="4" y="88" width="1" height="1.8" fill="#dcdcaa" fill-opacity="0.70"/><rect x="5" y="88" width="1" height="1.8" fill="#dcdcaa" fill-opacity="0.60"/><rect x="6" y="88" width="1" height="1.8" fill="#dcdcaa" fill-opacity="0.70"/><rect x="7" y="88" width="1" height="1.8" fill="#dcdcaa" fill-opacity="0.60"/><rect x="8" y="88" width="1" height="1.8" fill="#dcdcaa" fill-opacity="0.70"/><rect x="9" y="88" width="1" height="1.8" fill="#dcdcaa" fill-opacity="0.60"/><rect x="10" y="88" width="2" height="1.8" fill="#dcdcaa" fill-opacity="0.70"/><rect x="12" y="88" width="1" height="1.8" fill="#ffd700" fill-opacity="0.60"/><rect x="13" y="88" width="1" height="1.8" fill="#ffd700" fill-opacity="0.60"/><rect x="14" y="88" width="1" height="1.8" fill="#d4d4d4" fill-opacity="0.40"/><rect x="4" y="90" width="5" height="1.8" fill="#c586c0" fill-opacity="0.70"/><rect x="9" y="90" width="1" height="1.8" fill="#d4d4d4" fill-opacity="0.40"/><rect x="5" y="92" width="4" height="1.8" fill="#c586c0" fill-opacity="0.70"/><rect x="10" y="92" width="1" height="1.8" fill="#b5cea8" fill-opacity="0.70"/><rect x="11" y="92" width="1" height="1.8" fill="#d4d4d4" fill-opacity="0.40"/><rect x="4" y="94" width="3" height="1.8" fill="#dcdcaa" fill-opacity="0.70"/><rect x="7" y="94" width="1" height="1.8" fill="#ffd700" fill-opacity="0.60"/><rect x="8" y="94" width="1" height="1.8" fill="#ffd700" fill-opacity="0.60"/><rect x="9" y="94" width="1" height="1.8" fill="#d4d4d4" fill-opacity="0.40"/><rect x="4" y="96" width="5" height="1.8" fill="#c586c0" fill-opacity="0.70"/><rect x="9" y="96" width="1" height="1.8" fill="#d4d4d4" fill-opacity="0.40"/><rect x="5" y="98" width="4" height="1.8" fill="#c586c0" fill-opacity="0.70"/><rect x="10" y="98" width="1" height="1.8" fill="#b5cea8" fill-opacity="0.70"/><rect x="11" y="98" width="1" height="1.8" fill="#d4d4d4" fill-opacity="0.40"/><rect x="4" y="100" width="3" height="1.8" fill="#dcdcaa" fill-opacity="0.70"/><rect x="7" y="100" width="1" height="1.8" fill="#ffd700" fill-opacity="0.60"/><rect x="8" y="100" width="1" height="1.8" fill="#ffd700" fill-opacity="0.60"/><rect x="9" y="100" width="1" height="1.8" fill="#d4d4d4" fill-opacity="0.40"/><rect x="4" y="102" width="5" height="1.8" fill="#c586c0" fill-opacity="0.70"/><rect x="9" y="102" width="1" height="1.8" fill="#d4d4d4" fill-opacity="0.40"/><rect x="5" y="104" width="4" height="1.8" fill="#c586c0" fill-opacity="0.70"/><rect x="10" y="104" width="1" height="1.8" fill="#b5cea8" fill-opacity="0.70"/><rect x="11" y="104" width="1" height="1.8" fill="#d4d4d4" fill-opacity="0.40"/><rect x="4" y="106" width="2" height="1.8" fill="#dcdcaa" fill-opacity="0.70"/><rect x="6" y="106" width="1" height="1.8" fill="#dcdcaa" fill-opacity="0.60"/><rect x="7" y="106" width="1" height="1.8" fill="#dcdcaa" fill-opacity="0.70"/><rect x="8" y="106" width="1" height="1.8" fill="#ffd700" fill-opacity="0.60"/><rect x="9" y="106" width="1" height="1.8" fill="#b5cea8" fill-opacity="0.70"/><rect x="10" y="106" width="1" height="1.8" fill="#ffd700" fill-opacity="0.60"/><rect x="11" y="106" width="1" height="1.8" fill="#d4d4d4" fill-opacity="0.40"/><rect x="4" y="108" width="5" height="1.8" fill="#c586c0" fill-opacity="0.70"/><rect x="9" y="108" width="1" height="1.8" fill="#d4d4d4" fill-opacity="0.40"/><rect x="5" y="110" width="5" height="1.8" fill="#c586c0" fill-opacity="0.70"/><rect x="10" y="110" width="1" height="1.8" fill="#c586c0" fill-opacity="0.60"/><rect x="11" y="110" width="1" height="1.8" fill="#c586c0" fill-opacity="0.70"/><rect x="12" y="110" width="1" height="1.8" fill="#d4d4d4" fill-opacity="0.40"/><rect x="4" y="112" width="4" height="1.8" fill="#9cdcfe" fill-opacity="0.70"/><rect x="9" y="112" width="2" height="1.8" fill="#dcdcaa" fill-opacity="0.70"/><rect x="12" y="112" width="1" height="1.8" fill="#ce9178" fill-opacity="0.40"/><rect x="13" y="112" width="1" height="1.8" fill="#ce9178" fill-opacity="0.85"/><rect x="14" y="112" width="5" height="1.8" fill="#ce9178" fill-opacity="0.70"/><rect x="19" y="112" width="1" height="1.8" fill="#ce9178" fill-opacity="0.60"/><rect x="20" y="112" width="2" height="1.8" fill="#ce9178" fill-opacity="0.70"/><rect x="23" y="112" width="1" height="1.8" fill="#ce9178" fill-opacity="0.60"/><rect x="24" y="112" width="1" height="1.8" fill="#ce9178" fill-opacity="0.70"/><rect x="26" y="112" width="5" height="1.8" fill="#ce9178" fill-opacity="0.70"/><rect x="31" y="112" width="2" height="1.8" fill="#ce9178" fill-opacity="0.40"/><rect x="33" y="112" width="2" height="1.8" fill="#ce9178" fill-opacity="0.60"/><rect x="35" y="112" width="1" height="1.8" fill="#ce9178" fill-opacity="0.40"/><rect x="36" y="112" width="1" height="1.8" fill="#d4d4d4" fill-opacity="0.40"/><rect x="4" y="114" width="5" height="1.8" fill="#c586c0" fill-opacity="0.70"/><rect x="9" y="114" width="1" height="1.8" fill="#d4d4d4" fill-opacity="0.40"/><rect x="5" y="116" width="1" height="1.8" fill="#179fff" fill-opacity="0.60"/><rect x="4" y="118" width="4" height="1.8" fill="#9cdcfe" fill-opacity="0.70"/><rect x="9" y="118" width="2" height="1.8" fill="#dcdcaa" fill-opacity="0.70"/><rect x="11" y="118" width="1" height="1.8" fill="#ce9178" fill-opacity="0.40"/><rect x="13" y="118" width="2" height="1.8" fill="#d7ba7d" fill-opacity="0.70"/><rect x="15" y="118" width="31" height="1.8" fill="#ce9178" fill-opacity="0.40"/><rect x="46" y="118" width="2" height="1.8" fill="#d7ba7d" fill-opacity="0.70"/><rect x="48" y="118" width="1" height="1.8" fill="#ce9178" fill-opacity="0.40"/><rect x="49" y="118" width="1" height="1.8" fill="#d4d4d4" fill-opacity="0.40"/><rect x="4" y="120" width="1" height="1.8" fill="#da70d6" fill-opacity="0.60"/><rect x="6" y="120" width="2" height="1.8" fill="#c586c0" fill-opacity="0.70"/><rect x="8" y="120" width="2" height="1.8" fill="#c586c0" fill-opacity="0.60"/><rect x="10" y="120" width="1" height="1.8" fill="#c586c0" fill-opacity="0.70"/><rect x="12" y="120" width="1" height="1.8" fill="#da70d6" fill-opacity="0.60"/><rect x="13" y="120" width="3" height="1.8" fill="#9cdcfe" fill-opacity="0.70"/><rect x="17" y="120" width="1" height="1.8" fill="#d4d4d4" fill-opacity="0.60"/><rect x="18" y="120" width="1" height="1.8" fill="#d4d4d4" fill-opacity="0.40"/><rect x="20" y="120" width="1" height="1.8" fill="#b5cea8" fill-opacity="0.70"/><rect x="21" y="120" width="1" height="1.8" fill="#da70d6" fill-opacity="0.60"/><rect x="22" y="120" width="1" height="1.8" fill="#d4d4d4" fill-opacity="0.40"/><rect x="4" y="122" width="5" height="1.8" fill="#dcdcaa" fill-opacity="0.70"/><rect x="9" y="122" width="1" height="1.8" fill="#da70d6" fill-opacity="0.60"/><rect x="10" y="122" width="1" height="1.8" fill="#da70d6" fill-opacity="0.60"/><rect x="11" y="122" width="1" height="1.8" fill="#d4d4d4" fill-opacity="0.40"/><rect x="0" y="124" width="1" height="1.8" fill="#ffd700" fill-opacity="0.60"/><rect x="0" y="128" width="2" height="1.8" fill="#569cd6" fill-opacity="0.70"/><rect x="2" y="128" width="1" height="1.8" fill="#569cd6" fill-opacity="0.60"/><rect x="3" y="128" width="1" height="1.8" fill="#569cd6" fill-opacity="0.70"/><rect x="5" y="128" width="3" height="1.8" fill="#dcdcaa" fill-opacity="0.70"/><rect x="8" y="128" width="1" height="1.8" fill="#ffd700" fill-opacity="0.60"/><rect x="9" y="128" width="1" height="1.8" fill="#ffd700" fill-opacity="0.60"/><rect x="0" y="130" width="1" height="1.8" fill="#ffd700" fill-opacity="0.60"/><rect x="0" y="132" width="1" height="1.8" fill="#569cd6" fill-opacity="0.60"/><rect x="1" y="132" width="2" height="1.8" fill="#569cd6" fill-opacity="0.70"/><rect x="4" y="132" width="1" height="1.8" fill="#9cdcfe" fill-opacity="0.70"/><rect x="5" y="132" width="1" height="1.8" fill="#d4d4d4" fill-opacity="0.40"/><rect x="7" y="132" width="3" height="1.8" fill="#9cdcfe" fill-opacity="0.70"/><rect x="11" y="132" width="1" height="1.8" fill="#d4d4d4" fill-opacity="0.40"/><rect x="13" y="132" width="1" height="1.8" fill="#b5cea8" fill-opacity="0.70"/><rect x="14" y="132" width="1" height="1.8" fill="#d4d4d4" fill-opacity="0.40"/><rect x="16" y="132" width="1" height="1.8" fill="#9cdcfe" fill-opacity="0.60"/><rect x="17" y="132" width="1" height="1.8" fill="#d4d4d4" fill-opacity="0.40"/><rect x="19" y="132" width="6" height="1.8" fill="#9cdcfe" fill-opacity="0.70"/><rect x="25" y="132" width="1" height="1.8" fill="#d4d4d4" fill-opacity="0.40"/><rect x="0" y="134" width="4" height="1.8" fill="#9cdcfe" fill-opacity="0.70"/><rect x="5" y="134" width="2" height="1.8" fill="#dcdcaa" fill-opacity="0.70"/><rect x="7" y="134" width="1" height="1.8" fill="#ce9178" fill-opacity="0.40"/><rect x="8" y="134" width="1" height="1.8" fill="#ce9178" fill-opacity="0.85"/><rect x="9" y="134" width="2" height="1.8" fill="#ce9178" fill-opacity="0.70"/><rect x="12" y="134" width="4" height="1.8" fill="#ce9178" fill-opacity="0.70"/><rect x="17" y="134" width="7" height="1.8" fill="#ce9178" fill-opacity="0.70"/><rect x="25" y="134" width="3" height="1.8" fill="#ce9178" fill-opacity="0.70"/><rect x="29" y="134" width="4" height="1.8" fill="#ce9178" fill-opacity="0.70"/><rect x="34" y="134" width="2" height="1.8" fill="#ce9178" fill-opacity="0.70"/><rect x="37" y="134" width="3" height="1.8" fill="#ce9178" fill-opacity="0.70"/><rect x="40" y="134" width="1" height="1.8" fill="#ce9178" fill-opacity="0.40"/><rect x="42" y="134" width="1" height="1.8" fill="#ce9178" fill-opacity="0.40"/><rect x="43" y="134" width="1" height="1.8" fill="#d4d4d4" fill-opacity="0.40"/><rect x="0" y="136" width="1" height="1.8" fill="#9cdcfe" fill-opacity="0.70"/><rect x="1" y="136" width="1" height="1.8" fill="#9cdcfe" fill-opacity="0.60"/><rect x="2" y="136" width="1" height="1.8" fill="#9cdcfe" fill-opacity="0.70"/><rect x="4" y="136" width="2" height="1.8" fill="#dcdcaa" fill-opacity="0.70"/><rect x="7" y="136" width="1" height="1.8" fill="#9cdcfe" fill-opacity="0.70"/><rect x="8" y="136" width="1" height="1.8" fill="#d4d4d4" fill-opacity="0.40"/><rect x="0" y="138" width="4" height="1.8" fill="#9cdcfe" fill-opacity="0.70"/><rect x="5" y="138" width="2" height="1.8" fill="#dcdcaa" fill-opacity="0.70"/><rect x="8" y="138" width="1" height="1.8" fill="#ce9178" fill-opacity="0.40"/><rect x="9" y="138" width="1" height="1.8" fill="#ce9178" fill-opacity="0.85"/><rect x="10" y="138" width="1" height="1.8" fill="#ce9178" fill-opacity="0.60"/><rect x="11" y="138" width="4" height="1.8" fill="#ce9178" fill-opacity="0.70"/><rect x="16" y="138" width="5" height="1.8" fill="#ce9178" fill-opacity="0.70"/><rect x="22" y="138" width="3" height="1.8" fill="#ce9178" fill-opacity="0.70"/><rect x="26" y="138" width="6" height="1.8" fill="#ce9178" fill-opacity="0.70"/><rect x="33" y="138" width="3" height="1.8" fill="#ce9178" fill-opacity="0.70"/><rect x="37" y="138" width="2" height="1.8" fill="#ce9178" fill-opacity="0.70"/><rect x="40" y="138" width="3" height="1.8" fill="#ce9178" fill-opacity="0.70"/><rect x="43" y="138" width="1" height="1.8" fill="#ce9178" fill-opacity="0.40"/><rect x="45" y="138" width="2" height="1.8" fill="#d7ba7d" fill-opacity="0.70"/><rect x="47" y="138" width="1" height="1.8" fill="#ce9178" fill-opacity="0.40"/><rect x="48" y="138" width="1" height="1.8" fill="#d4d4d4" fill-opacity="0.40"/><rect x="0" y="140" width="3" height="1.8" fill="#c586c0" fill-opacity="0.70"/><rect x="4" y="140" width="1" height="1.8" fill="#da70d6" fill-opacity="0.60"/><rect x="5" y="140" width="1" height="1.8" fill="#9cdcfe" fill-opacity="0.60"/><rect x="7" y="140" width="1" height="1.8" fill="#d4d4d4" fill-opacity="0.40"/><rect x="9" y="140" width="1" height="1.8" fill="#b5cea8" fill-opacity="0.60"/><rect x="10" y="140" width="1" height="1.8" fill="#d4d4d4" fill-opacity="0.40"/><rect x="12" y="140" width="1" height="1.8" fill="#9cdcfe" fill-opacity="0.60"/><rect x="14" y="140" width="1" height="1.8" fill="#d4d4d4" fill-opacity="0.70"/><rect x="15" y="140" width="1" height="1.8" fill="#d4d4d4" fill-opacity="0.40"/><rect x="17" y="140" width="1" height="1.8" fill="#9cdcfe" fill-opacity="0.70"/><rect x="18" y="140" width="1" height="1.8" fill="#d4d4d4" fill-opacity="0.40"/><rect x="20" y="140" width="1" height="1.8" fill="#9cdcfe" fill-opacity="0.60"/><rect x="21" y="140" width="1" height="1.8" fill="#d4d4d4" fill-opacity="0.70"/><rect x="22" y="140" width="1" height="1.8" fill="#d4d4d4" fill-opacity="0.70"/><rect x="23" y="140" width="1" height="1.8" fill="#da70d6" fill-opacity="0.60"/><rect x="0" y="142" width="1" height="1.8" fill="#da70d6" fill-opacity="0.60"/><rect x="0" y="144" width="1" height="1.8" fill="#9cdcfe" fill-opacity="0.70"/><rect x="1" y="144" width="1" height="1.8" fill="#9cdcfe" fill-opacity="0.60"/><rect x="2" y="144" width="1" height="1.8" fill="#9cdcfe" fill-opacity="0.70"/><rect x="4" y="144" width="2" height="1.8" fill="#dcdcaa" fill-opacity="0.70"/><rect x="7" y="144" width="6" height="1.8" fill="#9cdcfe" fill-opacity="0.70"/><rect x="13" y="144" width="1" height="1.8" fill="#d4d4d4" fill-opacity="0.40"/><rect x="0" y="146" width="3" height="1.8" fill="#9cdcfe" fill-opacity="0.70"/><rect x="4" y="146" width="1" height="1.8" fill="#d4d4d4" fill-opacity="0.40"/><rect x="6" y="146" width="3" height="1.8" fill="#9cdcfe" fill-opacity="0.70"/><rect x="10" y="146" width="1" height="1.8" fill="#d4d4d4" fill-opacity="0.70"/><rect x="12" y="146" width="6" height="1.8" fill="#9cdcfe" fill-opacity="0.70"/><rect x="18" y="146" width="1" height="1.8" fill="#d4d4d4" fill-opacity="0.40"/><rect x="0" y="148" width="1" height="1.8" fill="#da70d6" fill-opacity="0.60"/><rect x="0" y="150" width="4" height="1.8" fill="#9cdcfe" fill-opacity="0.70"/><rect x="5" y="150" width="2" height="1.8" fill="#dcdcaa" fill-opacity="0.70"/><rect x="8" y="150" width="1" height="1.8" fill="#ce9178" fill-opacity="0.40"/><rect x="9" y="150" width="2" height="1.8" fill="#d7ba7d" fill-opacity="0.70"/><rect x="12" y="150" width="1" height="1.8" fill="#ce9178" fill-opacity="0.85"/><rect x="13" y="150" width="2" height="1.8" fill="#ce9178" fill-opacity="0.70"/><rect x="16" y="150" width="2" height="1.8" fill="#ce9178" fill-opacity="0.70"/><rect x="19" y="150" width="3" height="1.8" fill="#ce9178" fill-opacity="0.70"/><rect x="23" y="150" width="7" height="1.8" fill="#ce9178" fill-opacity="0.70"/><rect x="31" y="150" width="1" height="1.8" fill="#ce9178" fill-opacity="0.40"/><rect x="33" y="150" width="1" height="1.8" fill="#ce9178" fill-opacity="0.40"/><rect x="34" y="150" width="2" height="1.8" fill="#dcdcaa" fill-opacity="0.70"/><rect x="37" y="150" width="3" height="1.8" fill="#9cdcfe" fill-opacity="0.70"/><rect x="40" y="150" width="1" height="1.8" fill="#d4d4d4" fill-opacity="0.40"/><rect x="0" y="152" width="1" height="1.8" fill="#ffd700" fill-opacity="0.60"/><rect x="0" y="154" width="2" height="1.8" fill="#569cd6" fill-opacity="0.70"/><rect x="2" y="154" width="1" height="1.8" fill="#569cd6" fill-opacity="0.60"/><rect x="3" y="154" width="1" height="1.8" fill="#569cd6" fill-opacity="0.70"/><rect x="5" y="154" width="3" height="1.8" fill="#dcdcaa" fill-opacity="0.70"/><rect x="8" y="154" width="1" height="1.8" fill="#ffd700" fill-opacity="0.60"/><rect x="9" y="154" width="1" height="1.8" fill="#ffd700" fill-opacity="0.60"/><rect x="0" y="156" width="1" height="1.8" fill="#ffd700" fill-opacity="0.60"/><rect x="0" y="158" width="1" height="1.8" fill="#569cd6" fill-opacity="0.60"/><rect x="1" y="158" width="2" height="1.8" fill="#569cd6" fill-opacity="0.70"/><rect x="4" y="158" width="3" height="1.8" fill="#9cdcfe" fill-opacity="0.70"/><rect x="7" y="158" width="1" height="1.8" fill="#9cdcfe" fill-opacity="0.60"/><rect x="8" y="158" width="1" height="1.8" fill="#d4d4d4" fill-opacity="0.40"/><rect x="10" y="158" width="4" height="1.8" fill="#9cdcfe" fill-opacity="0.70"/><rect x="14" y="158" width="1" height="1.8" fill="#d4d4d4" fill-opacity="0.40"/><rect x="16" y="158" width="1" height="1.8" fill="#9cdcfe" fill-opacity="0.70"/><rect x="17" y="158" width="1" height="1.8" fill="#d4d4d4" fill-opacity="0.40"/><rect x="0" y="160" width="4" height="1.8" fill="#9cdcfe" fill-opacity="0.70"/><rect x="5" y="160" width="2" height="1.8" fill="#dcdcaa" fill-opacity="0.70"/><rect x="7" y="160" width="1" height="1.8" fill="#ce9178" fill-opacity="0.40"/><rect x="9" y="160" width="2" height="1.8" fill="#d7ba7d" fill-opacity="0.70"/><rect x="12" y="160" width="1" height="1.8" fill="#ce9178" fill-opacity="0.85"/><rect x="13" y="160" width="4" height="1.8" fill="#ce9178" fill-opacity="0.70"/><rect x="18" y="160" width="3" height="1.8" fill="#ce9178" fill-opacity="0.70"/><rect x="22" y="160" width="1" height="1.8" fill="#ce9178" fill-opacity="0.85"/><rect x="23" y="160" width="1" height="1.8" fill="#ce9178" fill-opacity="0.60"/><rect x="24" y="160" width="3" height="1.8" fill="#ce9178" fill-opacity="0.70"/><rect x="28" y="160" width="6" height="1.8" fill="#ce9178" fill-opacity="0.70"/><rect x="35" y="160" width="1" height="1.8" fill="#ce9178" fill-opacity="0.40"/><rect x="37" y="160" width="1" height="1.8" fill="#ce9178" fill-opacity="0.40"/><rect x="38" y="160" width="1" height="1.8" fill="#d4d4d4" fill-opacity="0.40"/><rect x="0" y="162" width="1" height="1.8" fill="#9cdcfe" fill-opacity="0.70"/><rect x="1" y="162" width="1" height="1.8" fill="#9cdcfe" fill-opacity="0.60"/><rect x="2" y="162" width="1" height="1.8" fill="#9cdcfe" fill-opacity="0.70"/><rect x="4" y="162" width="2" height="1.8" fill="#dcdcaa" fill-opacity="0.70"/><rect x="7" y="162" width="3" height="1.8" fill="#9cdcfe" fill-opacity="0.70"/><rect x="10" y="162" width="1" height="1.8" fill="#9cdcfe" fill-opacity="0.60"/><rect x="11" y="162" width="1" height="1.8" fill="#d4d4d4" fill-opacity="0.40"/><rect x="0" y="164" width="4" height="1.8" fill="#9cdcfe" fill-opacity="0.70"/><rect x="5" y="164" width="2" height="1.8" fill="#dcdcaa" fill-opacity="0.70"/><rect x="8" y="164" width="1" height="1.8" fill="#ce9178" fill-opacity="0.40"/><rect x="9" y="164" width="2" height="1.8" fill="#d7ba7d" fill-opacity="0.70"/><rect x="12" y="164" width="1" height="1.8" fill="#ce9178" fill-opacity="0.85"/><rect x="13" y="164" width="4" height="1.8" fill="#ce9178" fill-opacity="0.70"/><rect x="18" y="164" width="3" height="1.8" fill="#ce9178" fill-opacity="0.70"/><rect x="22" y="164" width="1" height="1.8" fill="#ce9178" fill-opacity="0.85"/><rect x="23" y="164" width="5" height="1.8" fill="#ce9178" fill-opacity="0.70"/><rect x="29" y="164" width="6" height="1.8" fill="#ce9178" fill-opacity="0.70"/><rect x="36" y="164" width="1" height="1.8" fill="#ce9178" fill-opacity="0.40"/><rect x="38" y="164" width="1" height="1.8" fill="#ce9178" fill-opacity="0.40"/><rect x="39" y="164" width="1" height="1.8" fill="#d4d4d4" fill-opacity="0.40"/><rect x="0" y="166" width="1" height="1.8" fill="#9cdcfe" fill-opacity="0.70"/><rect x="1" y="166" width="1" height="1.8" fill="#9cdcfe" fill-opacity="0.60"/><rect x="2" y="166" width="1" height="1.8" fill="#9cdcfe" fill-opacity="0.70"/><rect x="4" y="166" width="2" height="1.8" fill="#dcdcaa" fill-opacity="0.70"/><rect x="7" y="166" width="4" height="1.8" fill="#9cdcfe" fill-opacity="0.70"/><rect x="11" y="166" width="1" height="1.8" fill="#d4d4d4" fill-opacity="0.40"/><rect x="0" y="168" width="1" height="1.8" fill="#9cdcfe" fill-opacity="0.70"/><rect x="2" y="168" width="1" height="1.8" fill="#d4d4d4" fill-opacity="0.40"/><rect x="4" y="168" width="3" height="1.8" fill="#9cdcfe" fill-opacity="0.70"/><rect x="7" y="168" width="1" height="1.8" fill="#9cdcfe" fill-opacity="0.60"/><rect x="9" y="168" width="1" height="1.8" fill="#d4d4d4" fill-opacity="0.40"/><rect x="11" y="168" width="4" height="1.8" fill="#9cdcfe" fill-opacity="0.70"/><rect x="15" y="168" width="1" height="1.8" fill="#d4d4d4" fill-opacity="0.40"/><rect x="0" y="170" width="4" height="1.8" fill="#9cdcfe" fill-opacity="0.70"/><rect x="5" y="170" width="2" height="1.8" fill="#dcdcaa" fill-opacity="0.70"/><rect x="7" y="170" width="1" height="1.8" fill="#ce9178" fill-opacity="0.40"/><rect x="8" y="170" width="2" height="1.8" fill="#d7ba7d" fill-opacity="0.70"/><rect x="11" y="170" width="1" height="1.8" fill="#ce9178" fill-opacity="0.85"/><rect x="12" y="170" width="7" height="1.8" fill="#ce9178" fill-opacity="0.70"/><rect x="19" y="170" width="1" height="1.8" fill="#ce9178" fill-opacity="0.60"/><rect x="20" y="170" width="2" height="1.8" fill="#ce9178" fill-opacity="0.70"/><rect x="23" y="170" width="2" height="1.8" fill="#ce9178" fill-opacity="0.70"/><rect x="26" y="170" width="3" height="1.8" fill="#ce9178" fill-opacity="0.70"/><rect x="30" y="170" width="6" height="1.8" fill="#ce9178" fill-opacity="0.70"/><rect x="37" y="170" width="1" height="1.8" fill="#ce9178" fill-opacity="0.40"/><rect x="39" y="170" width="1" height="1.8" fill="#ce9178" fill-opacity="0.40"/><rect x="41" y="170" width="2" height="1.8" fill="#dcdcaa" fill-opacity="0.70"/><rect x="44" y="170" width="1" height="1.8" fill="#9cdcfe" fill-opacity="0.70"/><rect x="45" y="170" width="1" height="1.8" fill="#d4d4d4" fill-opacity="0.40"/><rect x="0" y="172" width="1" height="1.8" fill="#ffd700" fill-opacity="0.60"/><rect x="0" y="174" width="2" height="1.8" fill="#569cd6" fill-opacity="0.70"/><rect x="2" y="174" width="1" height="1.8" fill="#569cd6" fill-opacity="0.60"/><rect x="3" y="174" width="1" height="1.8" fill="#569cd6" fill-opacity="0.70"/><rect x="5" y="174" width="2" height="1.8" fill="#dcdcaa" fill-opacity="0.70"/><rect x="7" y="174" width="1" height="1.8" fill="#dcdcaa" fill-opacity="0.60"/><rect x="8" y="174" width="1" height="1.8" fill="#dcdcaa" fill-opacity="0.70"/><rect x="9" y="174" width="1" height="1.8" fill="#dcdcaa" fill-opacity="0.60"/><rect x="10" y="174" width="1" height="1.8" fill="#ffd700" fill-opacity="0.60"/><rect x="11" y="174" width="1" height="1.8" fill="#ffd700" fill-opacity="0.60"/><rect x="0" y="176" width="1" height="1.8" fill="#ffd700" fill-opacity="0.60"/><rect x="0" y="178" width="1" height="1.8" fill="#569cd6" fill-opacity="0.60"/><rect x="1" y="178" width="2" height="1.8" fill="#569cd6" fill-opacity="0.70"/><rect x="4" y="178" width="3" height="1.8" fill="#9cdcfe" fill-opacity="0.70"/><rect x="7" y="178" width="1" height="1.8" fill="#9cdcfe" fill-opacity="0.60"/><rect x="8" y="178" width="1" height="1.8" fill="#d4d4d4" fill-opacity="0.40"/><rect x="10" y="178" width="4" height="1.8" fill="#9cdcfe" fill-opacity="0.70"/><rect x="14" y="178" width="1" height="1.8" fill="#d4d4d4" fill-opacity="0.40"/><rect x="16" y="178" width="2" height="1.8" fill="#9cdcfe" fill-opacity="0.70"/><rect x="18" y="178" width="1" height="1.8" fill="#9cdcfe" fill-opacity="0.60"/><rect x="19" y="178" width="1" height="1.8" fill="#d4d4d4" fill-opacity="0.40"/><rect x="0" y="180" width="4" height="1.8" fill="#9cdcfe" fill-opacity="0.70"/><rect x="5" y="180" width="2" height="1.8" fill="#dcdcaa" fill-opacity="0.70"/><rect x="7" y="180" width="1" height="1.8" fill="#ce9178" fill-opacity="0.40"/><rect x="9" y="180" width="2" height="1.8" fill="#d7ba7d" fill-opacity="0.70"/><rect x="12" y="180" width="1" height="1.8" fill="#ce9178" fill-opacity="0.85"/><rect x="13" y="180" width="4" height="1.8" fill="#ce9178" fill-opacity="0.70"/><rect x="18" y="180" width="3" height="1.8" fill="#ce9178" fill-opacity="0.70"/><rect x="22" y="180" width="1" height="1.8" fill="#ce9178" fill-opacity="0.85"/><rect x="23" y="180" width="1" height="1.8" fill="#ce9178" fill-opacity="0.60"/><rect x="24" y="180" width="3" height="1.8" fill="#ce9178" fill-opacity="0.70"/><rect x="28" y="180" width="6" height="1.8" fill="#ce9178" fill-opacity="0.70"/><rect x="35" y="180" width="1" height="1.8" fill="#ce9178" fill-opacity="0.40"/><rect x="37" y="180" width="1" height="1.8" fill="#ce9178" fill-opacity="0.40"/><rect x="38" y="180" width="1" height="1.8" fill="#d4d4d4" fill-opacity="0.40"/><rect x="0" y="182" width="1" height="1.8" fill="#9cdcfe" fill-opacity="0.70"/><rect x="1" y="182" width="1" height="1.8" fill="#9cdcfe" fill-opacity="0.60"/><rect x="2" y="182" width="1" height="1.8" fill="#9cdcfe" fill-opacity="0.70"/><rect x="4" y="182" width="2" height="1.8" fill="#dcdcaa" fill-opacity="0.70"/><rect x="7" y="182" width="3" height="1.8" fill="#9cdcfe" fill-opacity="0.70"/><rect x="10" y="182" width="1" height="1.8" fill="#9cdcfe" fill-opacity="0.60"/><rect x="11" y="182" width="1" height="1.8" fill="#d4d4d4" fill-opacity="0.40"/><rect x="0" y="184" width="4" height="1.8" fill="#9cdcfe" fill-opacity="0.70"/><rect x="5" y="184" width="2" height="1.8" fill="#dcdcaa" fill-opacity="0.70"/><rect x="8" y="184" width="1" height="1.8" fill="#ce9178" fill-opacity="0.40"/><rect x="9" y="184" width="2" height="1.8" fill="#d7ba7d" fill-opacity="0.70"/><rect x="12" y="184" width="1" height="1.8" fill="#ce9178" fill-opacity="0.85"/><rect x="13" y="184" width="4" height="1.8" fill="#ce9178" fill-opacity="0.70"/><rect x="18" y="184" width="3" height="1.8" fill="#ce9178" fill-opacity="0.70"/><rect x="22" y="184" width="1" height="1.8" fill="#ce9178" fill-opacity="0.85"/><rect x="23" y="184" width="5" height="1.8" fill="#ce9178" fill-opacity="0.70"/><rect x="29" y="184" width="6" height="1.8" fill="#ce9178" fill-opacity="0.70"/><rect x="36" y="184" width="1" height="1.8" fill="#ce9178" fill-opacity="0.40"/><rect x="38" y="184" width="1" height="1.8" fill="#ce9178" fill-opacity="0.40"/><rect x="39" y="184" width="1" height="1.8" fill="#d4d4d4" fill-opacity="0.40"/><rect x="0" y="186" width="1" height="1.8" fill="#9cdcfe" fill-opacity="0.70"/><rect x="1" y="186" width="1" height="1.8" fill="#9cdcfe" fill-opacity="0.60"/><rect x="2" y="186" width="1" height="1.8" fill="#9cdcfe" fill-opacity="0.70"/><rect x="4" y="186" width="2" height="1.8" fill="#dcdcaa" fill-opacity="0.70"/><rect x="7" y="186" width="4" height="1.8" fill="#9cdcfe" fill-opacity="0.70"/><rect x="11" y="186" width="1" height="1.8" fill="#d4d4d4" fill-opacity="0.40"/><rect x="0" y="188" width="2" height="1.8" fill="#9cdcfe" fill-opacity="0.70"/><rect x="2" y="188" width="1" height="1.8" fill="#9cdcfe" fill-opacity="0.60"/><rect x="4" y="188" width="1" height="1.8" fill="#d4d4d4" fill-opacity="0.40"/><rect x="6" y="188" width="3" height="1.8" fill="#9cdcfe" fill-opacity="0.70"/><rect x="9" y="188" width="1" height="1.8" fill="#9cdcfe" fill-opacity="0.60"/><rect x="11" y="188" width="1" height="1.8" fill="#d4d4d4" fill-opacity="0.70"/><rect x="13" y="188" width="4" height="1.8" fill="#9cdcfe" fill-opacity="0.70"/><rect x="17" y="188" width="1" height="1.8" fill="#d4d4d4" fill-opacity="0.40"/><rect x="0" y="190" width="4" height="1.8" fill="#9cdcfe" fill-opacity="0.70"/><rect x="5" y="190" width="2" height="1.8" fill="#dcdcaa" fill-opacity="0.70"/><rect x="7" y="190" width="1" height="1.8" fill="#ce9178" fill-opacity="0.40"/><rect x="8" y="190" width="2" height="1.8" fill="#d7ba7d" fill-opacity="0.70"/><rect x="11" y="190" width="1" height="1.8" fill="#ce9178" fill-opacity="0.85"/><rect x="12" y="190" width="1" height="1.8" fill="#ce9178" fill-opacity="0.70"/><rect x="13" y="190" width="1" height="1.8" fill="#ce9178" fill-opacity="0.60"/><rect x="14" y="190" width="1" height="1.8" fill="#ce9178" fill-opacity="0.70"/><rect x="15" y="190" width="1" height="1.8" fill="#ce9178" fill-opacity="0.60"/><rect x="16" y="190" width="1" height="1.8" fill="#ce9178" fill-opacity="0.70"/><rect x="17" y="190" width="2" height="1.8" fill="#ce9178" fill-opacity="0.60"/><rect x="19" y="190" width="3" height="1.8" fill="#ce9178" fill-opacity="0.70"/><rect x="22" y="190" width="1" height="1.8" fill="#ce9178" fill-opacity="0.60"/><rect x="23" y="190" width="2" height="1.8" fill="#ce9178" fill-opacity="0.70"/><rect x="26" y="190" width="2" height="1.8" fill="#ce9178" fill-opacity="0.70"/><rect x="29" y="190" width="3" height="1.8" fill="#ce9178" fill-opacity="0.70"/><rect x="33" y="190" width="7" height="1.8" fill="#ce9178" fill-opacity="0.70"/><rect x="41" y="190" width="1" height="1.8" fill="#ce9178" fill-opacity="0.40"/><rect x="43" y="190" width="1" height="1.8" fill="#ce9178" fill-opacity="0.40"/><rect x="45" y="190" width="2" height="1.8" fill="#dcdcaa" fill-opacity="0.70"/><rect x="48" y="190" width="2" height="1.8" fill="#9cdcfe" fill-opacity="0.70"/><rect x="50" y="190" width="1" height="1.8" fill="#9cdcfe" fill-opacity="0.60"/><rect x="51" y="190" width="1" height="1.8" fill="#d4d4d4" fill-opacity="0.40"/><rect x="0" y="192" width="1" height="1.8" fill="#ffd700" fill-opacity="0.60"/><rect x="0" y="194" width="2" height="1.8" fill="#569cd6" fill-opacity="0.70"/><rect x="2" y="194" width="1" height="1.8" fill="#569cd6" fill-opacity="0.60"/><rect x="3" y="194" width="1" height="1.8" fill="#569cd6" fill-opacity="0.70"/><rect x="5" y="194" width="1" height="1.8" fill="#dcdcaa" fill-opacity="0.70"/><rect x="6" y="194" width="1" height="1.8" fill="#dcdcaa" fill-opacity="0.60"/><rect x="7" y="194" width="1" height="1.8" fill="#dcdcaa" fill-opacity="0.70"/><rect x="8" y="194" width="1" height="1.8" fill="#dcdcaa" fill-opacity="0.60"/><rect x="9" y="194" width="1" height="1.8" fill="#dcdcaa" fill-opacity="0.70"/><rect x="10" y="194" width="1" height="1.8" fill="#dcdcaa" fill-opacity="0.60"/><rect x="11" y="194" width="2" height="1.8" fill="#dcdcaa" fill-opacity="0.70"/><rect x="13" y="194" width="1" height="1.8" fill="#ffd700" fill-opacity="0.60"/><rect x="14" y="194" width="1" height="1.8" fill="#ffd700" fill-opacity="0.60"/><rect x="0" y="196" width="1" height="1.8" fill="#ffd700" fill-opacity="0.60"/><rect x="0" y="198" width="1" height="1.8" fill="#569cd6" fill-opacity="0.60"/><rect x="1" y="198" width="2" height="1.8" fill="#569cd6" fill-opacity="0.70"/><rect x="4" y="198" width="3" height="1.8" fill="#9cdcfe" fill-opacity="0.70"/><rect x="7" y="198" width="1" height="1.8" fill="#9cdcfe" fill-opacity="0.60"/><rect x="8" y="198" width="1" height="1.8" fill="#d4d4d4" fill-opacity="0.40"/><rect x="10" y="198" width="4" height="1.8" fill="#9cdcfe" fill-opacity="0.70"/><rect x="14" y="198" width="1" height="1.8" fill="#d4d4d4" fill-opacity="0.40"/><rect x="16" y="198" width="1" height="1.8" fill="#9cdcfe" fill-opacity="0.70"/><rect x="17" y="198" width="1" height="1.8" fill="#9cdcfe" fill-opacity="0.60"/><rect x="18" y="198" width="1" height="1.8" fill="#9cdcfe" fill-opacity="0.70"/><rect x="20" y="198" width="1" height="1.8" fill="#d4d4d4" fill-opacity="0.40"/><rect x="22" y="198" width="1" height="1.8" fill="#b5cea8" fill-opacity="0.70"/><rect x="23" y="198" width="1" height="1.8" fill="#d4d4d4" fill-opacity="0.40"/><rect x="0" y="200" width="4" height="1.8" fill="#9cdcfe" fill-opacity="0.70"/><rect x="5" y="200" width="2" height="1.8" fill="#dcdcaa" fill-opacity="0.70"/><rect x="7" y="200" width="1" height="1.8" fill="#ce9178" fill-opacity="0.40"/><rect x="9" y="200" width="2" height="1.8" fill="#d7ba7d" fill-opacity="0.70"/><rect x="12" y="200" width="1" height="1.8" fill="#ce9178" fill-opacity="0.85"/><rect x="13" y="200" width="4" height="1.8" fill="#ce9178" fill-opacity="0.70"/><rect x="18" y="200" width="3" height="1.8" fill="#ce9178" fill-opacity="0.70"/><rect x="22" y="200" width="1" height="1.8" fill="#ce9178" fill-opacity="0.85"/><rect x="23" y="200" width="1" height="1.8" fill="#ce9178" fill-opacity="0.60"/><rect x="24" y="200" width="3" height="1.8" fill="#ce9178" fill-opacity="0.70"/><rect x="28" y="200" width="6" height="1.8" fill="#ce9178" fill-opacity="0.70"/><rect x="35" y="200" width="1" height="1.8" fill="#ce9178" fill-opacity="0.40"/><rect x="37" y="200" width="1" height="1.8" fill="#ce9178" fill-opacity="0.40"/><rect x="38" y="200" width="1" height="1.8" fill="#d4d4d4" fill-opacity="0.40"/><rect x="0" y="202" width="1" height="1.8" fill="#9cdcfe" fill-opacity="0.70"/><rect x="1" y="202" width="1" height="1.8" fill="#9cdcfe" fill-opacity="0.60"/><rect x="2" y="202" width="1" height="1.8" fill="#9cdcfe" fill-opacity="0.70"/><rect x="4" y="202" width="2" height="1.8" fill="#dcdcaa" fill-opacity="0.70"/><rect x="7" y="202" width="3" height="1.8" fill="#9cdcfe" fill-opacity="0.70"/><rect x="10" y="202" width="1" height="1.8" fill="#9cdcfe" fill-opacity="0.60"/><rect x="11" y="202" width="1" height="1.8" fill="#d4d4d4" fill-opacity="0.40"/><rect x="0" y="204" width="4" height="1.8" fill="#9cdcfe" fill-opacity="0.70"/><rect x="5" y="204" width="2" height="1.8" fill="#dcdcaa" fill-opacity="0.70"/><rect x="8" y="204" width="1" height="1.8" fill="#ce9178" fill-opacity="0.40"/><rect x="9" y="204" width="2" height="1.8" fill="#d7ba7d" fill-opacity="0.70"/><rect x="12" y="204" width="1" height="1.8" fill="#ce9178" fill-opacity="0.85"/><rect x="13" y="204" width="4" height="1.8" fill="#ce9178" fill-opacity="0.70"/><rect x="18" y="204" width="3" height="1.8" fill="#ce9178" fill-opacity="0.70"/><rect x="22" y="204" width="1" height="1.8" fill="#ce9178" fill-opacity="0.85"/><rect x="23" y="204" width="5" height="1.8" fill="#ce9178" fill-opacity="0.70"/><rect x="29" y="204" width="6" height="1.8" fill="#ce9178" fill-opacity="0.70"/><rect x="36" y="204" width="1" height="1.8" fill="#ce9178" fill-opacity="0.40"/><rect x="38" y="204" width="1" height="1.8" fill="#ce9178" fill-opacity="0.40"/><rect x="39" y="204" width="1" height="1.8" fill="#d4d4d4" fill-opacity="0.40"/><rect x="0" y="206" width="1" height="1.8" fill="#9cdcfe" fill-opacity="0.70"/><rect x="1" y="206" width="1" height="1.8" fill="#9cdcfe" fill-opacity="0.60"/><rect x="2" y="206" width="1" height="1.8" fill="#9cdcfe" fill-opacity="0.70"/><rect x="4" y="206" width="2" height="1.8" fill="#dcdcaa" fill-opacity="0.70"/><rect x="7" y="206" width="4" height="1.8" fill="#9cdcfe" fill-opacity="0.70"/><rect x="11" y="206" width="1" height="1.8" fill="#d4d4d4" fill-opacity="0.40"/><rect x="0" y="208" width="2" height="1.8" fill="#c586c0" fill-opacity="0.70"/><rect x="2" y="208" width="2" height="1.8" fill="#c586c0" fill-opacity="0.60"/><rect x="4" y="208" width="1" height="1.8" fill="#c586c0" fill-opacity="0.70"/><rect x="6" y="208" width="1" height="1.8" fill="#da70d6" fill-opacity="0.60"/><rect x="7" y="208" width="4" height="1.8" fill="#9cdcfe" fill-opacity="0.70"/><rect x="12" y="208" width="1" height="1.8" fill="#d4d4d4" fill-opacity="0.40"/><rect x="13" y="208" width="1" height="1.8" fill="#d4d4d4" fill-opacity="0.40"/><rect x="15" y="208" width="1" height="1.8" fill="#b5cea8" fill-opacity="0.70"/><rect x="16" y="208" width="1" height="1.8" fill="#da70d6" fill-opacity="0.60"/><rect x="0" y="210" width="1" height="1.8" fill="#da70d6" fill-opacity="0.60"/><rect x="6" y="212" width="4" height="1.8" fill="#9cdcfe" fill-opacity="0.70"/><rect x="11" y="212" width="2" height="1.8" fill="#dcdcaa" fill-opacity="0.70"/><rect x="14" y="212" width="1" height="1.8" fill="#ce9178" fill-opacity="0.40"/><rect x="15" y="212" width="2" height="1.8" fill="#d7ba7d" fill-opacity="0.70"/><rect x="18" y="212" width="1" height="1.8" fill="#ce9178" fill-opacity="0.85"/><rect x="19" y="212" width="1" height="1.8" fill="#ce9178" fill-opacity="0.60"/><rect x="20" y="212" width="1" height="1.8" fill="#ce9178" fill-opacity="0.70"/><rect x="21" y="212" width="1" height="1.8" fill="#ce9178" fill-opacity="0.60"/><rect x="22" y="212" width="3" height="1.8" fill="#ce9178" fill-opacity="0.70"/><rect x="26" y="212" width="5" height="1.8" fill="#ce9178" fill-opacity="0.70"/><rect x="32" y="212" width="2" height="1.8" fill="#ce9178" fill-opacity="0.70"/><rect x="35" y="212" width="4" height="1.8" fill="#ce9178" fill-opacity="0.70"/><rect x="39" y="212" width="1" height="1.8" fill="#ce9178" fill-opacity="0.40"/><rect x="11" y="214" width="1" height="1.8" fill="#ce9178" fill-opacity="0.40"/><rect x="12" y="214" width="2" height="1.8" fill="#d7ba7d" fill-opacity="0.70"/><rect x="15" y="214" width="1" height="1.8" fill="#ce9178" fill-opacity="0.85"/><rect x="16" y="214" width="1" height="1.8" fill="#ce9178" fill-opacity="0.60"/><rect x="17" y="214" width="4" height="1.8" fill="#ce9178" fill-opacity="0.70"/><rect x="22" y="214" width="5" height="1.8" fill="#ce9178" fill-opacity="0.70"/><rect x="28" y="214" width="3" height="1.8" fill="#ce9178" fill-opacity="0.70"/><rect x="32" y="214" width="1" height="1.8" fill="#ce9178" fill-opacity="0.70"/><rect x="33" y="214" width="1" height="1.8" fill="#ce9178" fill-opacity="0.60"/><rect x="34" y="214" width="1" height="1.8" fill="#ce9178" fill-opacity="0.70"/><rect x="35" y="214" width="1" height="1.8" fill="#ce9178" fill-opacity="0.60"/><rect x="36" y="214" width="3" height="1.8" fill="#ce9178" fill-opacity="0.70"/><rect x="40" y="214" width="4" height="1.8" fill="#ce9178" fill-opacity="0.70"/><rect x="45" y="214" width="3" height="1.8" fill="#ce9178" fill-opacity="0.70"/><rect x="48" y="214" width="1" height="1.8" fill="#ce9178" fill-opacity="0.60"/><rect x="49" y="214" width="1" height="1.8" fill="#ce9178" fill-opacity="0.70"/><rect x="50" y="214" width="1" height="1.8" fill="#ce9178" fill-opacity="0.40"/><rect x="52" y="214" width="1" height="1.8" fill="#ce9178" fill-opacity="0.40"/><rect x="53" y="214" width="1" height="1.8" fill="#d4d4d4" fill-opacity="0.40"/><rect x="11" y="216" width="1" height="1.8" fill="#9cdcfe" fill-opacity="0.70"/><rect x="12" y="216" width="1" height="1.8" fill="#9cdcfe" fill-opacity="0.60"/><rect x="13" y="216" width="1" height="1.8" fill="#9cdcfe" fill-opacity="0.70"/><rect x="15" y="216" width="2" height="1.8" fill="#dcdcaa" fill-opacity="0.70"/><rect x="18" y="216" width="4" height="1.8" fill="#9cdcfe" fill-opacity="0.70"/><rect x="22" y="216" width="1" height="1.8" fill="#d4d4d4" fill-opacity="0.40"/><rect x="0" y="218" width="1" height="1.8" fill="#da70d6" fill-opacity="0.60"/><rect x="0" y="220" width="1" height="1.8" fill="#9cdcfe" fill-opacity="0.70"/><rect x="1" y="220" width="1" height="1.8" fill="#9cdcfe" fill-opacity="0.60"/><rect x="2" y="220" width="1" height="1.8" fill="#9cdcfe" fill-opacity="0.70"/><rect x="4" y="220" width="1" height="1.8" fill="#d4d4d4" fill-opacity="0.40"/><rect x="6" y="220" width="3" height="1.8" fill="#9cdcfe" fill-opacity="0.70"/><rect x="9" y="220" width="1" height="1.8" fill="#9cdcfe" fill-opacity="0.60"/><rect x="11" y="220" width="1" height="1.8" fill="#d4d4d4" fill-opacity="0.70"/><rect x="13" y="220" width="4" height="1.8" fill="#9cdcfe" fill-opacity="0.70"/><rect x="17" y="220" width="1" height="1.8" fill="#d4d4d4" fill-opacity="0.40"/><rect x="0" y="222" width="4" height="1.8" fill="#9cdcfe" fill-opacity="0.70"/><rect x="5" y="222" width="2" height="1.8" fill="#dcdcaa" fill-opacity="0.70"/><rect x="7" y="222" width="1" height="1.8" fill="#ce9178" fill-opacity="0.40"/><rect x="8" y="222" width="2" height="1.8" fill="#d7ba7d" fill-opacity="0.70"/><rect x="11" y="222" width="1" height="1.8" fill="#ce9178" fill-opacity="0.85"/><rect x="12" y="222" width="1" height="1.8" fill="#ce9178" fill-opacity="0.60"/><rect x="13" y="222" width="1" height="1.8" fill="#ce9178" fill-opacity="0.70"/><rect x="14" y="222" width="1" height="1.8" fill="#ce9178" fill-opacity="0.60"/><rect x="15" y="222" width="1" height="1.8" fill="#ce9178" fill-opacity="0.70"/><rect x="16" y="222" width="1" height="1.8" fill="#ce9178" fill-opacity="0.60"/><rect x="17" y="222" width="2" height="1.8" fill="#ce9178" fill-opacity="0.70"/><rect x="20" y="222" width="2" height="1.8" fill="#ce9178" fill-opacity="0.70"/><rect x="23" y="222" width="3" height="1.8" fill="#ce9178" fill-opacity="0.70"/><rect x="27" y="222" width="7" height="1.8" fill="#ce9178" fill-opacity="0.70"/><rect x="35" y="222" width="1" height="1.8" fill="#ce9178" fill-opacity="0.40"/><rect x="37" y="222" width="1" height="1.8" fill="#ce9178" fill-opacity="0.40"/><rect x="39" y="222" width="2" height="1.8" fill="#dcdcaa" fill-opacity="0.70"/><rect x="42" y="222" width="1" height="1.8" fill="#9cdcfe" fill-opacity="0.70"/><rect x="43" y="222" width="1" height="1.8" fill="#9cdcfe" fill-opacity="0.60"/><rect x="44" y="222" width="1" height="1.8" fill="#9cdcfe" fill-opacity="0.70"/><rect x="45" y="222" width="1" height="1.8" fill="#d4d4d4" fill-opacity="0.40"/><rect x="0" y="224" width="1" height="1.8" fill="#ffd700" fill-opacity="0.60"/><rect x="0" y="226" width="2" height="1.8" fill="#569cd6" fill-opacity="0.70"/><rect x="2" y="226" width="1" height="1.8" fill="#569cd6" fill-opacity="0.60"/><rect x="3" y="226" width="1" height="1.8" fill="#569cd6" fill-opacity="0.70"/><rect x="5" y="226" width="3" height="1.8" fill="#dcdcaa" fill-opacity="0.70"/><rect x="8" y="226" width="1" height="1.8" fill="#ffd700" fill-opacity="0.60"/><rect x="9" y="226" width="1" height="1.8" fill="#ffd700" fill-opacity="0.60"/><rect x="0" y="228" width="1" height="1.8" fill="#ffd700" fill-opacity="0.60"/><rect x="0" y="230" width="1" height="1.8" fill="#569cd6" fill-opacity="0.60"/><rect x="1" y="230" width="2" height="1.8" fill="#569cd6" fill-opacity="0.70"/><rect x="4" y="230" width="3" height="1.8" fill="#9cdcfe" fill-opacity="0.70"/><rect x="7" y="230" width="1" height="1.8" fill="#9cdcfe" fill-opacity="0.60"/><rect x="8" y="230" width="1" height="1.8" fill="#d4d4d4" fill-opacity="0.40"/><rect x="0" y="232" width="1" height="1.8" fill="#569cd6" fill-opacity="0.70"/><rect x="1" y="232" width="1" height="1.8" fill="#569cd6" fill-opacity="0.60"/><rect x="2" y="232" width="3" height="1.8" fill="#569cd6" fill-opacity="0.70"/><rect x="6" y="232" width="2" height="1.8" fill="#9cdcfe" fill-opacity="0.70"/><rect x="8" y="232" width="1" height="1.8" fill="#d4d4d4" fill-opacity="0.40"/><rect x="0" y="234" width="4" height="1.8" fill="#9cdcfe" fill-opacity="0.70"/><rect x="5" y="234" width="2" height="1.8" fill="#dcdcaa" fill-opacity="0.70"/><rect x="7" y="234" width="1" height="1.8" fill="#ce9178" fill-opacity="0.40"/><rect x="9" y="234" width="2" height="1.8" fill="#d7ba7d" fill-opacity="0.70"/><rect x="12" y="234" width="1" height="1.8" fill="#ce9178" fill-opacity="0.85"/><rect x="13" y="234" width="4" height="1.8" fill="#ce9178" fill-opacity="0.70"/><rect x="18" y="234" width="1" height="1.8" fill="#ce9178" fill-opacity="0.70"/><rect x="20" y="234" width="6" height="1.8" fill="#ce9178" fill-opacity="0.70"/><rect x="27" y="234" width="2" height="1.8" fill="#ce9178" fill-opacity="0.70"/><rect x="30" y="234" width="1" height="1.8" fill="#ce9178" fill-opacity="0.70"/><rect x="31" y="234" width="1" height="1.8" fill="#ce9178" fill-opacity="0.60"/><rect x="32" y="234" width="2" height="1.8" fill="#ce9178" fill-opacity="0.70"/><rect x="35" y="234" width="3" height="1.8" fill="#ce9178" fill-opacity="0.70"/><rect x="39" y="234" width="1" height="1.8" fill="#ce9178" fill-opacity="0.85"/><rect x="40" y="234" width="5" height="1.8" fill="#ce9178" fill-opacity="0.70"/><rect x="45" y="234" width="1" height="1.8" fill="#ce9178" fill-opacity="0.40"/><rect x="47" y="234" width="1" height="1.8" fill="#ce9178" fill-opacity="0.40"/><rect x="48" y="234" width="1" height="1.8" fill="#d4d4d4" fill-opacity="0.40"/><rect x="0" y="236" width="1" height="1.8" fill="#9cdcfe" fill-opacity="0.70"/><rect x="1" y="236" width="1" height="1.8" fill="#9cdcfe" fill-opacity="0.60"/><rect x="2" y="236" width="1" height="1.8" fill="#9cdcfe" fill-opacity="0.70"/><rect x="4" y="236" width="2" height="1.8" fill="#dcdcaa" fill-opacity="0.70"/><rect x="7" y="236" width="3" height="1.8" fill="#9cdcfe" fill-opacity="0.70"/><rect x="10" y="236" width="1" height="1.8" fill="#9cdcfe" fill-opacity="0.60"/><rect x="11" y="236" width="1" height="1.8" fill="#d4d4d4" fill-opacity="0.40"/><rect x="0" y="238" width="2" height="1.8" fill="#9cdcfe" fill-opacity="0.70"/><rect x="3" y="238" width="1" height="1.8" fill="#d4d4d4" fill-opacity="0.40"/><rect x="5" y="238" width="3" height="1.8" fill="#9cdcfe" fill-opacity="0.70"/><rect x="8" y="238" width="1" height="1.8" fill="#9cdcfe" fill-opacity="0.60"/><rect x="10" y="238" width="1" height="1.8" fill="#d4d4d4" fill-opacity="0.70"/><rect x="12" y="238" width="3" height="1.8" fill="#9cdcfe" fill-opacity="0.70"/><rect x="15" y="238" width="1" height="1.8" fill="#9cdcfe" fill-opacity="0.60"/><rect x="16" y="238" width="1" height="1.8" fill="#d4d4d4" fill-opacity="0.40"/><rect x="0" y="240" width="4" height="1.8" fill="#9cdcfe" fill-opacity="0.70"/><rect x="5" y="240" width="2" height="1.8" fill="#dcdcaa" fill-opacity="0.70"/><rect x="7" y="240" width="1" height="1.8" fill="#ce9178" fill-opacity="0.40"/><rect x="9" y="240" width="2" height="1.8" fill="#d7ba7d" fill-opacity="0.70"/><rect x="12" y="240" width="1" height="1.8" fill="#ce9178" fill-opacity="0.85"/><rect x="13" y="240" width="5" height="1.8" fill="#ce9178" fill-opacity="0.70"/><rect x="19" y="240" width="2" height="1.8" fill="#ce9178" fill-opacity="0.70"/><rect x="22" y="240" width="1" height="1.8" fill="#ce9178" fill-opacity="0.40"/><rect x="24" y="240" width="2" height="1.8" fill="#dcdcaa" fill-opacity="0.70"/><rect x="27" y="240" width="3" height="1.8" fill="#9cdcfe" fill-opacity="0.70"/><rect x="30" y="240" width="1" height="1.8" fill="#9cdcfe" fill-opacity="0.60"/><rect x="31" y="240" width="2" height="1.8" fill="#dcdcaa" fill-opacity="0.70"/><rect x="34" y="240" width="1" height="1.8" fill="#ce9178" fill-opacity="0.40"/><rect x="36" y="240" width="1" height="1.8" fill="#ce9178" fill-opacity="0.60"/><rect x="37" y="240" width="1" height="1.8" fill="#ce9178" fill-opacity="0.70"/><rect x="38" y="240" width="1" height="1.8" fill="#ce9178" fill-opacity="0.40"/><rect x="40" y="240" width="1" height="1.8" fill="#ce9178" fill-opacity="0.40"/><rect x="42" y="240" width="2" height="1.8" fill="#dcdcaa" fill-opacity="0.70"/><rect x="44" y="240" width="2" height="1.8" fill="#9cdcfe" fill-opacity="0.70"/><rect x="46" y="240" width="1" height="1.8" fill="#d4d4d4" fill-opacity="0.40"/><rect x="0" y="242" width="1" height="1.8" fill="#ffd700" fill-opacity="0.60"/><rect x="0" y="244" width="2" height="1.8" fill="#569cd6" fill-opacity="0.70"/><rect x="2" y="244" width="1" height="1.8" fill="#569cd6" fill-opacity="0.60"/><rect x="3" y="244" width="1" height="1.8" fill="#569cd6" fill-opacity="0.70"/><rect x="5" y="244" width="3" height="1.8" fill="#dcdcaa" fill-opacity="0.70"/><rect x="8" y="244" width="1" height="1.8" fill="#ffd700" fill-opacity="0.60"/><rect x="9" y="244" width="1" height="1.8" fill="#ffd700" fill-opacity="0.60"/><rect x="0" y="246" width="1" height="1.8" fill="#ffd700" fill-opacity="0.60"/><rect x="0" y="248" width="1" height="1.8" fill="#569cd6" fill-opacity="0.70"/><rect x="1" y="248" width="1" height="1.8" fill="#569cd6" fill-opacity="0.60"/><rect x="2" y="248" width="3" height="1.8" fill="#569cd6" fill-opacity="0.70"/><rect x="6" y="248" width="1" height="1.8" fill="#9cdcfe" fill-opacity="0.70"/><rect x="7" y="248" width="1" height="1.8" fill="#d4d4d4" fill-opacity="0.40"/><rect x="0" y="250" width="1" height="1.8" fill="#569cd6" fill-opacity="0.60"/><rect x="1" y="250" width="2" height="1.8" fill="#569cd6" fill-opacity="0.70"/><rect x="4" y="250" width="3" height="1.8" fill="#9cdcfe" fill-opacity="0.70"/><rect x="7" y="250" width="1" height="1.8" fill="#9cdcfe" fill-opacity="0.60"/><rect x="8" y="250" width="1" height="1.8" fill="#d4d4d4" fill-opacity="0.40"/><rect x="0" y="252" width="4" height="1.8" fill="#9cdcfe" fill-opacity="0.70"/><rect x="5" y="252" width="2" height="1.8" fill="#dcdcaa" fill-opacity="0.70"/><rect x="8" y="252" width="1" height="1.8" fill="#ce9178" fill-opacity="0.40"/><rect x="9" y="252" width="2" height="1.8" fill="#d7ba7d" fill-opacity="0.70"/><rect x="12" y="252" width="1" height="1.8" fill="#ce9178" fill-opacity="0.85"/><rect x="13" y="252" width="4" height="1.8" fill="#ce9178" fill-opacity="0.70"/><rect x="18" y="252" width="3" height="1.8" fill="#ce9178" fill-opacity="0.70"/><rect x="22" y="252" width="6" height="1.8" fill="#ce9178" fill-opacity="0.70"/><rect x="29" y="252" width="2" height="1.8" fill="#ce9178" fill-opacity="0.70"/><rect x="32" y="252" width="1" height="1.8" fill="#ce9178" fill-opacity="0.70"/><rect x="33" y="252" width="1" height="1.8" fill="#ce9178" fill-opacity="0.60"/><rect x="34" y="252" width="2" height="1.8" fill="#ce9178" fill-opacity="0.70"/><rect x="37" y="252" width="3" height="1.8" fill="#ce9178" fill-opacity="0.70"/><rect x="41" y="252" width="1" height="1.8" fill="#ce9178" fill-opacity="0.85"/><rect x="42" y="252" width="5" height="1.8" fill="#ce9178" fill-opacity="0.70"/><rect x="48" y="252" width="1" height="1.8" fill="#ce9178" fill-opacity="0.85"/><rect x="49" y="252" width="3" height="1.8" fill="#ce9178" fill-opacity="0.70"/><rect x="52" y="252" width="1" height="1.8" fill="#ce9178" fill-opacity="0.40"/><rect x="53" y="252" width="1" height="1.8" fill="#ce9178" fill-opacity="0.40"/><rect x="54" y="252" width="1" height="1.8" fill="#d4d4d4" fill-opacity="0.40"/><rect x="0" y="254" width="1" height="1.8" fill="#9cdcfe" fill-opacity="0.70"/><rect x="1" y="254" width="1" height="1.8" fill="#9cdcfe" fill-opacity="0.60"/><rect x="2" y="254" width="1" height="1.8" fill="#9cdcfe" fill-opacity="0.70"/><rect x="4" y="254" width="2" height="1.8" fill="#dcdcaa" fill-opacity="0.70"/><rect x="7" y="254" width="3" height="1.8" fill="#9cdcfe" fill-opacity="0.70"/><rect x="10" y="254" width="1" height="1.8" fill="#9cdcfe" fill-opacity="0.60"/><rect x="11" y="254" width="1" height="1.8" fill="#d4d4d4" fill-opacity="0.40"/><rect x="0" y="256" width="1" height="1.8" fill="#9cdcfe" fill-opacity="0.70"/><rect x="2" y="256" width="1" height="1.8" fill="#d4d4d4" fill-opacity="0.40"/><rect x="4" y="256" width="4" height="1.8" fill="#dcdcaa" fill-opacity="0.70"/><rect x="8" y="256" width="1" height="1.8" fill="#da70d6" fill-opacity="0.60"/><rect x="9" y="256" width="3" height="1.8" fill="#9cdcfe" fill-opacity="0.70"/><rect x="12" y="256" width="1" height="1.8" fill="#9cdcfe" fill-opacity="0.60"/><rect x="13" y="256" width="1" height="1.8" fill="#da70d6" fill-opacity="0.60"/><rect x="14" y="256" width="1" height="1.8" fill="#d4d4d4" fill-opacity="0.40"/><rect x="0" y="258" width="4" height="1.8" fill="#9cdcfe" fill-opacity="0.70"/><rect x="5" y="258" width="2" height="1.8" fill="#dcdcaa" fill-opacity="0.70"/><rect x="7" y="258" width="1" height="1.8" fill="#ce9178" fill-opacity="0.40"/><rect x="9" y="258" width="2" height="1.8" fill="#d7ba7d" fill-opacity="0.70"/><rect x="12" y="258" width="1" height="1.8" fill="#ce9178" fill-opacity="0.85"/><rect x="13" y="258" width="5" height="1.8" fill="#ce9178" fill-opacity="0.70"/><rect x="19" y="258" width="1" height="1.8" fill="#ce9178" fill-opacity="0.85"/><rect x="20" y="258" width="3" height="1.8" fill="#ce9178" fill-opacity="0.70"/><rect x="24" y="258" width="2" height="1.8" fill="#ce9178" fill-opacity="0.70"/><rect x="27" y="258" width="1" height="1.8" fill="#ce9178" fill-opacity="0.40"/><rect x="29" y="258" width="2" height="1.8" fill="#dcdcaa" fill-opacity="0.70"/><rect x="32" y="258" width="3" height="1.8" fill="#9cdcfe" fill-opacity="0.70"/><rect x="35" y="258" width="1" height="1.8" fill="#9cdcfe" fill-opacity="0.60"/><rect x="36" y="258" width="2" height="1.8" fill="#dcdcaa" fill-opacity="0.70"/><rect x="39" y="258" width="1" height="1.8" fill="#ce9178" fill-opacity="0.40"/><rect x="41" y="258" width="1" height="1.8" fill="#ce9178" fill-opacity="0.60"/><rect x="42" y="258" width="1" height="1.8" fill="#ce9178" fill-opacity="0.70"/><rect x="43" y="258" width="1" height="1.8" fill="#ce9178" fill-opacity="0.40"/><rect x="45" y="258" width="1" height="1.8" fill="#ce9178" fill-opacity="0.40"/><rect x="47" y="258" width="2" height="1.8" fill="#dcdcaa" fill-opacity="0.70"/><rect x="49" y="258" width="1" height="1.8" fill="#9cdcfe" fill-opacity="0.70"/><rect x="50" y="258" width="1" height="1.8" fill="#d4d4d4" fill-opacity="0.40"/><rect x="0" y="260" width="1" height="1.8" fill="#ffd700" fill-opacity="0.60"/></svg>
<div style="position:absolute;left:930px;top:0;width:1px;height:880px;background:#333333"></div>
<div style="position:absolute;left:913px;top:0;width:18px;height:2px;background:#1a1a1a"></div>
<div style="position:absolute;left:913px;top:2px;width:18px;height:194px;background:#3e3e3e"></div>
<div style="position:absolute;left:1843px;top:2px;width:1px;height:878px;background:#0b0b0b"></div>
<div style="position:absolute;left:931px;top:2px;width:824px;height:3px;background:linear-gradient(#101010,#1f1f1f)"></div>
<div style="position:absolute;left:1843px;top:2px;width:17px;height:3px;background:linear-gradient(#101010,#1f1f1f)"></div>
<div style="position:absolute;left:1015px;top:2px;width:1px;height:23.75px;background:#a0a0a0"></div>
<div style="position:absolute;left:0;top:880px;width:1860px;height:1px;background:#2b2b2b"></div>
<div style="position:absolute;left:133.3px;top:307.0px;width:2px;height:2px;background:#8a8a8a"></div>
<div style="position:absolute;left:137.6px;top:307.0px;width:2px;height:2px;background:#8a8a8a"></div>
<div style="position:absolute;left:141.9px;top:307.0px;width:2px;height:2px;background:#8a8a8a"></div>
</body></html>
